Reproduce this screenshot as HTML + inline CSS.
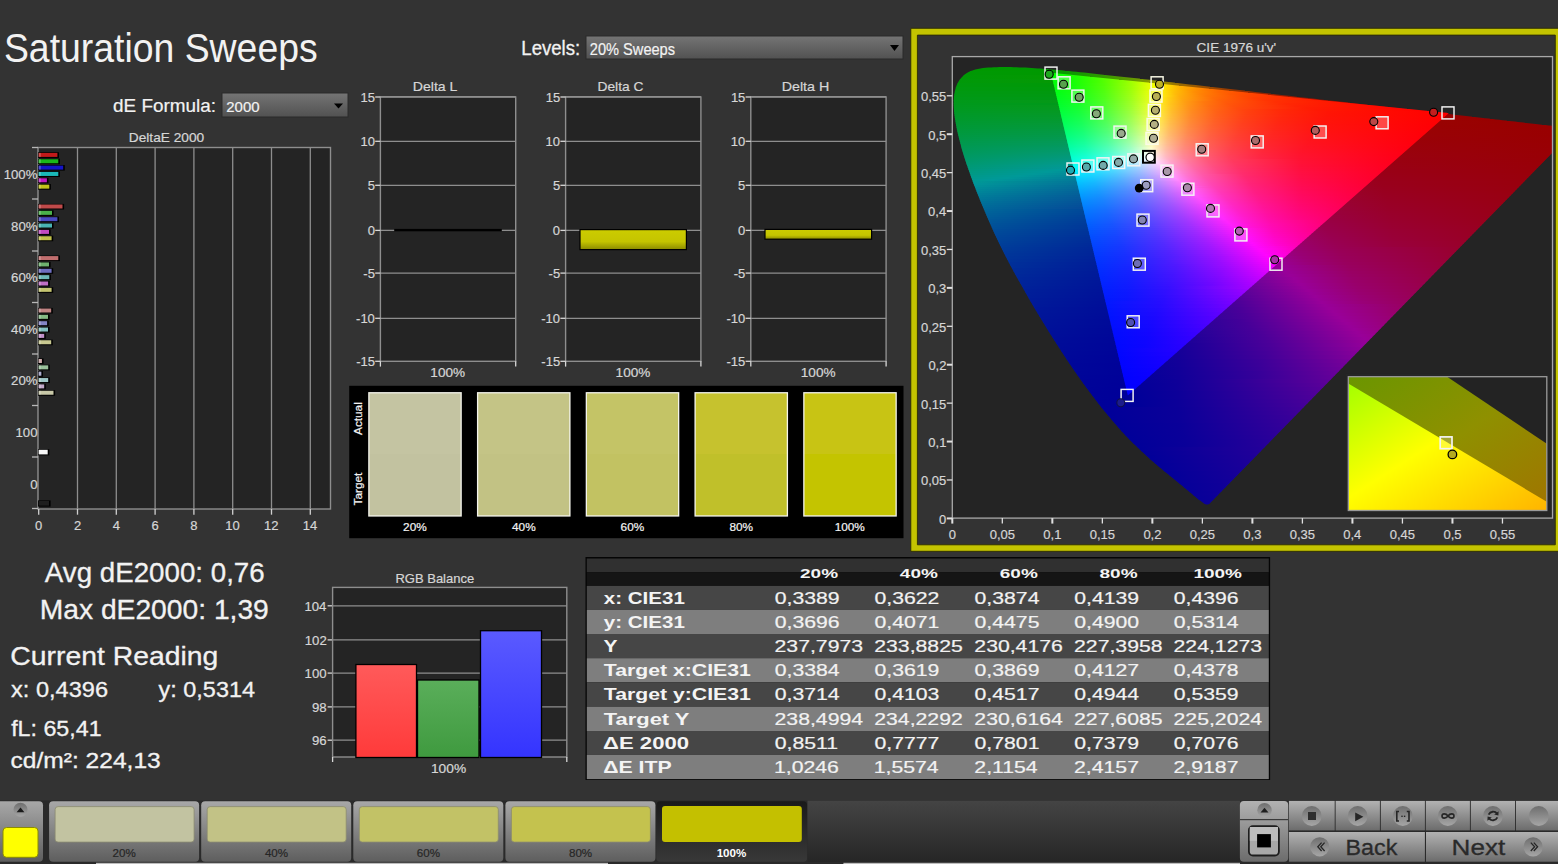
<!DOCTYPE html><html><head><meta charset="utf-8"><style>html,body{margin:0;padding:0;background:#333;overflow:hidden}svg{display:block;font-family:"Liberation Sans",sans-serif}</style></head><body>
<svg width="1558" height="864" viewBox="0 0 1558 864">
<defs>
<linearGradient id="dd" x1="0" y1="0" x2="0" y2="1"><stop offset="0" stop-color="#747474"/><stop offset="1" stop-color="#525252"/></linearGradient>
<linearGradient id="ybar" x1="0" y1="0" x2="0" y2="1"><stop offset="0" stop-color="#cccc00"/><stop offset=".6" stop-color="#c4c400"/><stop offset="1" stop-color="#8a8a00"/></linearGradient>
<linearGradient id="btn" x1="0" y1="0" x2="0" y2="1"><stop offset="0" stop-color="#a8a8a8"/><stop offset="1" stop-color="#5e5e5e"/></linearGradient>
<linearGradient id="btnsel" x1="0" y1="0" x2="0" y2="1"><stop offset="0" stop-color="#1a1a1a"/><stop offset="1" stop-color="#383838"/></linearGradient>
<linearGradient id="barbg" x1="0" y1="0" x2="0" y2="1"><stop offset="0" stop-color="#1e1e1e"/><stop offset="1" stop-color="#3c3c3c"/></linearGradient>
<linearGradient id="hdr" x1="0" y1="0" x2="0" y2="1"><stop offset="0" stop-color="#333"/><stop offset=".5" stop-color="#2a2a2a"/><stop offset=".5" stop-color="#161616"/><stop offset="1" stop-color="#141414"/></linearGradient>
<linearGradient id="rb" x1="0" y1="0" x2="0" y2="1"><stop offset="0" stop-color="#ff5a5a"/><stop offset="1" stop-color="#ff3a3a"/></linearGradient>
<linearGradient id="gb" x1="0" y1="0" x2="0" y2="1"><stop offset="0" stop-color="#5aae5a"/><stop offset="1" stop-color="#3f9a3f"/></linearGradient>
<linearGradient id="bb" x1="0" y1="0" x2="0" y2="1"><stop offset="0" stop-color="#5a5aff"/><stop offset="1" stop-color="#3434ff"/></linearGradient>
<radialGradient id="circ" cx=".5" cy=".3" r=".7"><stop offset="0" stop-color="#9a9a9a"/><stop offset="1" stop-color="#5a5a5a"/></radialGradient>
</defs>
<rect x="0" y="0" width="1558" height="864" fill="#333333"/>
<text x="3.92" y="61.7" font-size="40.5" textLength="313.76" lengthAdjust="spacingAndGlyphs" fill="#f2f2f2">Saturation Sweeps</text>
<text x="521.31" y="55.2" font-size="19.5" textLength="58.93" lengthAdjust="spacingAndGlyphs" fill="#f2f2f2" stroke="#f2f2f2" stroke-width="0.3">Levels:</text>
<rect x="585.5" y="35.5" width="318" height="24" fill="#2a2a2a"/>
<rect x="586.5" y="36.5" width="316" height="22" fill="url(#dd)"/>
<text x="589.87" y="54.8" font-size="16.2" textLength="85.17" lengthAdjust="spacingAndGlyphs" fill="#f2f2f2" stroke="#f2f2f2" stroke-width="0.2">20% Sweeps</text>
<path d="M890 45 L899 45 L894.5 51 Z" fill="#000"/>
<text x="113.04" y="111.5" font-size="17.6" textLength="102.99" lengthAdjust="spacingAndGlyphs" fill="#f2f2f2" stroke="#f2f2f2" stroke-width="0.2">dE Formula:</text>
<rect x="221.5" y="92.5" width="127" height="25" fill="#2a2a2a"/>
<rect x="222.5" y="93.5" width="125" height="23" fill="url(#dd)"/>
<text x="226.25" y="111.5" font-size="15.2" textLength="33.27" lengthAdjust="spacingAndGlyphs" fill="#f2f2f2" stroke="#f2f2f2" stroke-width="0.2">2000</text>
<path d="M334 103.5 L343 103.5 L338.5 108.5 Z" fill="#000"/>
<text x="128.8" y="142" font-size="12.9" textLength="75.36" lengthAdjust="spacingAndGlyphs" fill="#d6d6d6" stroke="#d6d6d6" stroke-width="0.2">DeltaE 2000</text>
<rect x="38" y="147.5" width="292.5" height="361.5" fill="#242424"/>
<line x1="77.5" y1="147.5" x2="77.5" y2="509" stroke="#8e8e8e" stroke-width="1.3"/>
<line x1="116.3" y1="147.5" x2="116.3" y2="509" stroke="#8e8e8e" stroke-width="1.3"/>
<line x1="155.1" y1="147.5" x2="155.1" y2="509" stroke="#8e8e8e" stroke-width="1.3"/>
<line x1="193.9" y1="147.5" x2="193.9" y2="509" stroke="#8e8e8e" stroke-width="1.3"/>
<line x1="232.7" y1="147.5" x2="232.7" y2="509" stroke="#8e8e8e" stroke-width="1.3"/>
<line x1="271.5" y1="147.5" x2="271.5" y2="509" stroke="#8e8e8e" stroke-width="1.3"/>
<line x1="310.3" y1="147.5" x2="310.3" y2="509" stroke="#8e8e8e" stroke-width="1.3"/>
<rect x="38" y="147.5" width="292.5" height="361.5" fill="none" stroke="#8e8e8e" stroke-width="1.4"/>
<line x1="32" y1="147.5" x2="38" y2="147.5" stroke="#b8b8b8" stroke-width="1.3"/>
<line x1="32" y1="199" x2="38" y2="199" stroke="#b8b8b8" stroke-width="1.3"/>
<line x1="32" y1="251" x2="38" y2="251" stroke="#b8b8b8" stroke-width="1.3"/>
<line x1="32" y1="302.5" x2="38" y2="302.5" stroke="#b8b8b8" stroke-width="1.3"/>
<line x1="32" y1="354" x2="38" y2="354" stroke="#b8b8b8" stroke-width="1.3"/>
<line x1="32" y1="405.5" x2="38" y2="405.5" stroke="#b8b8b8" stroke-width="1.3"/>
<line x1="32" y1="457" x2="38" y2="457" stroke="#b8b8b8" stroke-width="1.3"/>
<line x1="32" y1="508.5" x2="38" y2="508.5" stroke="#b8b8b8" stroke-width="1.3"/>
<line x1="38.7" y1="509" x2="38.7" y2="514.7" stroke="#d0d0d0" stroke-width="1.3"/>
<text x="35.06" y="530.2" font-size="13" textLength="7.23" lengthAdjust="spacingAndGlyphs" fill="#d6d6d6" stroke="#d6d6d6" stroke-width="0.2">0</text>
<line x1="77.5" y1="509" x2="77.5" y2="514.7" stroke="#d0d0d0" stroke-width="1.3"/>
<text x="73.89" y="530.2" font-size="13" textLength="7.23" lengthAdjust="spacingAndGlyphs" fill="#d6d6d6" stroke="#d6d6d6" stroke-width="0.2">2</text>
<line x1="116.3" y1="509" x2="116.3" y2="514.7" stroke="#d0d0d0" stroke-width="1.3"/>
<text x="112.72" y="530.2" font-size="13" textLength="7.23" lengthAdjust="spacingAndGlyphs" fill="#d6d6d6" stroke="#d6d6d6" stroke-width="0.2">4</text>
<line x1="155.1" y1="509" x2="155.1" y2="514.7" stroke="#d0d0d0" stroke-width="1.3"/>
<text x="151.43" y="530.2" font-size="13" textLength="7.23" lengthAdjust="spacingAndGlyphs" fill="#d6d6d6" stroke="#d6d6d6" stroke-width="0.2">6</text>
<line x1="193.9" y1="509" x2="193.9" y2="514.7" stroke="#d0d0d0" stroke-width="1.3"/>
<text x="190.26" y="530.2" font-size="13" textLength="7.23" lengthAdjust="spacingAndGlyphs" fill="#d6d6d6" stroke="#d6d6d6" stroke-width="0.2">8</text>
<line x1="232.7" y1="509" x2="232.7" y2="514.7" stroke="#d0d0d0" stroke-width="1.3"/>
<text x="225.22" y="530.2" font-size="13" textLength="14.46" lengthAdjust="spacingAndGlyphs" fill="#d6d6d6" stroke="#d6d6d6" stroke-width="0.2">10</text>
<line x1="271.5" y1="509" x2="271.5" y2="514.7" stroke="#d0d0d0" stroke-width="1.3"/>
<text x="264.12" y="530.2" font-size="13" textLength="14.46" lengthAdjust="spacingAndGlyphs" fill="#d6d6d6" stroke="#d6d6d6" stroke-width="0.2">12</text>
<line x1="310.3" y1="509" x2="310.3" y2="514.7" stroke="#d0d0d0" stroke-width="1.3"/>
<text x="302.76" y="530.2" font-size="13" textLength="14.46" lengthAdjust="spacingAndGlyphs" fill="#d6d6d6" stroke="#d6d6d6" stroke-width="0.2">14</text>
<text x="3.67" y="179" font-size="13.2" textLength="33.76" lengthAdjust="spacingAndGlyphs" fill="#d6d6d6" stroke="#d6d6d6" stroke-width="0.2">100%</text>
<text x="11.06" y="230.5" font-size="13.2" textLength="26.42" lengthAdjust="spacingAndGlyphs" fill="#d6d6d6" stroke="#d6d6d6" stroke-width="0.2">80%</text>
<text x="11.06" y="282" font-size="13.2" textLength="26.42" lengthAdjust="spacingAndGlyphs" fill="#d6d6d6" stroke="#d6d6d6" stroke-width="0.2">60%</text>
<text x="11.06" y="333.5" font-size="13.2" textLength="26.42" lengthAdjust="spacingAndGlyphs" fill="#d6d6d6" stroke="#d6d6d6" stroke-width="0.2">40%</text>
<text x="11.06" y="385" font-size="13.2" textLength="26.42" lengthAdjust="spacingAndGlyphs" fill="#d6d6d6" stroke="#d6d6d6" stroke-width="0.2">20%</text>
<text x="15.48" y="437" font-size="13.2" textLength="22.02" lengthAdjust="spacingAndGlyphs" fill="#d6d6d6" stroke="#d6d6d6" stroke-width="0.2">100</text>
<text x="30.14" y="488.5" font-size="13.2" textLength="7.34" lengthAdjust="spacingAndGlyphs" fill="#d6d6d6" stroke="#d6d6d6" stroke-width="0.2">0</text>
<rect x="38" y="152.3" width="21" height="5.6" fill="#000"/>
<rect x="38.6" y="152.9" width="18.8" height="4" fill="#c21a1a"/>
<rect x="38.6" y="152.9" width="2.2" height="4" fill="#fff" fill-opacity=".25"/>
<rect x="38" y="158.65" width="21.9" height="5.6" fill="#000"/>
<rect x="38.6" y="159.25" width="19.7" height="4" fill="#1ab81a"/>
<rect x="38.6" y="159.25" width="2.2" height="4" fill="#fff" fill-opacity=".25"/>
<rect x="38" y="165" width="26.8" height="5.6" fill="#000"/>
<rect x="38.6" y="165.6" width="24.6" height="4" fill="#1414c8"/>
<rect x="38.6" y="165.6" width="2.2" height="4" fill="#fff" fill-opacity=".25"/>
<rect x="38" y="171.35" width="21.9" height="5.6" fill="#000"/>
<rect x="38.6" y="171.95" width="19.7" height="4" fill="#1ab8b8"/>
<rect x="38.6" y="171.95" width="2.2" height="4" fill="#fff" fill-opacity=".25"/>
<rect x="38" y="177.7" width="10.5" height="5.6" fill="#000"/>
<rect x="38.6" y="178.3" width="8.3" height="4" fill="#c01ac0"/>
<rect x="38.6" y="178.3" width="2.2" height="4" fill="#fff" fill-opacity=".25"/>
<rect x="38" y="184.05" width="12.9" height="5.6" fill="#000"/>
<rect x="38.6" y="184.65" width="10.7" height="4" fill="#c2c21a"/>
<rect x="38.6" y="184.65" width="2.2" height="4" fill="#fff" fill-opacity=".25"/>
<rect x="38" y="203.9" width="26.1" height="5.6" fill="#000"/>
<rect x="38.6" y="204.5" width="23.9" height="4" fill="#c04a4a"/>
<rect x="38.6" y="204.5" width="2.2" height="4" fill="#fff" fill-opacity=".25"/>
<rect x="38" y="210.25" width="15.6" height="5.6" fill="#000"/>
<rect x="38.6" y="210.85" width="13.4" height="4" fill="#4ab04a"/>
<rect x="38.6" y="210.85" width="2.2" height="4" fill="#fff" fill-opacity=".25"/>
<rect x="38" y="216.6" width="21" height="5.6" fill="#000"/>
<rect x="38.6" y="217.2" width="18.8" height="4" fill="#4a4ac0"/>
<rect x="38.6" y="217.2" width="2.2" height="4" fill="#fff" fill-opacity=".25"/>
<rect x="38" y="222.95" width="15.6" height="5.6" fill="#000"/>
<rect x="38.6" y="223.55" width="13.4" height="4" fill="#4ab4b4"/>
<rect x="38.6" y="223.55" width="2.2" height="4" fill="#fff" fill-opacity=".25"/>
<rect x="38" y="229.3" width="12.6" height="5.6" fill="#000"/>
<rect x="38.6" y="229.9" width="10.4" height="4" fill="#c04ac0"/>
<rect x="38.6" y="229.9" width="2.2" height="4" fill="#fff" fill-opacity=".25"/>
<rect x="38" y="235.65" width="15.2" height="5.6" fill="#000"/>
<rect x="38.6" y="236.25" width="13" height="4" fill="#c0c04a"/>
<rect x="38.6" y="236.25" width="2.2" height="4" fill="#fff" fill-opacity=".25"/>
<rect x="38" y="255.5" width="21.9" height="5.6" fill="#000"/>
<rect x="38.6" y="256.1" width="19.7" height="4" fill="#c06e6e"/>
<rect x="38.6" y="256.1" width="2.2" height="4" fill="#fff" fill-opacity=".25"/>
<rect x="38" y="261.85" width="12.6" height="5.6" fill="#000"/>
<rect x="38.6" y="262.45" width="10.4" height="4" fill="#6eb06e"/>
<rect x="38.6" y="262.45" width="2.2" height="4" fill="#fff" fill-opacity=".25"/>
<rect x="38" y="268.2" width="15.2" height="5.6" fill="#000"/>
<rect x="38.6" y="268.8" width="13" height="4" fill="#6e6ec0"/>
<rect x="38.6" y="268.8" width="2.2" height="4" fill="#fff" fill-opacity=".25"/>
<rect x="38" y="274.55" width="12.9" height="5.6" fill="#000"/>
<rect x="38.6" y="275.15" width="10.7" height="4" fill="#6eb8b8"/>
<rect x="38.6" y="275.15" width="2.2" height="4" fill="#fff" fill-opacity=".25"/>
<rect x="38" y="280.9" width="11.7" height="5.6" fill="#000"/>
<rect x="38.6" y="281.5" width="9.5" height="4" fill="#c070c4"/>
<rect x="38.6" y="281.5" width="2.2" height="4" fill="#fff" fill-opacity=".25"/>
<rect x="38" y="287.25" width="15.2" height="5.6" fill="#000"/>
<rect x="38.6" y="287.85" width="13" height="4" fill="#c4c470"/>
<rect x="38.6" y="287.85" width="2.2" height="4" fill="#fff" fill-opacity=".25"/>
<rect x="38" y="307.9" width="14.8" height="5.6" fill="#000"/>
<rect x="38.6" y="308.5" width="12.6" height="4" fill="#c08484"/>
<rect x="38.6" y="308.5" width="2.2" height="4" fill="#fff" fill-opacity=".25"/>
<rect x="38" y="314.25" width="11.6" height="5.6" fill="#000"/>
<rect x="38.6" y="314.85" width="9.4" height="4" fill="#84b884"/>
<rect x="38.6" y="314.85" width="2.2" height="4" fill="#fff" fill-opacity=".25"/>
<rect x="38" y="320.6" width="10.7" height="5.6" fill="#000"/>
<rect x="38.6" y="321.2" width="8.5" height="4" fill="#8484c4"/>
<rect x="38.6" y="321.2" width="2.2" height="4" fill="#fff" fill-opacity=".25"/>
<rect x="38" y="326.95" width="11.6" height="5.6" fill="#000"/>
<rect x="38.6" y="327.55" width="9.4" height="4" fill="#84c0c0"/>
<rect x="38.6" y="327.55" width="2.2" height="4" fill="#fff" fill-opacity=".25"/>
<rect x="38" y="333.3" width="7.8" height="5.6" fill="#000"/>
<rect x="38.6" y="333.9" width="5.6" height="4" fill="#c090c8"/>
<rect x="38.6" y="333.9" width="2.2" height="4" fill="#fff" fill-opacity=".25"/>
<rect x="38" y="339.65" width="14.8" height="5.6" fill="#000"/>
<rect x="38.6" y="340.25" width="12.6" height="4" fill="#c8c890"/>
<rect x="38.6" y="340.25" width="2.2" height="4" fill="#fff" fill-opacity=".25"/>
<rect x="38" y="358.4" width="5.6" height="5.6" fill="#000"/>
<rect x="38.6" y="359" width="3.4" height="4" fill="#c09a9a"/>
<rect x="38.6" y="359" width="2.2" height="4" fill="#fff" fill-opacity=".25"/>
<rect x="38" y="364.75" width="11.8" height="5.6" fill="#000"/>
<rect x="38.6" y="365.35" width="9.6" height="4" fill="#9ac09a"/>
<rect x="38.6" y="365.35" width="2.2" height="4" fill="#fff" fill-opacity=".25"/>
<rect x="38" y="371.1" width="5" height="5.6" fill="#000"/>
<rect x="38.6" y="371.7" width="2.8" height="4" fill="#9a9ac0"/>
<rect x="38.6" y="371.7" width="2.2" height="4" fill="#fff" fill-opacity=".25"/>
<rect x="38" y="377.45" width="11.8" height="5.6" fill="#000"/>
<rect x="38.6" y="378.05" width="9.6" height="4" fill="#a0c8c8"/>
<rect x="38.6" y="378.05" width="2.2" height="4" fill="#fff" fill-opacity=".25"/>
<rect x="38" y="383.8" width="7.8" height="5.6" fill="#000"/>
<rect x="38.6" y="384.4" width="5.6" height="4" fill="#c0a8c8"/>
<rect x="38.6" y="384.4" width="2.2" height="4" fill="#fff" fill-opacity=".25"/>
<rect x="38" y="390.15" width="17.1" height="5.6" fill="#000"/>
<rect x="38.6" y="390.75" width="14.9" height="4" fill="#c8c8a8"/>
<rect x="38.6" y="390.75" width="2.2" height="4" fill="#fff" fill-opacity=".25"/>
<rect x="38" y="449.2" width="11.3" height="6.2" fill="#000"/>
<rect x="38.6" y="449.8" width="9.1" height="4.6" fill="#f6f6f6"/>
<rect x="38" y="500.4" width="12.6" height="6.2" fill="#000"/>
<rect x="38.6" y="501" width="10.4" height="4.6" fill="#1e1e1e"/>
<text x="412.77" y="91.3" font-size="12.9" textLength="44.7" lengthAdjust="spacingAndGlyphs" fill="#d6d6d6" stroke="#d6d6d6" stroke-width="0.2">Delta L</text>
<rect x="380.4" y="97" width="135.3" height="264.3" fill="#242424"/>
<line x1="380.4" y1="141.3" x2="515.7" y2="141.3" stroke="#8e8e8e" stroke-width="1.3"/>
<line x1="380.4" y1="185.3" x2="515.7" y2="185.3" stroke="#8e8e8e" stroke-width="1.3"/>
<line x1="380.4" y1="230.4" x2="515.7" y2="230.4" stroke="#8e8e8e" stroke-width="1.3"/>
<line x1="380.4" y1="273.1" x2="515.7" y2="273.1" stroke="#8e8e8e" stroke-width="1.3"/>
<line x1="380.4" y1="318.3" x2="515.7" y2="318.3" stroke="#8e8e8e" stroke-width="1.3"/>
<rect x="380.4" y="97" width="135.3" height="264.3" fill="none" stroke="#8e8e8e" stroke-width="1.4"/>
<line x1="380.4" y1="96.7" x2="515.7" y2="96.7" stroke="#8e8e8e" stroke-width="1.4"/>
<line x1="375.2" y1="97" x2="380.4" y2="97" stroke="#d8d8d8" stroke-width="1.3"/>
<text x="360.49" y="101.6" font-size="13" textLength="14.46" lengthAdjust="spacingAndGlyphs" fill="#d6d6d6" stroke="#d6d6d6" stroke-width="0.2">15</text>
<line x1="375.2" y1="141.3" x2="380.4" y2="141.3" stroke="#d8d8d8" stroke-width="1.3"/>
<text x="360.42" y="145.9" font-size="13" textLength="14.46" lengthAdjust="spacingAndGlyphs" fill="#d6d6d6" stroke="#d6d6d6" stroke-width="0.2">10</text>
<line x1="375.2" y1="185.3" x2="380.4" y2="185.3" stroke="#d8d8d8" stroke-width="1.3"/>
<text x="367.7" y="189.9" font-size="13" textLength="7.23" lengthAdjust="spacingAndGlyphs" fill="#d6d6d6" stroke="#d6d6d6" stroke-width="0.2">5</text>
<line x1="375.2" y1="230.4" x2="380.4" y2="230.4" stroke="#d8d8d8" stroke-width="1.3"/>
<text x="367.64" y="235" font-size="13" textLength="7.23" lengthAdjust="spacingAndGlyphs" fill="#d6d6d6" stroke="#d6d6d6" stroke-width="0.2">0</text>
<line x1="375.2" y1="273.1" x2="380.4" y2="273.1" stroke="#d8d8d8" stroke-width="1.3"/>
<text x="363.35" y="277.7" font-size="13" textLength="11.56" lengthAdjust="spacingAndGlyphs" fill="#d6d6d6" stroke="#d6d6d6" stroke-width="0.2">-5</text>
<line x1="375.2" y1="318.3" x2="380.4" y2="318.3" stroke="#d8d8d8" stroke-width="1.3"/>
<text x="356.07" y="322.9" font-size="13" textLength="18.79" lengthAdjust="spacingAndGlyphs" fill="#d6d6d6" stroke="#d6d6d6" stroke-width="0.2">-10</text>
<line x1="375.2" y1="361.3" x2="380.4" y2="361.3" stroke="#d8d8d8" stroke-width="1.3"/>
<text x="356.13" y="365.9" font-size="13" textLength="18.79" lengthAdjust="spacingAndGlyphs" fill="#d6d6d6" stroke="#d6d6d6" stroke-width="0.2">-15</text>
<line x1="380.4" y1="361.3" x2="380.4" y2="366.6" stroke="#d8d8d8" stroke-width="1.3"/>
<line x1="515.7" y1="361.3" x2="515.7" y2="366.6" stroke="#d8d8d8" stroke-width="1.3"/>
<text x="430.38" y="377.4" font-size="12.9" textLength="34.76" lengthAdjust="spacingAndGlyphs" fill="#d6d6d6" stroke="#d6d6d6" stroke-width="0.2">100%</text>
<text x="597.5" y="91.3" font-size="12.9" textLength="45.95" lengthAdjust="spacingAndGlyphs" fill="#d6d6d6" stroke="#d6d6d6" stroke-width="0.2">Delta C</text>
<rect x="565.6" y="97" width="135.3" height="264.3" fill="#242424"/>
<line x1="565.6" y1="141.3" x2="700.9" y2="141.3" stroke="#8e8e8e" stroke-width="1.3"/>
<line x1="565.6" y1="185.3" x2="700.9" y2="185.3" stroke="#8e8e8e" stroke-width="1.3"/>
<line x1="565.6" y1="230.4" x2="700.9" y2="230.4" stroke="#8e8e8e" stroke-width="1.3"/>
<line x1="565.6" y1="273.1" x2="700.9" y2="273.1" stroke="#8e8e8e" stroke-width="1.3"/>
<line x1="565.6" y1="318.3" x2="700.9" y2="318.3" stroke="#8e8e8e" stroke-width="1.3"/>
<rect x="565.6" y="97" width="135.3" height="264.3" fill="none" stroke="#8e8e8e" stroke-width="1.4"/>
<line x1="565.6" y1="96.7" x2="700.9" y2="96.7" stroke="#8e8e8e" stroke-width="1.4"/>
<line x1="560.4" y1="97" x2="565.6" y2="97" stroke="#d8d8d8" stroke-width="1.3"/>
<text x="545.69" y="101.6" font-size="13" textLength="14.46" lengthAdjust="spacingAndGlyphs" fill="#d6d6d6" stroke="#d6d6d6" stroke-width="0.2">15</text>
<line x1="560.4" y1="141.3" x2="565.6" y2="141.3" stroke="#d8d8d8" stroke-width="1.3"/>
<text x="545.62" y="145.9" font-size="13" textLength="14.46" lengthAdjust="spacingAndGlyphs" fill="#d6d6d6" stroke="#d6d6d6" stroke-width="0.2">10</text>
<line x1="560.4" y1="185.3" x2="565.6" y2="185.3" stroke="#d8d8d8" stroke-width="1.3"/>
<text x="552.9" y="189.9" font-size="13" textLength="7.23" lengthAdjust="spacingAndGlyphs" fill="#d6d6d6" stroke="#d6d6d6" stroke-width="0.2">5</text>
<line x1="560.4" y1="230.4" x2="565.6" y2="230.4" stroke="#d8d8d8" stroke-width="1.3"/>
<text x="552.84" y="235" font-size="13" textLength="7.23" lengthAdjust="spacingAndGlyphs" fill="#d6d6d6" stroke="#d6d6d6" stroke-width="0.2">0</text>
<line x1="560.4" y1="273.1" x2="565.6" y2="273.1" stroke="#d8d8d8" stroke-width="1.3"/>
<text x="548.55" y="277.7" font-size="13" textLength="11.56" lengthAdjust="spacingAndGlyphs" fill="#d6d6d6" stroke="#d6d6d6" stroke-width="0.2">-5</text>
<line x1="560.4" y1="318.3" x2="565.6" y2="318.3" stroke="#d8d8d8" stroke-width="1.3"/>
<text x="541.27" y="322.9" font-size="13" textLength="18.79" lengthAdjust="spacingAndGlyphs" fill="#d6d6d6" stroke="#d6d6d6" stroke-width="0.2">-10</text>
<line x1="560.4" y1="361.3" x2="565.6" y2="361.3" stroke="#d8d8d8" stroke-width="1.3"/>
<text x="541.33" y="365.9" font-size="13" textLength="18.79" lengthAdjust="spacingAndGlyphs" fill="#d6d6d6" stroke="#d6d6d6" stroke-width="0.2">-15</text>
<line x1="565.6" y1="361.3" x2="565.6" y2="366.6" stroke="#d8d8d8" stroke-width="1.3"/>
<line x1="700.9" y1="361.3" x2="700.9" y2="366.6" stroke="#d8d8d8" stroke-width="1.3"/>
<text x="615.58" y="377.4" font-size="12.9" textLength="34.76" lengthAdjust="spacingAndGlyphs" fill="#d6d6d6" stroke="#d6d6d6" stroke-width="0.2">100%</text>
<text x="781.66" y="91.3" font-size="12.9" textLength="47.55" lengthAdjust="spacingAndGlyphs" fill="#d6d6d6" stroke="#d6d6d6" stroke-width="0.2">Delta H</text>
<rect x="750.8" y="97" width="135.3" height="264.3" fill="#242424"/>
<line x1="750.8" y1="141.3" x2="886.1" y2="141.3" stroke="#8e8e8e" stroke-width="1.3"/>
<line x1="750.8" y1="185.3" x2="886.1" y2="185.3" stroke="#8e8e8e" stroke-width="1.3"/>
<line x1="750.8" y1="230.4" x2="886.1" y2="230.4" stroke="#8e8e8e" stroke-width="1.3"/>
<line x1="750.8" y1="273.1" x2="886.1" y2="273.1" stroke="#8e8e8e" stroke-width="1.3"/>
<line x1="750.8" y1="318.3" x2="886.1" y2="318.3" stroke="#8e8e8e" stroke-width="1.3"/>
<rect x="750.8" y="97" width="135.3" height="264.3" fill="none" stroke="#8e8e8e" stroke-width="1.4"/>
<line x1="750.8" y1="96.7" x2="886.1" y2="96.7" stroke="#8e8e8e" stroke-width="1.4"/>
<line x1="745.6" y1="97" x2="750.8" y2="97" stroke="#d8d8d8" stroke-width="1.3"/>
<text x="730.89" y="101.6" font-size="13" textLength="14.46" lengthAdjust="spacingAndGlyphs" fill="#d6d6d6" stroke="#d6d6d6" stroke-width="0.2">15</text>
<line x1="745.6" y1="141.3" x2="750.8" y2="141.3" stroke="#d8d8d8" stroke-width="1.3"/>
<text x="730.82" y="145.9" font-size="13" textLength="14.46" lengthAdjust="spacingAndGlyphs" fill="#d6d6d6" stroke="#d6d6d6" stroke-width="0.2">10</text>
<line x1="745.6" y1="185.3" x2="750.8" y2="185.3" stroke="#d8d8d8" stroke-width="1.3"/>
<text x="738.11" y="189.9" font-size="13" textLength="7.23" lengthAdjust="spacingAndGlyphs" fill="#d6d6d6" stroke="#d6d6d6" stroke-width="0.2">5</text>
<line x1="745.6" y1="230.4" x2="750.8" y2="230.4" stroke="#d8d8d8" stroke-width="1.3"/>
<text x="738.04" y="235" font-size="13" textLength="7.23" lengthAdjust="spacingAndGlyphs" fill="#d6d6d6" stroke="#d6d6d6" stroke-width="0.2">0</text>
<line x1="745.6" y1="273.1" x2="750.8" y2="273.1" stroke="#d8d8d8" stroke-width="1.3"/>
<text x="733.75" y="277.7" font-size="13" textLength="11.56" lengthAdjust="spacingAndGlyphs" fill="#d6d6d6" stroke="#d6d6d6" stroke-width="0.2">-5</text>
<line x1="745.6" y1="318.3" x2="750.8" y2="318.3" stroke="#d8d8d8" stroke-width="1.3"/>
<text x="726.47" y="322.9" font-size="13" textLength="18.79" lengthAdjust="spacingAndGlyphs" fill="#d6d6d6" stroke="#d6d6d6" stroke-width="0.2">-10</text>
<line x1="745.6" y1="361.3" x2="750.8" y2="361.3" stroke="#d8d8d8" stroke-width="1.3"/>
<text x="726.53" y="365.9" font-size="13" textLength="18.79" lengthAdjust="spacingAndGlyphs" fill="#d6d6d6" stroke="#d6d6d6" stroke-width="0.2">-15</text>
<line x1="750.8" y1="361.3" x2="750.8" y2="366.6" stroke="#d8d8d8" stroke-width="1.3"/>
<line x1="886.1" y1="361.3" x2="886.1" y2="366.6" stroke="#d8d8d8" stroke-width="1.3"/>
<text x="800.78" y="377.4" font-size="12.9" textLength="34.76" lengthAdjust="spacingAndGlyphs" fill="#d6d6d6" stroke="#d6d6d6" stroke-width="0.2">100%</text>
<rect x="394.2" y="228.9" width="107.6" height="2.4" fill="#000"/>
<rect x="580" y="229.6" width="106.4" height="20" fill="url(#ybar)" stroke="#000" stroke-width="1.2"/>
<rect x="765" y="229.4" width="106.6" height="9.8" fill="url(#ybar)" stroke="#000" stroke-width="1.2"/>
<rect x="349.2" y="385.8" width="554.3" height="152.4" fill="#000"/>
<rect x="368.2" y="392.1" width="93.6" height="124.5" fill="#f4f4ec"/>
<rect x="369.5" y="393.4" width="91" height="60.6" fill="#c4c4a2"/>
<rect x="369.5" y="454" width="91" height="61.3" fill="#c2c2a0"/>
<text x="403.11" y="531.3" font-size="11.8" textLength="23.62" lengthAdjust="spacingAndGlyphs" fill="#f4f4f4" stroke="#f4f4f4" stroke-width="0.2">20%</text>
<rect x="476.95" y="392.1" width="93.6" height="124.5" fill="#f4f4ec"/>
<rect x="478.25" y="393.4" width="91" height="60.6" fill="#c4c486"/>
<rect x="478.25" y="454" width="91" height="61.3" fill="#c2c284"/>
<text x="512.04" y="531.3" font-size="11.8" textLength="23.62" lengthAdjust="spacingAndGlyphs" fill="#f4f4f4" stroke="#f4f4f4" stroke-width="0.2">40%</text>
<rect x="585.7" y="392.1" width="93.6" height="124.5" fill="#f4f4ec"/>
<rect x="587" y="393.4" width="91" height="60.6" fill="#c4c466"/>
<rect x="587" y="454" width="91" height="61.3" fill="#c2c262"/>
<text x="620.61" y="531.3" font-size="11.8" textLength="23.62" lengthAdjust="spacingAndGlyphs" fill="#f4f4f4" stroke="#f4f4f4" stroke-width="0.2">60%</text>
<rect x="694.45" y="392.1" width="93.6" height="124.5" fill="#f4f4ec"/>
<rect x="695.75" y="393.4" width="91" height="60.6" fill="#c6c22e"/>
<rect x="695.75" y="454" width="91" height="61.3" fill="#c0c02a"/>
<text x="729.39" y="531.3" font-size="11.8" textLength="23.62" lengthAdjust="spacingAndGlyphs" fill="#f4f4f4" stroke="#f4f4f4" stroke-width="0.2">80%</text>
<rect x="803.2" y="392.1" width="93.6" height="124.5" fill="#f4f4ec"/>
<rect x="804.5" y="393.4" width="91" height="60.6" fill="#c8c414"/>
<rect x="804.5" y="454" width="91" height="61.3" fill="#c4c400"/>
<text x="834.66" y="531.3" font-size="11.8" textLength="30.18" lengthAdjust="spacingAndGlyphs" fill="#f4f4f4" stroke="#f4f4f4" stroke-width="0.2">100%</text>
<g transform="translate(361.5,419) rotate(-90)">
<text x="-15.99" y="0" font-size="11.8" textLength="32.8" lengthAdjust="spacingAndGlyphs" fill="#f4f4f4" stroke="#f4f4f4" stroke-width="0.2">Actual</text>
</g>
<g transform="translate(361.5,489) rotate(-90)">
<text x="-16.46" y="0" font-size="11.8" textLength="32.8" lengthAdjust="spacingAndGlyphs" fill="#f4f4f4" stroke="#f4f4f4" stroke-width="0.2">Target</text>
</g>
<text x="44.8" y="581.5" font-size="27.8" textLength="219.89" lengthAdjust="spacingAndGlyphs" fill="#f2f2f2" stroke="#f2f2f2" stroke-width="0.3">Avg dE2000: 0,76</text>
<text x="39.74" y="619.2" font-size="27.8" textLength="229.08" lengthAdjust="spacingAndGlyphs" fill="#f2f2f2" stroke="#f2f2f2" stroke-width="0.3">Max dE2000: 1,39</text>
<text x="10.38" y="664.8" font-size="26.6" textLength="207.83" lengthAdjust="spacingAndGlyphs" fill="#f2f2f2" stroke="#f2f2f2" stroke-width="0.3">Current Reading</text>
<text x="11.06" y="697.4" font-size="21.2" textLength="96.96" lengthAdjust="spacingAndGlyphs" fill="#f2f2f2" stroke="#f2f2f2" stroke-width="0.3">x: 0,4396</text>
<text x="158.6" y="697.4" font-size="21.2" textLength="96.37" lengthAdjust="spacingAndGlyphs" fill="#f2f2f2" stroke="#f2f2f2" stroke-width="0.3">y: 0,5314</text>
<text x="11.15" y="735.5" font-size="21.2" textLength="90.44" lengthAdjust="spacingAndGlyphs" fill="#f2f2f2" stroke="#f2f2f2" stroke-width="0.3">fL: 65,41</text>
<text x="10.52" y="767.6" font-size="21.2" textLength="150.25" lengthAdjust="spacingAndGlyphs" fill="#f2f2f2" stroke="#f2f2f2" stroke-width="0.3">cd/m²: 224,13</text>
<text x="395.46" y="582.6" font-size="13" textLength="78.74" lengthAdjust="spacingAndGlyphs" fill="#d6d6d6" stroke="#d6d6d6" stroke-width="0.2">RGB Balance</text>
<rect x="332.6" y="587.4" width="234.2" height="169.6" fill="#242424"/>
<line x1="332.6" y1="605.8" x2="566.8" y2="605.8" stroke="#8e8e8e" stroke-width="1.3"/>
<line x1="327.6" y1="605.8" x2="332.6" y2="605.8" stroke="#d8d8d8" stroke-width="1.3"/>
<text x="304.45" y="610.6" font-size="13.2" textLength="22.02" lengthAdjust="spacingAndGlyphs" fill="#d6d6d6" stroke="#d6d6d6" stroke-width="0.2">104</text>
<line x1="332.6" y1="639.9" x2="566.8" y2="639.9" stroke="#8e8e8e" stroke-width="1.3"/>
<line x1="327.6" y1="639.9" x2="332.6" y2="639.9" stroke="#d8d8d8" stroke-width="1.3"/>
<text x="304.78" y="644.7" font-size="13.2" textLength="22.02" lengthAdjust="spacingAndGlyphs" fill="#d6d6d6" stroke="#d6d6d6" stroke-width="0.2">102</text>
<line x1="332.6" y1="673.1" x2="566.8" y2="673.1" stroke="#8e8e8e" stroke-width="1.3"/>
<line x1="327.6" y1="673.1" x2="332.6" y2="673.1" stroke="#d8d8d8" stroke-width="1.3"/>
<text x="304.58" y="677.9" font-size="13.2" textLength="22.02" lengthAdjust="spacingAndGlyphs" fill="#d6d6d6" stroke="#d6d6d6" stroke-width="0.2">100</text>
<line x1="332.6" y1="706.9" x2="566.8" y2="706.9" stroke="#8e8e8e" stroke-width="1.3"/>
<line x1="327.6" y1="706.9" x2="332.6" y2="706.9" stroke="#d8d8d8" stroke-width="1.3"/>
<text x="311.98" y="711.7" font-size="13.2" textLength="14.68" lengthAdjust="spacingAndGlyphs" fill="#d6d6d6" stroke="#d6d6d6" stroke-width="0.2">98</text>
<line x1="332.6" y1="740.2" x2="566.8" y2="740.2" stroke="#8e8e8e" stroke-width="1.3"/>
<line x1="327.6" y1="740.2" x2="332.6" y2="740.2" stroke="#d8d8d8" stroke-width="1.3"/>
<text x="311.98" y="745" font-size="13.2" textLength="14.68" lengthAdjust="spacingAndGlyphs" fill="#d6d6d6" stroke="#d6d6d6" stroke-width="0.2">96</text>
<rect x="332.6" y="587.4" width="234.2" height="169.6" fill="none" stroke="#8e8e8e" stroke-width="1.4"/>
<line x1="332.6" y1="757" x2="332.6" y2="762" stroke="#d8d8d8" stroke-width="1.3"/>
<line x1="566.8" y1="757" x2="566.8" y2="762" stroke="#d8d8d8" stroke-width="1.3"/>
<text x="430.97" y="772.6" font-size="13" textLength="35.18" lengthAdjust="spacingAndGlyphs" fill="#d6d6d6" stroke="#d6d6d6" stroke-width="0.2">100%</text>
<rect x="355.9" y="664.5" width="60.6" height="93" fill="url(#rb)" stroke="#000" stroke-width="1.3"/>
<rect x="417.5" y="680" width="61.5" height="77.5" fill="url(#gb)" stroke="#000" stroke-width="1.3"/>
<rect x="480.5" y="630.7" width="61" height="126.8" fill="url(#bb)" stroke="#000" stroke-width="1.3"/>
<rect x="585.5" y="557" width="684.6" height="223" fill="#050505"/>
<rect x="586.8" y="558.5" width="682" height="13.8" fill="#303030"/>
<rect x="586.8" y="572.3" width="682" height="13.6" fill="#151515"/>
<rect x="586.8" y="585.9" width="682" height="24" fill="#464646"/>
<rect x="586.8" y="609.9" width="682" height="24.1" fill="#7e7e7e"/>
<rect x="586.8" y="634" width="682" height="24.2" fill="#464646"/>
<rect x="586.8" y="658.2" width="682" height="24.2" fill="#7e7e7e"/>
<rect x="586.8" y="682.4" width="682" height="24.3" fill="#464646"/>
<rect x="586.8" y="706.7" width="682" height="24.3" fill="#7e7e7e"/>
<rect x="586.8" y="731" width="682" height="23.9" fill="#464646"/>
<rect x="586.8" y="754.9" width="682" height="24.2" fill="#7e7e7e"/>
<text x="603.79" y="603.7" font-size="16.2" textLength="81.05" lengthAdjust="spacingAndGlyphs" fill="#f4f4f4" font-weight="bold">x: CIE31</text>
<text x="774.75" y="603.7" font-size="16.2" textLength="64.91" lengthAdjust="spacingAndGlyphs" fill="#f2f2f2" stroke="#f2f2f2" stroke-width="0.2">0,3389</text>
<text x="874.45" y="603.7" font-size="16.2" textLength="64.91" lengthAdjust="spacingAndGlyphs" fill="#f2f2f2" stroke="#f2f2f2" stroke-width="0.2">0,3622</text>
<text x="974.55" y="603.7" font-size="16.2" textLength="64.91" lengthAdjust="spacingAndGlyphs" fill="#f2f2f2" stroke="#f2f2f2" stroke-width="0.2">0,3874</text>
<text x="1074.25" y="603.7" font-size="16.2" textLength="64.91" lengthAdjust="spacingAndGlyphs" fill="#f2f2f2" stroke="#f2f2f2" stroke-width="0.2">0,4139</text>
<text x="1173.75" y="603.7" font-size="16.2" textLength="64.91" lengthAdjust="spacingAndGlyphs" fill="#f2f2f2" stroke="#f2f2f2" stroke-width="0.2">0,4396</text>
<text x="603.79" y="627.7" font-size="16.2" textLength="81.05" lengthAdjust="spacingAndGlyphs" fill="#f4f4f4" font-weight="bold">y: CIE31</text>
<text x="774.75" y="627.7" font-size="16.2" textLength="64.91" lengthAdjust="spacingAndGlyphs" fill="#f2f2f2" stroke="#f2f2f2" stroke-width="0.2">0,3696</text>
<text x="874.45" y="627.7" font-size="16.2" textLength="64.91" lengthAdjust="spacingAndGlyphs" fill="#f2f2f2" stroke="#f2f2f2" stroke-width="0.2">0,4071</text>
<text x="974.55" y="627.7" font-size="16.2" textLength="64.91" lengthAdjust="spacingAndGlyphs" fill="#f2f2f2" stroke="#f2f2f2" stroke-width="0.2">0,4475</text>
<text x="1074.25" y="627.7" font-size="16.2" textLength="64.91" lengthAdjust="spacingAndGlyphs" fill="#f2f2f2" stroke="#f2f2f2" stroke-width="0.2">0,4900</text>
<text x="1173.75" y="627.7" font-size="16.2" textLength="64.91" lengthAdjust="spacingAndGlyphs" fill="#f2f2f2" stroke="#f2f2f2" stroke-width="0.2">0,5314</text>
<text x="603.58" y="651.8" font-size="16.2" textLength="14.05" lengthAdjust="spacingAndGlyphs" fill="#f4f4f4" font-weight="bold">Y</text>
<text x="774.54" y="651.8" font-size="16.2" textLength="88.52" lengthAdjust="spacingAndGlyphs" fill="#f2f2f2" stroke="#f2f2f2" stroke-width="0.2">237,7973</text>
<text x="874.24" y="651.8" font-size="16.2" textLength="88.52" lengthAdjust="spacingAndGlyphs" fill="#f2f2f2" stroke="#f2f2f2" stroke-width="0.2">233,8825</text>
<text x="974.34" y="651.8" font-size="16.2" textLength="88.52" lengthAdjust="spacingAndGlyphs" fill="#f2f2f2" stroke="#f2f2f2" stroke-width="0.2">230,4176</text>
<text x="1074.04" y="651.8" font-size="16.2" textLength="88.52" lengthAdjust="spacingAndGlyphs" fill="#f2f2f2" stroke="#f2f2f2" stroke-width="0.2">227,3958</text>
<text x="1173.54" y="651.8" font-size="16.2" textLength="88.52" lengthAdjust="spacingAndGlyphs" fill="#f2f2f2" stroke="#f2f2f2" stroke-width="0.2">224,1273</text>
<text x="603.79" y="676" font-size="16.2" textLength="147.12" lengthAdjust="spacingAndGlyphs" fill="#f4f4f4" font-weight="bold">Target x:CIE31</text>
<text x="774.75" y="676" font-size="16.2" textLength="64.91" lengthAdjust="spacingAndGlyphs" fill="#f2f2f2" stroke="#f2f2f2" stroke-width="0.2">0,3384</text>
<text x="874.45" y="676" font-size="16.2" textLength="64.91" lengthAdjust="spacingAndGlyphs" fill="#f2f2f2" stroke="#f2f2f2" stroke-width="0.2">0,3619</text>
<text x="974.55" y="676" font-size="16.2" textLength="64.91" lengthAdjust="spacingAndGlyphs" fill="#f2f2f2" stroke="#f2f2f2" stroke-width="0.2">0,3869</text>
<text x="1074.25" y="676" font-size="16.2" textLength="64.91" lengthAdjust="spacingAndGlyphs" fill="#f2f2f2" stroke="#f2f2f2" stroke-width="0.2">0,4127</text>
<text x="1173.75" y="676" font-size="16.2" textLength="64.91" lengthAdjust="spacingAndGlyphs" fill="#f2f2f2" stroke="#f2f2f2" stroke-width="0.2">0,4378</text>
<text x="603.79" y="700.2" font-size="16.2" textLength="147.12" lengthAdjust="spacingAndGlyphs" fill="#f4f4f4" font-weight="bold">Target y:CIE31</text>
<text x="774.75" y="700.2" font-size="16.2" textLength="64.91" lengthAdjust="spacingAndGlyphs" fill="#f2f2f2" stroke="#f2f2f2" stroke-width="0.2">0,3714</text>
<text x="874.45" y="700.2" font-size="16.2" textLength="64.91" lengthAdjust="spacingAndGlyphs" fill="#f2f2f2" stroke="#f2f2f2" stroke-width="0.2">0,4103</text>
<text x="974.55" y="700.2" font-size="16.2" textLength="64.91" lengthAdjust="spacingAndGlyphs" fill="#f2f2f2" stroke="#f2f2f2" stroke-width="0.2">0,4517</text>
<text x="1074.25" y="700.2" font-size="16.2" textLength="64.91" lengthAdjust="spacingAndGlyphs" fill="#f2f2f2" stroke="#f2f2f2" stroke-width="0.2">0,4944</text>
<text x="1173.75" y="700.2" font-size="16.2" textLength="64.91" lengthAdjust="spacingAndGlyphs" fill="#f2f2f2" stroke="#f2f2f2" stroke-width="0.2">0,5359</text>
<text x="603.78" y="724.5" font-size="16.2" textLength="85.73" lengthAdjust="spacingAndGlyphs" fill="#f4f4f4" font-weight="bold">Target Y</text>
<text x="774.54" y="724.5" font-size="16.2" textLength="88.52" lengthAdjust="spacingAndGlyphs" fill="#f2f2f2" stroke="#f2f2f2" stroke-width="0.2">238,4994</text>
<text x="874.24" y="724.5" font-size="16.2" textLength="88.52" lengthAdjust="spacingAndGlyphs" fill="#f2f2f2" stroke="#f2f2f2" stroke-width="0.2">234,2292</text>
<text x="974.34" y="724.5" font-size="16.2" textLength="88.52" lengthAdjust="spacingAndGlyphs" fill="#f2f2f2" stroke="#f2f2f2" stroke-width="0.2">230,6164</text>
<text x="1074.04" y="724.5" font-size="16.2" textLength="88.52" lengthAdjust="spacingAndGlyphs" fill="#f2f2f2" stroke="#f2f2f2" stroke-width="0.2">227,6085</text>
<text x="1173.54" y="724.5" font-size="16.2" textLength="88.52" lengthAdjust="spacingAndGlyphs" fill="#f2f2f2" stroke="#f2f2f2" stroke-width="0.2">225,2024</text>
<text x="603.12" y="748.8" font-size="16.2" textLength="85.94" lengthAdjust="spacingAndGlyphs" fill="#f4f4f4" font-weight="bold">ΔE 2000</text>
<text x="774.75" y="748.8" font-size="16.2" textLength="63.34" lengthAdjust="spacingAndGlyphs" fill="#f2f2f2" stroke="#f2f2f2" stroke-width="0.2">0,8511</text>
<text x="874.45" y="748.8" font-size="16.2" textLength="64.91" lengthAdjust="spacingAndGlyphs" fill="#f2f2f2" stroke="#f2f2f2" stroke-width="0.2">0,7777</text>
<text x="974.55" y="748.8" font-size="16.2" textLength="64.91" lengthAdjust="spacingAndGlyphs" fill="#f2f2f2" stroke="#f2f2f2" stroke-width="0.2">0,7801</text>
<text x="1074.25" y="748.8" font-size="16.2" textLength="64.91" lengthAdjust="spacingAndGlyphs" fill="#f2f2f2" stroke="#f2f2f2" stroke-width="0.2">0,7379</text>
<text x="1173.75" y="748.8" font-size="16.2" textLength="64.91" lengthAdjust="spacingAndGlyphs" fill="#f2f2f2" stroke="#f2f2f2" stroke-width="0.2">0,7076</text>
<text x="603.15" y="772.7" font-size="16.2" textLength="68.58" lengthAdjust="spacingAndGlyphs" fill="#f4f4f4" font-weight="bold">ΔE ITP</text>
<text x="774.01" y="772.7" font-size="16.2" textLength="64.91" lengthAdjust="spacingAndGlyphs" fill="#f2f2f2" stroke="#f2f2f2" stroke-width="0.2">1,0246</text>
<text x="873.71" y="772.7" font-size="16.2" textLength="64.91" lengthAdjust="spacingAndGlyphs" fill="#f2f2f2" stroke="#f2f2f2" stroke-width="0.2">1,5574</text>
<text x="974.34" y="772.7" font-size="16.2" textLength="63.34" lengthAdjust="spacingAndGlyphs" fill="#f2f2f2" stroke="#f2f2f2" stroke-width="0.2">2,1154</text>
<text x="1074.04" y="772.7" font-size="16.2" textLength="64.91" lengthAdjust="spacingAndGlyphs" fill="#f2f2f2" stroke="#f2f2f2" stroke-width="0.2">2,4157</text>
<text x="1173.54" y="772.7" font-size="16.2" textLength="64.91" lengthAdjust="spacingAndGlyphs" fill="#f2f2f2" stroke="#f2f2f2" stroke-width="0.2">2,9187</text>
<text x="799.99" y="578.1" font-size="13.3" textLength="38.07" lengthAdjust="spacingAndGlyphs" fill="#f4f4f4" font-weight="bold">20%</text>
<text x="899.88" y="578.1" font-size="13.3" textLength="38.07" lengthAdjust="spacingAndGlyphs" fill="#f4f4f4" font-weight="bold">40%</text>
<text x="999.79" y="578.1" font-size="13.3" textLength="38.07" lengthAdjust="spacingAndGlyphs" fill="#f4f4f4" font-weight="bold">60%</text>
<text x="1099.53" y="578.1" font-size="13.3" textLength="38.07" lengthAdjust="spacingAndGlyphs" fill="#f4f4f4" font-weight="bold">80%</text>
<text x="1193.42" y="578.1" font-size="13.3" textLength="48.64" lengthAdjust="spacingAndGlyphs" fill="#f4f4f4" font-weight="bold">100%</text>
<linearGradient id="btn2" x1="0" y1="0" x2="0" y2="1"><stop offset="0" stop-color="#b2b2b2"/><stop offset="1" stop-color="#6c6c6c"/></linearGradient>
<linearGradient id="barbg2" x1="0" y1="0" x2="0" y2="1"><stop offset="0" stop-color="#444"/><stop offset="1" stop-color="#262626"/></linearGradient>
<linearGradient id="ic" x1="0" y1="0" x2="0" y2="1"><stop offset="0" stop-color="#6e6e6e"/><stop offset="1" stop-color="#a6a6a6"/></linearGradient>
<rect x="0" y="800.5" width="1558" height="63.5" fill="#2a2a2a"/>
<rect x="-4" y="801.2" width="47" height="60.6" rx="4" fill="url(#btn)"/>
<circle cx="20.5" cy="809.8" r="7" fill="url(#ic)"/>
<path d="M16.6 812.3 L24.4 812.3 L20.5 807.6 Z" fill="#1a1a1a"/>
<rect x="3" y="827.5" width="35" height="29.8" rx="3.5" fill="#ffff00" stroke="#8c8c00" stroke-width="1"/>
<rect x="49.1" y="801.2" width="150" height="60.6" rx="4" fill="url(#btn)"/>
<rect x="55.1" y="806.6" width="139" height="35.5" rx="3" fill="#c2c3a1" stroke="#8a8a70" stroke-width=".8"/>
<text x="112.61" y="857" font-size="11.6" textLength="23.22" lengthAdjust="spacingAndGlyphs" fill="#262626" stroke="#262626" stroke-width="0.2">20%</text>
<rect x="201.2" y="801.2" width="150" height="60.6" rx="4" fill="url(#btn)"/>
<rect x="207.2" y="806.6" width="139" height="35.5" rx="3" fill="#c2c286" stroke="#8a8a70" stroke-width=".8"/>
<text x="264.89" y="857" font-size="11.6" textLength="23.22" lengthAdjust="spacingAndGlyphs" fill="#262626" stroke="#262626" stroke-width="0.2">40%</text>
<rect x="353.3" y="801.2" width="150" height="60.6" rx="4" fill="url(#btn)"/>
<rect x="359.3" y="806.6" width="139" height="35.5" rx="3" fill="#c2c266" stroke="#8a8a70" stroke-width=".8"/>
<text x="416.81" y="857" font-size="11.6" textLength="23.22" lengthAdjust="spacingAndGlyphs" fill="#262626" stroke="#262626" stroke-width="0.2">60%</text>
<rect x="505.4" y="801.2" width="150" height="60.6" rx="4" fill="url(#btn)"/>
<rect x="511.4" y="806.6" width="139" height="35.5" rx="3" fill="#c4c24e" stroke="#8a8a70" stroke-width=".8"/>
<text x="568.94" y="857" font-size="11.6" textLength="23.22" lengthAdjust="spacingAndGlyphs" fill="#262626" stroke="#262626" stroke-width="0.2">80%</text>
<rect x="656.3" y="801.2" width="150.8" height="60.6" rx="4" fill="url(#btnsel)"/>
<rect x="662" y="806" width="139.8" height="36" rx="3" fill="#c4c000"/>
<text x="716.65" y="857" font-size="11.6" textLength="29.67" lengthAdjust="spacingAndGlyphs" fill="#ffffff" font-weight="bold">100%</text>
<rect x="807.5" y="800.7" width="432.5" height="61.3" fill="url(#barbg2)"/>
<rect x="96" y="862.8" width="512" height="1.2" fill="#bdbdbd"/>
<rect x="843.4" y="862.8" width="396.6" height="1.2" fill="#bdbdbd"/>
<rect x="1239.9" y="800.9" width="48.3" height="60.8" rx="4" fill="url(#btn2)"/>
<rect x="1239.9" y="819" width="48.3" height="1.2" fill="#3a3a3a"/>
<circle cx="1264.5" cy="810.2" r="7.2" fill="url(#ic)"/>
<path d="M1260.5 812.6 L1268.5 812.6 L1264.5 807.8 Z" fill="#1e1e1e"/>
<rect x="1248.9" y="826.1" width="30" height="29.4" rx="4" fill="#a8a8a8" stroke="#1e1e1e" stroke-width="1.8"/>
<rect x="1249.8" y="827" width="28.2" height="13.8" fill="#bdbdbd"/>
<rect x="1257.1" y="834.1" width="13.8" height="13.3" fill="#000"/>
<rect x="1288.9" y="800.9" width="45.8" height="29.5" fill="url(#btn2)"/>
<circle cx="1311.75" cy="816" r="9.9" fill="url(#ic)"/>
<rect x="1335.6" y="800.9" width="44.3" height="29.5" fill="url(#btn2)"/>
<circle cx="1357.7" cy="816" r="9.9" fill="url(#ic)"/>
<rect x="1380.8" y="800.9" width="44.1" height="29.5" fill="url(#btn2)"/>
<circle cx="1402.8" cy="816" r="9.9" fill="url(#ic)"/>
<rect x="1425.8" y="800.9" width="44.1" height="29.5" fill="url(#btn2)"/>
<circle cx="1447.8" cy="816" r="9.9" fill="url(#ic)"/>
<rect x="1470.8" y="800.9" width="44.3" height="29.5" fill="url(#btn2)"/>
<circle cx="1492.9" cy="816" r="9.9" fill="url(#ic)"/>
<rect x="1516" y="800.9" width="45.1" height="29.5" fill="url(#btn2)"/>
<circle cx="1538.8" cy="816" r="9.9" fill="url(#ic)"/>
<rect x="1288.9" y="832" width="136" height="29.7" fill="url(#btn2)"/>
<rect x="1426" y="832" width="140" height="29.7" fill="url(#btn2)"/>
<circle cx="1319.7" cy="846.8" r="9.6" fill="url(#ic)"/>
<circle cx="1533.1" cy="846.9" r="9.6" fill="url(#ic)"/>
<rect x="1308" y="812" width="8" height="8" fill="#2e2e2e"/>
<path d="M1355.2 812.4 L1363.4 816.8 L1355.2 821.2 Z" fill="#262626"/>
<path d="M1399 811.5 h-2.2 v9.5 h2.2 M1406.8 811.5 h2.2 v9.5 h-2.2" fill="none" stroke="#262626" stroke-width="1.6"/>
<rect x="1401.3" y="815.6" width="1.4" height="1.4" fill="#262626"/><rect x="1403.9" y="815.6" width="1.4" height="1.4" fill="#262626"/>
<path d="M1448 816 C1446 813.2 1442 813.2 1442 816 C1442 818.8 1446 818.8 1448 816 C1450 813.2 1454 813.2 1454 816 C1454 818.8 1450 818.8 1448 816 Z" fill="none" stroke="#262626" stroke-width="1.6"/>
<path d="M1497.2 813.8 A5 5 0 0 0 1488.6 814.6 M1488.8 818.2 A5 5 0 0 0 1497.4 817.4" fill="none" stroke="#262626" stroke-width="1.8"/>
<path d="M1498.6 811.2 L1498.4 815.6 L1494.2 814.6 Z M1487.4 820.8 L1487.6 816.4 L1491.8 817.4 Z" fill="#262626"/>
<path d="M1321.6 842.6 L1317.8 846.8 L1321.6 851 M1324.6 842.6 L1320.8 846.8 L1324.6 851" fill="none" stroke="#262626" stroke-width="1.3"/>
<path d="M1530.8 842.6 L1534.6 846.8 L1530.8 851 M1533.8 842.6 L1537.6 846.8 L1533.8 851" fill="none" stroke="#262626" stroke-width="1.3"/>
<text x="1345.54" y="855" font-size="22.4" textLength="51.82" lengthAdjust="spacingAndGlyphs" fill="#2a2a2a" stroke="#2a2a2a" stroke-width="0.3">Back</text>
<text x="1451.61" y="854.9" font-size="22.4" textLength="53.65" lengthAdjust="spacingAndGlyphs" fill="#2a2a2a" stroke="#2a2a2a" stroke-width="0.3">Next</text>
<defs><linearGradient id="o0"><stop offset="0" stop-color="#009901"/><stop offset="0.842" stop-color="#009900"/><stop offset="1" stop-color="#099900"/></linearGradient><linearGradient id="o1"><stop offset="0" stop-color="#009904"/><stop offset="0.631" stop-color="#009900"/><stop offset="0.809" stop-color="#129900"/><stop offset="1" stop-color="#339900"/></linearGradient><linearGradient id="o2"><stop offset="0" stop-color="#009906"/><stop offset="0.558" stop-color="#049901"/><stop offset="0.779" stop-color="#2d9900"/><stop offset="1" stop-color="#719900"/></linearGradient><linearGradient id="o3"><stop offset="0" stop-color="#009909"/><stop offset="0.489" stop-color="#059904"/><stop offset="0.708" stop-color="#3c9901"/><stop offset="0.817" stop-color="#679900"/><stop offset="0.918" stop-color="#989900"/><stop offset="1" stop-color="#997400"/></linearGradient><linearGradient id="o4"><stop offset="0" stop-color="#00990c"/><stop offset="0.391" stop-color="#009907"/><stop offset="0.438" stop-color="#079906"/><stop offset="0.621" stop-color="#3f9903"/><stop offset="0.707" stop-color="#679902"/><stop offset="0.793" stop-color="#999901"/><stop offset="0.883" stop-color="#996b00"/><stop offset="1" stop-color="#994700"/></linearGradient><linearGradient id="o5"><stop offset="0" stop-color="#00990f"/><stop offset="0.349" stop-color="#00990a"/><stop offset="0.387" stop-color="#06990a"/><stop offset="0.545" stop-color="#3d9907"/><stop offset="0.623" stop-color="#679905"/><stop offset="0.695" stop-color="#989904"/><stop offset="0.757" stop-color="#997402"/><stop offset="0.822" stop-color="#995801"/><stop offset="1" stop-color="#992d00"/></linearGradient><linearGradient id="o6"><stop offset="0" stop-color="#009912"/><stop offset="0.323" stop-color="#00990e"/><stop offset="0.357" stop-color="#06990d"/><stop offset="0.502" stop-color="#3d990a"/><stop offset="0.574" stop-color="#679909"/><stop offset="0.639" stop-color="#989907"/><stop offset="0.705" stop-color="#996e04"/><stop offset="0.784" stop-color="#994d02"/><stop offset="0.881" stop-color="#993300"/><stop offset="1" stop-color="#992000"/></linearGradient><linearGradient id="o7"><stop offset="0" stop-color="#009914"/><stop offset="0.301" stop-color="#009911"/><stop offset="0.333" stop-color="#069910"/><stop offset="0.467" stop-color="#3e990e"/><stop offset="0.53" stop-color="#67990c"/><stop offset="0.591" stop-color="#99990b"/><stop offset="0.658" stop-color="#996a06"/><stop offset="0.745" stop-color="#994503"/><stop offset="0.855" stop-color="#992a01"/><stop offset="1" stop-color="#991600"/></linearGradient><linearGradient id="o8"><stop offset="0" stop-color="#009917"/><stop offset="0.282" stop-color="#009914"/><stop offset="0.309" stop-color="#069913"/><stop offset="0.43" stop-color="#3c9911"/><stop offset="0.489" stop-color="#659910"/><stop offset="0.546" stop-color="#97990f"/><stop offset="0.621" stop-color="#996308"/><stop offset="0.712" stop-color="#993d04"/><stop offset="0.836" stop-color="#992201"/><stop offset="1" stop-color="#990f00"/></linearGradient><linearGradient id="o9"><stop offset="0" stop-color="#00991a"/><stop offset="0.289" stop-color="#059917"/><stop offset="0.402" stop-color="#3c9915"/><stop offset="0.513" stop-color="#999713"/><stop offset="0.585" stop-color="#995f0b"/><stop offset="0.683" stop-color="#993705"/><stop offset="0.817" stop-color="#991c02"/><stop offset="1" stop-color="#990a00"/></linearGradient><linearGradient id="o10"><stop offset="0" stop-color="#00991c"/><stop offset="0.255" stop-color="#00991a"/><stop offset="0.28" stop-color="#05991a"/><stop offset="0.386" stop-color="#3c9918"/><stop offset="0.492" stop-color="#999716"/><stop offset="0.566" stop-color="#995c0c"/><stop offset="0.667" stop-color="#993306"/><stop offset="0.807" stop-color="#991802"/><stop offset="1" stop-color="#990700"/></linearGradient><linearGradient id="o11"><stop offset="0" stop-color="#00991e"/><stop offset="0.268" stop-color="#05991c"/><stop offset="0.319" stop-color="#1b991c"/><stop offset="0.372" stop-color="#3d991b"/><stop offset="0.423" stop-color="#68991a"/><stop offset="0.469" stop-color="#99991a"/><stop offset="0.503" stop-color="#997713"/><stop offset="0.543" stop-color="#995b0e"/><stop offset="0.647" stop-color="#993107"/><stop offset="0.792" stop-color="#991502"/><stop offset="1" stop-color="#990500"/></linearGradient><linearGradient id="o12"><stop offset="0" stop-color="#009920"/><stop offset="0.258" stop-color="#05991f"/><stop offset="0.307" stop-color="#1b991e"/><stop offset="0.358" stop-color="#3d991e"/><stop offset="0.404" stop-color="#66991d"/><stop offset="0.451" stop-color="#99981d"/><stop offset="0.487" stop-color="#997416"/><stop offset="0.527" stop-color="#995810"/><stop offset="0.631" stop-color="#992e08"/><stop offset="0.782" stop-color="#991203"/><stop offset="1" stop-color="#990300"/></linearGradient><linearGradient id="o13"><stop offset="0" stop-color="#009922"/><stop offset="0.25" stop-color="#059921"/><stop offset="0.297" stop-color="#1c9921"/><stop offset="0.344" stop-color="#3d9921"/><stop offset="0.434" stop-color="#999820"/><stop offset="0.468" stop-color="#997318"/><stop offset="0.509" stop-color="#995612"/><stop offset="0.615" stop-color="#992b08"/><stop offset="0.771" stop-color="#991003"/><stop offset="1" stop-color="#990100"/></linearGradient><linearGradient id="o14"><stop offset="0" stop-color="#009924"/><stop offset="0.241" stop-color="#059924"/><stop offset="0.33" stop-color="#3b9924"/><stop offset="0.373" stop-color="#649924"/><stop offset="0.419" stop-color="#999723"/><stop offset="0.452" stop-color="#99731b"/><stop offset="0.493" stop-color="#995414"/><stop offset="0.602" stop-color="#992809"/><stop offset="0.763" stop-color="#990e03"/><stop offset="1" stop-color="#990000"/></linearGradient><linearGradient id="o15"><stop offset="0" stop-color="#009927"/><stop offset="0.233" stop-color="#059927"/><stop offset="0.318" stop-color="#3b9927"/><stop offset="0.404" stop-color="#999727"/><stop offset="0.437" stop-color="#99701d"/><stop offset="0.479" stop-color="#995115"/><stop offset="0.588" stop-color="#99260a"/><stop offset="0.757" stop-color="#990b03"/><stop offset="1" stop-color="#990000"/></linearGradient><linearGradient id="o16"><stop offset="0" stop-color="#009929"/><stop offset="0.224" stop-color="#04992a"/><stop offset="0.266" stop-color="#1b992a"/><stop offset="0.308" stop-color="#3c992b"/><stop offset="0.349" stop-color="#66992b"/><stop offset="0.387" stop-color="#99992b"/><stop offset="0.422" stop-color="#997020"/><stop offset="0.462" stop-color="#995017"/><stop offset="0.513" stop-color="#993710"/><stop offset="0.574" stop-color="#99240b"/><stop offset="0.751" stop-color="#990903"/><stop offset="1" stop-color="#990000"/></linearGradient><linearGradient id="o17"><stop offset="0" stop-color="#00992b"/><stop offset="0.218" stop-color="#05992d"/><stop offset="0.257" stop-color="#1b992d"/><stop offset="0.298" stop-color="#3c992e"/><stop offset="0.337" stop-color="#66992f"/><stop offset="0.374" stop-color="#99992f"/><stop offset="0.408" stop-color="#996f23"/><stop offset="0.449" stop-color="#994f19"/><stop offset="0.499" stop-color="#993511"/><stop offset="0.562" stop-color="#99210b"/><stop offset="0.745" stop-color="#990803"/><stop offset="1" stop-color="#990000"/></linearGradient><linearGradient id="o18"><stop offset="0" stop-color="#00992d"/><stop offset="0.211" stop-color="#049930"/><stop offset="0.249" stop-color="#1a9931"/><stop offset="0.289" stop-color="#3c9931"/><stop offset="0.325" stop-color="#649932"/><stop offset="0.363" stop-color="#999833"/><stop offset="0.395" stop-color="#996f26"/><stop offset="0.437" stop-color="#994d1b"/><stop offset="0.487" stop-color="#993313"/><stop offset="0.552" stop-color="#991f0c"/><stop offset="0.74" stop-color="#990604"/><stop offset="1" stop-color="#990000"/></linearGradient><linearGradient id="o19"><stop offset="0" stop-color="#009930"/><stop offset="0.205" stop-color="#049933"/><stop offset="0.241" stop-color="#1a9934"/><stop offset="0.28" stop-color="#3c9935"/><stop offset="0.351" stop-color="#999737"/><stop offset="0.385" stop-color="#996c28"/><stop offset="0.425" stop-color="#994b1d"/><stop offset="0.476" stop-color="#993114"/><stop offset="0.54" stop-color="#991e0d"/><stop offset="0.731" stop-color="#990504"/><stop offset="1" stop-color="#990000"/></linearGradient><linearGradient id="o20"><stop offset="0" stop-color="#009932"/><stop offset="0.199" stop-color="#059937"/><stop offset="0.235" stop-color="#1b9938"/><stop offset="0.27" stop-color="#3c9939"/><stop offset="0.34" stop-color="#99973b"/><stop offset="0.374" stop-color="#996a2b"/><stop offset="0.415" stop-color="#99481e"/><stop offset="0.466" stop-color="#992f15"/><stop offset="0.531" stop-color="#991c0e"/><stop offset="0.724" stop-color="#990404"/><stop offset="1" stop-color="#990000"/></linearGradient><linearGradient id="o21"><stop offset="0" stop-color="#009935"/><stop offset="0.195" stop-color="#04993a"/><stop offset="0.23" stop-color="#1b993b"/><stop offset="0.265" stop-color="#3b993d"/><stop offset="0.301" stop-color="#67993e"/><stop offset="0.332" stop-color="#999940"/><stop offset="0.366" stop-color="#996b2f"/><stop offset="0.406" stop-color="#994921"/><stop offset="0.456" stop-color="#992f17"/><stop offset="0.521" stop-color="#991b0f"/><stop offset="0.716" stop-color="#990304"/><stop offset="1" stop-color="#990000"/></linearGradient><linearGradient id="o22"><stop offset="0" stop-color="#009937"/><stop offset="0.194" stop-color="#04993d"/><stop offset="0.229" stop-color="#1a993f"/><stop offset="0.264" stop-color="#3b9941"/><stop offset="0.298" stop-color="#659943"/><stop offset="0.331" stop-color="#999945"/><stop offset="0.365" stop-color="#996a32"/><stop offset="0.405" stop-color="#994824"/><stop offset="0.455" stop-color="#992f19"/><stop offset="0.52" stop-color="#991b10"/><stop offset="0.714" stop-color="#990305"/><stop offset="1" stop-color="#990000"/></linearGradient><linearGradient id="o23"><stop offset="0" stop-color="#00993a"/><stop offset="0.196" stop-color="#049941"/><stop offset="0.229" stop-color="#1a9943"/><stop offset="0.264" stop-color="#3b9945"/><stop offset="0.298" stop-color="#659947"/><stop offset="0.331" stop-color="#999849"/><stop offset="0.365" stop-color="#996a35"/><stop offset="0.405" stop-color="#994826"/><stop offset="0.455" stop-color="#992e1b"/><stop offset="0.52" stop-color="#991a12"/><stop offset="0.714" stop-color="#990306"/><stop offset="1" stop-color="#990001"/></linearGradient><linearGradient id="o24"><stop offset="0" stop-color="#00993c"/><stop offset="0.196" stop-color="#049945"/><stop offset="0.229" stop-color="#1a9947"/><stop offset="0.264" stop-color="#3b9949"/><stop offset="0.296" stop-color="#62994b"/><stop offset="0.331" stop-color="#99984e"/><stop offset="0.365" stop-color="#996939"/><stop offset="0.405" stop-color="#994729"/><stop offset="0.455" stop-color="#992e1c"/><stop offset="0.52" stop-color="#991a13"/><stop offset="0.714" stop-color="#990306"/><stop offset="1" stop-color="#990001"/></linearGradient><linearGradient id="o25"><stop offset="0" stop-color="#00993f"/><stop offset="0.194" stop-color="#049948"/><stop offset="0.228" stop-color="#19994b"/><stop offset="0.263" stop-color="#3b994d"/><stop offset="0.33" stop-color="#999753"/><stop offset="0.362" stop-color="#996a3d"/><stop offset="0.402" stop-color="#99482c"/><stop offset="0.452" stop-color="#992e1f"/><stop offset="0.518" stop-color="#991a14"/><stop offset="0.712" stop-color="#990307"/><stop offset="1" stop-color="#990001"/></linearGradient><linearGradient id="o26"><stop offset="0" stop-color="#009942"/><stop offset="0.196" stop-color="#04994c"/><stop offset="0.229" stop-color="#1a994f"/><stop offset="0.263" stop-color="#3a9952"/><stop offset="0.33" stop-color="#999658"/><stop offset="0.362" stop-color="#996a41"/><stop offset="0.402" stop-color="#99472e"/><stop offset="0.452" stop-color="#992d21"/><stop offset="0.518" stop-color="#991a16"/><stop offset="0.71" stop-color="#990308"/><stop offset="1" stop-color="#990001"/></linearGradient><linearGradient id="o27"><stop offset="0" stop-color="#009945"/><stop offset="0.195" stop-color="#049950"/><stop offset="0.228" stop-color="#1a9953"/><stop offset="0.263" stop-color="#3c9957"/><stop offset="0.295" stop-color="#65995a"/><stop offset="0.327" stop-color="#99995e"/><stop offset="0.359" stop-color="#996b45"/><stop offset="0.399" stop-color="#994832"/><stop offset="0.45" stop-color="#992d23"/><stop offset="0.515" stop-color="#991a18"/><stop offset="0.708" stop-color="#990209"/><stop offset="1" stop-color="#990002"/></linearGradient><linearGradient id="o28"><stop offset="0" stop-color="#009948"/><stop offset="0.195" stop-color="#049954"/><stop offset="0.228" stop-color="#199957"/><stop offset="0.262" stop-color="#3a995b"/><stop offset="0.295" stop-color="#65995f"/><stop offset="0.327" stop-color="#999863"/><stop offset="0.359" stop-color="#996a49"/><stop offset="0.399" stop-color="#994735"/><stop offset="0.45" stop-color="#992d25"/><stop offset="0.515" stop-color="#991919"/><stop offset="0.708" stop-color="#990209"/><stop offset="1" stop-color="#990002"/></linearGradient><linearGradient id="o29"><stop offset="0" stop-color="#00994b"/><stop offset="0.195" stop-color="#049959"/><stop offset="0.229" stop-color="#1a995c"/><stop offset="0.262" stop-color="#3c9960"/><stop offset="0.292" stop-color="#639964"/><stop offset="0.326" stop-color="#999869"/><stop offset="0.358" stop-color="#996a4d"/><stop offset="0.398" stop-color="#994738"/><stop offset="0.449" stop-color="#992c27"/><stop offset="0.513" stop-color="#99191b"/><stop offset="0.706" stop-color="#99020a"/><stop offset="1" stop-color="#990002"/></linearGradient><linearGradient id="o30"><stop offset="0" stop-color="#00994e"/><stop offset="0.195" stop-color="#04995d"/><stop offset="0.227" stop-color="#199961"/><stop offset="0.261" stop-color="#3a9965"/><stop offset="0.292" stop-color="#63996a"/><stop offset="0.326" stop-color="#99976e"/><stop offset="0.358" stop-color="#996951"/><stop offset="0.398" stop-color="#99463a"/><stop offset="0.449" stop-color="#992c29"/><stop offset="0.513" stop-color="#99191c"/><stop offset="0.704" stop-color="#99020b"/><stop offset="1" stop-color="#990003"/></linearGradient><linearGradient id="o31"><stop offset="0" stop-color="#009950"/><stop offset="0.194" stop-color="#039960"/><stop offset="0.226" stop-color="#189964"/><stop offset="0.259" stop-color="#399969"/><stop offset="0.29" stop-color="#60996e"/><stop offset="0.325" stop-color="#999772"/><stop offset="0.357" stop-color="#996954"/><stop offset="0.397" stop-color="#99453d"/><stop offset="0.448" stop-color="#992b2b"/><stop offset="0.512" stop-color="#99181e"/><stop offset="0.704" stop-color="#99020c"/><stop offset="1" stop-color="#990003"/></linearGradient><linearGradient id="o32"><stop offset="0" stop-color="#009952"/><stop offset="0.194" stop-color="#039962"/><stop offset="0.226" stop-color="#189966"/><stop offset="0.259" stop-color="#39996b"/><stop offset="0.325" stop-color="#999675"/><stop offset="0.357" stop-color="#996856"/><stop offset="0.397" stop-color="#99453e"/><stop offset="0.448" stop-color="#992b2c"/><stop offset="0.512" stop-color="#99181e"/><stop offset="0.704" stop-color="#99020c"/><stop offset="1" stop-color="#990003"/></linearGradient><linearGradient id="o33"><stop offset="0" stop-color="#009953"/><stop offset="0.195" stop-color="#049965"/><stop offset="0.227" stop-color="#199969"/><stop offset="0.261" stop-color="#3b996e"/><stop offset="0.293" stop-color="#669974"/><stop offset="0.323" stop-color="#99997a"/><stop offset="0.355" stop-color="#996a5a"/><stop offset="0.396" stop-color="#994641"/><stop offset="0.446" stop-color="#992c2e"/><stop offset="0.51" stop-color="#99181f"/><stop offset="0.702" stop-color="#99020d"/><stop offset="1" stop-color="#990003"/></linearGradient><linearGradient id="o34"><stop offset="0" stop-color="#009955"/><stop offset="0.194" stop-color="#049967"/><stop offset="0.226" stop-color="#19996c"/><stop offset="0.26" stop-color="#3b9971"/><stop offset="0.292" stop-color="#669977"/><stop offset="0.322" stop-color="#99997d"/><stop offset="0.354" stop-color="#996a5c"/><stop offset="0.393" stop-color="#994743"/><stop offset="0.444" stop-color="#992c2f"/><stop offset="0.508" stop-color="#991921"/><stop offset="0.7" stop-color="#99020d"/><stop offset="1" stop-color="#990004"/></linearGradient><linearGradient id="o35"><stop offset="0" stop-color="#009956"/><stop offset="0.194" stop-color="#049969"/><stop offset="0.226" stop-color="#19996e"/><stop offset="0.26" stop-color="#3b9974"/><stop offset="0.292" stop-color="#66997a"/><stop offset="0.322" stop-color="#999980"/><stop offset="0.354" stop-color="#99695e"/><stop offset="0.393" stop-color="#994745"/><stop offset="0.444" stop-color="#992c30"/><stop offset="0.508" stop-color="#991821"/><stop offset="0.7" stop-color="#99020d"/><stop offset="1" stop-color="#990004"/></linearGradient><linearGradient id="o36"><stop offset="0" stop-color="#009958"/><stop offset="0.194" stop-color="#03996c"/><stop offset="0.226" stop-color="#199971"/><stop offset="0.26" stop-color="#3b9976"/><stop offset="0.29" stop-color="#63997c"/><stop offset="0.322" stop-color="#999883"/><stop offset="0.354" stop-color="#996960"/><stop offset="0.393" stop-color="#994646"/><stop offset="0.444" stop-color="#992b32"/><stop offset="0.508" stop-color="#991822"/><stop offset="0.698" stop-color="#99020e"/><stop offset="1" stop-color="#990004"/></linearGradient><linearGradient id="o37"><stop offset="0" stop-color="#00995a"/><stop offset="0.193" stop-color="#03996e"/><stop offset="0.225" stop-color="#199973"/><stop offset="0.258" stop-color="#3b9979"/><stop offset="0.289" stop-color="#63997f"/><stop offset="0.321" stop-color="#999886"/><stop offset="0.353" stop-color="#996962"/><stop offset="0.392" stop-color="#994648"/><stop offset="0.443" stop-color="#992b33"/><stop offset="0.507" stop-color="#991823"/><stop offset="0.698" stop-color="#99020e"/><stop offset="1" stop-color="#990004"/></linearGradient><linearGradient id="o38"><stop offset="0" stop-color="#00995b"/><stop offset="0.194" stop-color="#049971"/><stop offset="0.226" stop-color="#1a9976"/><stop offset="0.258" stop-color="#3b997c"/><stop offset="0.289" stop-color="#639982"/><stop offset="0.321" stop-color="#999889"/><stop offset="0.353" stop-color="#996865"/><stop offset="0.392" stop-color="#994649"/><stop offset="0.443" stop-color="#992b34"/><stop offset="0.507" stop-color="#991824"/><stop offset="0.698" stop-color="#99020f"/><stop offset="1" stop-color="#990004"/></linearGradient><linearGradient id="o39"><stop offset="0" stop-color="#00995d"/><stop offset="0.194" stop-color="#049973"/><stop offset="0.226" stop-color="#1a9979"/><stop offset="0.258" stop-color="#3a997f"/><stop offset="0.289" stop-color="#639985"/><stop offset="0.321" stop-color="#99978c"/><stop offset="0.353" stop-color="#996867"/><stop offset="0.392" stop-color="#99454b"/><stop offset="0.443" stop-color="#992b35"/><stop offset="0.507" stop-color="#991725"/><stop offset="0.698" stop-color="#99020f"/><stop offset="1" stop-color="#990005"/></linearGradient><linearGradient id="o40"><stop offset="0" stop-color="#00995f"/><stop offset="0.193" stop-color="#039976"/><stop offset="0.225" stop-color="#19997b"/><stop offset="0.257" stop-color="#3a9982"/><stop offset="0.288" stop-color="#639989"/><stop offset="0.32" stop-color="#99978f"/><stop offset="0.352" stop-color="#996869"/><stop offset="0.391" stop-color="#99454d"/><stop offset="0.442" stop-color="#992a36"/><stop offset="0.506" stop-color="#991726"/><stop offset="0.695" stop-color="#990210"/><stop offset="1" stop-color="#990005"/></linearGradient><linearGradient id="o41"><stop offset="0" stop-color="#009961"/><stop offset="0.193" stop-color="#039978"/><stop offset="0.225" stop-color="#19997e"/><stop offset="0.258" stop-color="#3a9985"/><stop offset="0.32" stop-color="#999792"/><stop offset="0.353" stop-color="#99676b"/><stop offset="0.392" stop-color="#99454e"/><stop offset="0.441" stop-color="#992b38"/><stop offset="0.505" stop-color="#991727"/><stop offset="0.695" stop-color="#990210"/><stop offset="1" stop-color="#990005"/></linearGradient><linearGradient id="o42"><stop offset="0" stop-color="#009962"/><stop offset="0.194" stop-color="#03997b"/><stop offset="0.224" stop-color="#189980"/><stop offset="0.256" stop-color="#389987"/><stop offset="0.287" stop-color="#61998f"/><stop offset="0.321" stop-color="#999696"/><stop offset="0.353" stop-color="#99676e"/><stop offset="0.392" stop-color="#994450"/><stop offset="0.441" stop-color="#992b39"/><stop offset="0.506" stop-color="#991728"/><stop offset="0.696" stop-color="#990211"/><stop offset="1" stop-color="#990005"/></linearGradient><linearGradient id="o43"><stop offset="0" stop-color="#009964"/><stop offset="0.194" stop-color="#03997d"/><stop offset="0.224" stop-color="#179983"/><stop offset="0.257" stop-color="#38998a"/><stop offset="0.286" stop-color="#5e9991"/><stop offset="0.321" stop-color="#999699"/><stop offset="0.354" stop-color="#996770"/><stop offset="0.393" stop-color="#994452"/><stop offset="0.442" stop-color="#992a3b"/><stop offset="0.507" stop-color="#991729"/><stop offset="0.696" stop-color="#990211"/><stop offset="1" stop-color="#990005"/></linearGradient><linearGradient id="o44"><stop offset="0" stop-color="#009966"/><stop offset="0.193" stop-color="#039980"/><stop offset="0.253" stop-color="#34998c"/><stop offset="0.3" stop-color="#779999"/><stop offset="0.324" stop-color="#999097"/><stop offset="0.357" stop-color="#99626f"/><stop offset="0.396" stop-color="#994152"/><stop offset="0.445" stop-color="#99293b"/><stop offset="0.51" stop-color="#991629"/><stop offset="0.698" stop-color="#990112"/><stop offset="1" stop-color="#990006"/></linearGradient><linearGradient id="o45"><stop offset="0" stop-color="#009968"/><stop offset="0.195" stop-color="#039983"/><stop offset="0.253" stop-color="#34998f"/><stop offset="0.289" stop-color="#649999"/><stop offset="0.326" stop-color="#998c97"/><stop offset="0.359" stop-color="#996070"/><stop offset="0.398" stop-color="#994052"/><stop offset="0.448" stop-color="#99283b"/><stop offset="0.513" stop-color="#991629"/><stop offset="0.699" stop-color="#990112"/><stop offset="1" stop-color="#990006"/></linearGradient><linearGradient id="o46"><stop offset="0" stop-color="#009969"/><stop offset="0.195" stop-color="#039985"/><stop offset="0.252" stop-color="#329992"/><stop offset="0.279" stop-color="#549999"/><stop offset="0.329" stop-color="#998998"/><stop offset="0.361" stop-color="#995e70"/><stop offset="0.401" stop-color="#993f53"/><stop offset="0.45" stop-color="#99273c"/><stop offset="0.515" stop-color="#99152a"/><stop offset="0.7" stop-color="#990113"/><stop offset="1" stop-color="#990006"/></linearGradient><linearGradient id="o47"><stop offset="0" stop-color="#00996b"/><stop offset="0.194" stop-color="#039988"/><stop offset="0.249" stop-color="#309995"/><stop offset="0.33" stop-color="#998698"/><stop offset="0.363" stop-color="#995c71"/><stop offset="0.402" stop-color="#993d54"/><stop offset="0.454" stop-color="#99253c"/><stop offset="0.517" stop-color="#99142a"/><stop offset="0.701" stop-color="#990113"/><stop offset="1" stop-color="#990006"/></linearGradient><linearGradient id="o48"><stop offset="0" stop-color="#00996d"/><stop offset="0.194" stop-color="#03998b"/><stop offset="0.248" stop-color="#2e9997"/><stop offset="0.332" stop-color="#998399"/><stop offset="0.365" stop-color="#995a72"/><stop offset="0.404" stop-color="#993c54"/><stop offset="0.456" stop-color="#99253d"/><stop offset="0.52" stop-color="#99142b"/><stop offset="0.702" stop-color="#990113"/><stop offset="1" stop-color="#990007"/></linearGradient><linearGradient id="o49"><stop offset="0" stop-color="#00996f"/><stop offset="0.195" stop-color="#03998d"/><stop offset="0.26" stop-color="#399499"/><stop offset="0.334" stop-color="#998099"/><stop offset="0.367" stop-color="#995872"/><stop offset="0.407" stop-color="#993b55"/><stop offset="0.459" stop-color="#99243d"/><stop offset="0.522" stop-color="#99132b"/><stop offset="0.703" stop-color="#990114"/><stop offset="1" stop-color="#990007"/></linearGradient><linearGradient id="o50"><stop offset="0" stop-color="#009971"/><stop offset="0.194" stop-color="#039990"/><stop offset="0.26" stop-color="#389199"/><stop offset="0.337" stop-color="#997a97"/><stop offset="0.37" stop-color="#995571"/><stop offset="0.41" stop-color="#993855"/><stop offset="0.462" stop-color="#99223d"/><stop offset="0.526" stop-color="#99122c"/><stop offset="0.706" stop-color="#990114"/><stop offset="1" stop-color="#990007"/></linearGradient><linearGradient id="o51"><stop offset="0" stop-color="#009974"/><stop offset="0.194" stop-color="#029994"/><stop offset="0.262" stop-color="#388c99"/><stop offset="0.34" stop-color="#997799"/><stop offset="0.373" stop-color="#995273"/><stop offset="0.414" stop-color="#993655"/><stop offset="0.529" stop-color="#99122c"/><stop offset="0.705" stop-color="#990115"/><stop offset="1" stop-color="#990008"/></linearGradient><linearGradient id="o52"><stop offset="0" stop-color="#009978"/><stop offset="0.195" stop-color="#039799"/><stop offset="0.263" stop-color="#378699"/><stop offset="0.345" stop-color="#996f97"/><stop offset="0.378" stop-color="#994d73"/><stop offset="0.418" stop-color="#993456"/><stop offset="0.533" stop-color="#99112e"/><stop offset="0.707" stop-color="#990116"/><stop offset="1" stop-color="#990008"/></linearGradient><linearGradient id="o53"><stop offset="0" stop-color="#00997c"/><stop offset="0.164" stop-color="#009999"/><stop offset="0.196" stop-color="#029299"/><stop offset="0.267" stop-color="#388099"/><stop offset="0.35" stop-color="#996a98"/><stop offset="0.383" stop-color="#994a74"/><stop offset="0.425" stop-color="#993056"/><stop offset="0.538" stop-color="#99102e"/><stop offset="0.715" stop-color="#990017"/><stop offset="1" stop-color="#990009"/></linearGradient><linearGradient id="o54"><stop offset="0" stop-color="#009980"/><stop offset="0.141" stop-color="#009999"/><stop offset="0.197" stop-color="#038c99"/><stop offset="0.271" stop-color="#397a99"/><stop offset="0.353" stop-color="#996599"/><stop offset="0.387" stop-color="#994775"/><stop offset="0.427" stop-color="#992f59"/><stop offset="0.541" stop-color="#990f30"/><stop offset="0.719" stop-color="#990017"/><stop offset="1" stop-color="#990009"/></linearGradient><linearGradient id="o55"><stop offset="0" stop-color="#009984"/><stop offset="0.117" stop-color="#009999"/><stop offset="0.198" stop-color="#038799"/><stop offset="0.272" stop-color="#397599"/><stop offset="0.359" stop-color="#995f98"/><stop offset="0.392" stop-color="#994275"/><stop offset="0.435" stop-color="#992b58"/><stop offset="0.548" stop-color="#990e30"/><stop offset="0.723" stop-color="#990018"/><stop offset="1" stop-color="#99000a"/></linearGradient><linearGradient id="o56"><stop offset="0" stop-color="#009989"/><stop offset="0.091" stop-color="#009999"/><stop offset="0.199" stop-color="#038299"/><stop offset="0.275" stop-color="#3a7099"/><stop offset="0.362" stop-color="#995a99"/><stop offset="0.396" stop-color="#993f76"/><stop offset="0.439" stop-color="#992959"/><stop offset="0.552" stop-color="#990d31"/><stop offset="0.726" stop-color="#990019"/><stop offset="1" stop-color="#99000b"/></linearGradient><linearGradient id="o57"><stop offset="0" stop-color="#00998d"/><stop offset="0.068" stop-color="#009999"/><stop offset="0.2" stop-color="#037d99"/><stop offset="0.276" stop-color="#386c99"/><stop offset="0.369" stop-color="#995597"/><stop offset="0.403" stop-color="#993b75"/><stop offset="0.446" stop-color="#992759"/><stop offset="0.56" stop-color="#990c32"/><stop offset="0.733" stop-color="#99001a"/><stop offset="1" stop-color="#99000b"/></linearGradient><linearGradient id="o58"><stop offset="0" stop-color="#009992"/><stop offset="0.041" stop-color="#009999"/><stop offset="0.201" stop-color="#037899"/><stop offset="0.28" stop-color="#386799"/><stop offset="0.373" stop-color="#995198"/><stop offset="0.407" stop-color="#993876"/><stop offset="0.45" stop-color="#99255a"/><stop offset="0.563" stop-color="#990b33"/><stop offset="0.735" stop-color="#99001b"/><stop offset="1" stop-color="#99000c"/></linearGradient><linearGradient id="o59"><stop offset="0" stop-color="#009996"/><stop offset="0.202" stop-color="#037499"/><stop offset="0.285" stop-color="#3b6299"/><stop offset="0.377" stop-color="#994d99"/><stop offset="0.411" stop-color="#993677"/><stop offset="0.454" stop-color="#99235b"/><stop offset="0.568" stop-color="#990b34"/><stop offset="0.739" stop-color="#99001c"/><stop offset="1" stop-color="#99000d"/></linearGradient><linearGradient id="o60"><stop offset="0" stop-color="#009799"/><stop offset="0.204" stop-color="#047099"/><stop offset="0.286" stop-color="#395e99"/><stop offset="0.383" stop-color="#994897"/><stop offset="0.418" stop-color="#993277"/><stop offset="0.461" stop-color="#99215c"/><stop offset="0.575" stop-color="#990a35"/><stop offset="0.743" stop-color="#99001c"/><stop offset="1" stop-color="#99000d"/></linearGradient><linearGradient id="o61"><stop offset="0" stop-color="#009399"/><stop offset="0.205" stop-color="#046b99"/><stop offset="0.291" stop-color="#3b5a99"/><stop offset="0.387" stop-color="#994498"/><stop offset="0.422" stop-color="#993078"/><stop offset="0.465" stop-color="#991f5d"/><stop offset="0.578" stop-color="#990936"/><stop offset="0.745" stop-color="#99001d"/><stop offset="1" stop-color="#99000e"/></linearGradient><linearGradient id="o62"><stop offset="0" stop-color="#008e99"/><stop offset="0.205" stop-color="#046899"/><stop offset="0.293" stop-color="#3a5699"/><stop offset="0.391" stop-color="#994199"/><stop offset="0.428" stop-color="#992d78"/><stop offset="0.47" stop-color="#991d5e"/><stop offset="0.583" stop-color="#990837"/><stop offset="0.75" stop-color="#99001e"/><stop offset="1" stop-color="#99000f"/></linearGradient><linearGradient id="o63"><stop offset="0" stop-color="#008a99"/><stop offset="0.206" stop-color="#046499"/><stop offset="0.294" stop-color="#3a5299"/><stop offset="0.397" stop-color="#993d98"/><stop offset="0.434" stop-color="#992a77"/><stop offset="0.476" stop-color="#991b5e"/><stop offset="0.588" stop-color="#990838"/><stop offset="0.754" stop-color="#99001f"/><stop offset="1" stop-color="#99000f"/></linearGradient><linearGradient id="o64"><stop offset="0" stop-color="#008699"/><stop offset="0.207" stop-color="#046099"/><stop offset="0.298" stop-color="#3b4f99"/><stop offset="0.401" stop-color="#993a98"/><stop offset="0.438" stop-color="#992778"/><stop offset="0.481" stop-color="#991a5f"/><stop offset="0.593" stop-color="#990739"/><stop offset="0.758" stop-color="#990020"/><stop offset="1" stop-color="#990010"/></linearGradient><linearGradient id="o65"><stop offset="0" stop-color="#008299"/><stop offset="0.21" stop-color="#045d99"/><stop offset="0.302" stop-color="#3c4b99"/><stop offset="0.406" stop-color="#993799"/><stop offset="0.443" stop-color="#992579"/><stop offset="0.486" stop-color="#991860"/><stop offset="0.597" stop-color="#99063a"/><stop offset="0.761" stop-color="#990021"/><stop offset="1" stop-color="#990011"/></linearGradient><linearGradient id="o66"><stop offset="0" stop-color="#007e99"/><stop offset="0.21" stop-color="#055999"/><stop offset="0.304" stop-color="#3b4899"/><stop offset="0.412" stop-color="#993398"/><stop offset="0.449" stop-color="#992379"/><stop offset="0.492" stop-color="#991660"/><stop offset="0.603" stop-color="#99063b"/><stop offset="0.765" stop-color="#990022"/><stop offset="1" stop-color="#990012"/></linearGradient><linearGradient id="o67"><stop offset="0" stop-color="#007a99"/><stop offset="0.212" stop-color="#055699"/><stop offset="0.307" stop-color="#3c4599"/><stop offset="0.416" stop-color="#993099"/><stop offset="0.494" stop-color="#991562"/><stop offset="0.607" stop-color="#99053c"/><stop offset="0.768" stop-color="#990023"/><stop offset="1" stop-color="#990012"/></linearGradient><linearGradient id="o68"><stop offset="0" stop-color="#007799"/><stop offset="0.211" stop-color="#055499"/><stop offset="0.309" stop-color="#3b4299"/><stop offset="0.422" stop-color="#992d97"/><stop offset="0.501" stop-color="#991462"/><stop offset="0.614" stop-color="#99043c"/><stop offset="0.772" stop-color="#990024"/><stop offset="1" stop-color="#990013"/></linearGradient><linearGradient id="o69"><stop offset="0" stop-color="#007399"/><stop offset="0.212" stop-color="#055199"/><stop offset="0.312" stop-color="#3c3f99"/><stop offset="0.426" stop-color="#992b98"/><stop offset="0.506" stop-color="#991363"/><stop offset="0.617" stop-color="#99043e"/><stop offset="0.775" stop-color="#990025"/><stop offset="1" stop-color="#990014"/></linearGradient><linearGradient id="o70"><stop offset="0" stop-color="#007099"/><stop offset="0.215" stop-color="#054e99"/><stop offset="0.317" stop-color="#3d3c99"/><stop offset="0.432" stop-color="#992899"/><stop offset="0.511" stop-color="#991164"/><stop offset="0.622" stop-color="#99043f"/><stop offset="0.778" stop-color="#990026"/><stop offset="1" stop-color="#990015"/></linearGradient><linearGradient id="o71"><stop offset="0" stop-color="#006d99"/><stop offset="0.216" stop-color="#054b99"/><stop offset="0.319" stop-color="#3c3a99"/><stop offset="0.438" stop-color="#992598"/><stop offset="0.518" stop-color="#991064"/><stop offset="0.629" stop-color="#99033f"/><stop offset="0.782" stop-color="#990027"/><stop offset="1" stop-color="#990016"/></linearGradient><linearGradient id="o72"><stop offset="0" stop-color="#006a99"/><stop offset="0.217" stop-color="#064899"/><stop offset="0.323" stop-color="#3d3799"/><stop offset="0.442" stop-color="#992398"/><stop offset="0.523" stop-color="#990f64"/><stop offset="0.633" stop-color="#990341"/><stop offset="0.785" stop-color="#990028"/><stop offset="1" stop-color="#990017"/></linearGradient><linearGradient id="o73"><stop offset="0" stop-color="#006799"/><stop offset="0.195" stop-color="#004999"/><stop offset="0.219" stop-color="#064699"/><stop offset="0.327" stop-color="#3d3499"/><stop offset="0.447" stop-color="#992199"/><stop offset="0.526" stop-color="#990e66"/><stop offset="0.636" stop-color="#990242"/><stop offset="0.787" stop-color="#990029"/><stop offset="1" stop-color="#990018"/></linearGradient><linearGradient id="o74"><stop offset="0" stop-color="#006499"/><stop offset="0.196" stop-color="#004799"/><stop offset="0.22" stop-color="#064399"/><stop offset="0.329" stop-color="#3d3299"/><stop offset="0.453" stop-color="#991f98"/><stop offset="0.533" stop-color="#990d66"/><stop offset="0.642" stop-color="#990243"/><stop offset="0.792" stop-color="#99002a"/><stop offset="1" stop-color="#990018"/></linearGradient><linearGradient id="o75"><stop offset="0" stop-color="#006199"/><stop offset="0.196" stop-color="#004599"/><stop offset="0.221" stop-color="#064199"/><stop offset="0.333" stop-color="#3d3099"/><stop offset="0.458" stop-color="#991d99"/><stop offset="0.538" stop-color="#990c67"/><stop offset="0.648" stop-color="#990143"/><stop offset="0.796" stop-color="#99002b"/><stop offset="1" stop-color="#990019"/></linearGradient><linearGradient id="o76"><stop offset="0" stop-color="#005f99"/><stop offset="0.198" stop-color="#004299"/><stop offset="0.224" stop-color="#063f99"/><stop offset="0.338" stop-color="#3e2e99"/><stop offset="0.464" stop-color="#991b99"/><stop offset="0.544" stop-color="#990b68"/><stop offset="0.652" stop-color="#990145"/><stop offset="0.8" stop-color="#99002c"/><stop offset="1" stop-color="#99001a"/></linearGradient><linearGradient id="o77"><stop offset="0" stop-color="#005c99"/><stop offset="0.198" stop-color="#004099"/><stop offset="0.225" stop-color="#073c99"/><stop offset="0.34" stop-color="#3e2c99"/><stop offset="0.47" stop-color="#991998"/><stop offset="0.551" stop-color="#990968"/><stop offset="0.658" stop-color="#990145"/><stop offset="0.802" stop-color="#99002d"/><stop offset="1" stop-color="#99001b"/></linearGradient><linearGradient id="o78"><stop offset="0" stop-color="#005999"/><stop offset="0.199" stop-color="#003e99"/><stop offset="0.227" stop-color="#073a99"/><stop offset="0.344" stop-color="#3e2a99"/><stop offset="0.475" stop-color="#991799"/><stop offset="0.555" stop-color="#990969"/><stop offset="0.662" stop-color="#990047"/><stop offset="0.805" stop-color="#99002e"/><stop offset="1" stop-color="#99001c"/></linearGradient><linearGradient id="o79"><stop offset="0" stop-color="#005799"/><stop offset="0.198" stop-color="#003c99"/><stop offset="0.228" stop-color="#073899"/><stop offset="0.348" stop-color="#3f2899"/><stop offset="0.48" stop-color="#991699"/><stop offset="0.56" stop-color="#99086a"/><stop offset="0.666" stop-color="#990048"/><stop offset="0.808" stop-color="#99002f"/><stop offset="1" stop-color="#99001d"/></linearGradient><linearGradient id="o80"><stop offset="0" stop-color="#005499"/><stop offset="0.199" stop-color="#003a99"/><stop offset="0.229" stop-color="#073699"/><stop offset="0.35" stop-color="#3e2699"/><stop offset="0.487" stop-color="#991498"/><stop offset="0.567" stop-color="#99076a"/><stop offset="0.672" stop-color="#990049"/><stop offset="0.813" stop-color="#990030"/><stop offset="1" stop-color="#99001e"/></linearGradient><linearGradient id="o81"><stop offset="0" stop-color="#005299"/><stop offset="0.198" stop-color="#003899"/><stop offset="0.231" stop-color="#083499"/><stop offset="0.354" stop-color="#3f2499"/><stop offset="0.492" stop-color="#991299"/><stop offset="0.571" stop-color="#99066c"/><stop offset="0.676" stop-color="#99004a"/><stop offset="0.816" stop-color="#990031"/><stop offset="1" stop-color="#990020"/></linearGradient><linearGradient id="o82"><stop offset="0" stop-color="#005099"/><stop offset="0.2" stop-color="#003799"/><stop offset="0.232" stop-color="#083299"/><stop offset="0.356" stop-color="#3e2299"/><stop offset="0.499" stop-color="#991098"/><stop offset="0.578" stop-color="#99056c"/><stop offset="0.682" stop-color="#99004b"/><stop offset="0.819" stop-color="#990032"/><stop offset="1" stop-color="#990021"/></linearGradient><linearGradient id="o83"><stop offset="0" stop-color="#004d99"/><stop offset="0.199" stop-color="#003599"/><stop offset="0.234" stop-color="#083199"/><stop offset="0.361" stop-color="#3f2199"/><stop offset="0.504" stop-color="#990f98"/><stop offset="0.584" stop-color="#99056c"/><stop offset="0.686" stop-color="#99004c"/><stop offset="0.822" stop-color="#990034"/><stop offset="1" stop-color="#990022"/></linearGradient><linearGradient id="o84"><stop offset="0" stop-color="#004b99"/><stop offset="0.2" stop-color="#003399"/><stop offset="0.235" stop-color="#082f99"/><stop offset="0.367" stop-color="#411f99"/><stop offset="0.509" stop-color="#990e99"/><stop offset="0.588" stop-color="#99046e"/><stop offset="0.691" stop-color="#99004d"/><stop offset="0.825" stop-color="#990035"/><stop offset="1" stop-color="#990023"/></linearGradient><linearGradient id="o85"><stop offset="0" stop-color="#004999"/><stop offset="0.199" stop-color="#003299"/><stop offset="0.237" stop-color="#082d99"/><stop offset="0.367" stop-color="#3f1d99"/><stop offset="0.517" stop-color="#990c98"/><stop offset="0.595" stop-color="#99036e"/><stop offset="0.697" stop-color="#99004e"/><stop offset="0.828" stop-color="#990036"/><stop offset="1" stop-color="#990024"/></linearGradient><linearGradient id="o86"><stop offset="0" stop-color="#004799"/><stop offset="0.202" stop-color="#003099"/><stop offset="0.24" stop-color="#082b99"/><stop offset="0.375" stop-color="#411c99"/><stop offset="0.523" stop-color="#990b99"/><stop offset="0.602" stop-color="#99036f"/><stop offset="0.702" stop-color="#99004f"/><stop offset="0.831" stop-color="#990037"/><stop offset="1" stop-color="#990025"/></linearGradient><linearGradient id="o87"><stop offset="0" stop-color="#004599"/><stop offset="0.201" stop-color="#002e99"/><stop offset="0.241" stop-color="#092a99"/><stop offset="0.379" stop-color="#411a99"/><stop offset="0.527" stop-color="#990a99"/><stop offset="0.607" stop-color="#99026f"/><stop offset="0.707" stop-color="#990050"/><stop offset="0.835" stop-color="#990038"/><stop offset="1" stop-color="#990026"/></linearGradient><linearGradient id="o88"><stop offset="0" stop-color="#004499"/><stop offset="0.202" stop-color="#002d99"/><stop offset="0.242" stop-color="#092899"/><stop offset="0.379" stop-color="#401999"/><stop offset="0.535" stop-color="#990998"/><stop offset="0.613" stop-color="#990270"/><stop offset="0.712" stop-color="#990051"/><stop offset="0.838" stop-color="#990039"/><stop offset="1" stop-color="#990027"/></linearGradient><linearGradient id="o89"><stop offset="0" stop-color="#004299"/><stop offset="0.201" stop-color="#002c99"/><stop offset="0.244" stop-color="#092799"/><stop offset="0.386" stop-color="#411799"/><stop offset="0.54" stop-color="#990899"/><stop offset="0.619" stop-color="#990171"/><stop offset="0.716" stop-color="#990052"/><stop offset="0.841" stop-color="#99003b"/><stop offset="1" stop-color="#990029"/></linearGradient><linearGradient id="o90"><stop offset="0" stop-color="#004099"/><stop offset="0.203" stop-color="#002a99"/><stop offset="0.245" stop-color="#092599"/><stop offset="0.39" stop-color="#421699"/><stop offset="0.546" stop-color="#990799"/><stop offset="0.625" stop-color="#990171"/><stop offset="0.721" stop-color="#990053"/><stop offset="0.844" stop-color="#99003c"/><stop offset="1" stop-color="#99002a"/></linearGradient><linearGradient id="o91"><stop offset="0" stop-color="#003e99"/><stop offset="0.202" stop-color="#002999"/><stop offset="0.247" stop-color="#092499"/><stop offset="0.393" stop-color="#411599"/><stop offset="0.554" stop-color="#990698"/><stop offset="0.631" stop-color="#990072"/><stop offset="0.727" stop-color="#990054"/><stop offset="0.848" stop-color="#99003d"/><stop offset="1" stop-color="#99002b"/></linearGradient><linearGradient id="o92"><stop offset="0" stop-color="#003c99"/><stop offset="0.203" stop-color="#002799"/><stop offset="0.248" stop-color="#0a2399"/><stop offset="0.397" stop-color="#421499"/><stop offset="0.559" stop-color="#990599"/><stop offset="0.637" stop-color="#990073"/><stop offset="0.732" stop-color="#990055"/><stop offset="1" stop-color="#99002d"/></linearGradient><linearGradient id="o93"><stop offset="0" stop-color="#003b99"/><stop offset="0.202" stop-color="#002699"/><stop offset="0.25" stop-color="#0a2199"/><stop offset="0.402" stop-color="#421299"/><stop offset="0.565" stop-color="#990499"/><stop offset="0.643" stop-color="#990073"/><stop offset="0.737" stop-color="#990057"/><stop offset="1" stop-color="#99002e"/></linearGradient><linearGradient id="o94"><stop offset="0" stop-color="#003999"/><stop offset="0.204" stop-color="#002599"/><stop offset="0.254" stop-color="#0a2099"/><stop offset="0.405" stop-color="#421199"/><stop offset="0.573" stop-color="#990398"/><stop offset="0.65" stop-color="#990074"/><stop offset="0.742" stop-color="#990058"/><stop offset="1" stop-color="#99002f"/></linearGradient><linearGradient id="o95"><stop offset="0" stop-color="#003799"/><stop offset="0.203" stop-color="#002499"/><stop offset="0.256" stop-color="#0a1e99"/><stop offset="0.41" stop-color="#421099"/><stop offset="0.581" stop-color="#990298"/><stop offset="0.656" stop-color="#990075"/><stop offset="0.749" stop-color="#990059"/><stop offset="1" stop-color="#990031"/></linearGradient><linearGradient id="o96"><stop offset="0" stop-color="#003599"/><stop offset="0.203" stop-color="#002299"/><stop offset="0.258" stop-color="#0b1d99"/><stop offset="0.419" stop-color="#430e99"/><stop offset="0.59" stop-color="#990199"/><stop offset="0.666" stop-color="#990076"/><stop offset="0.755" stop-color="#99005b"/><stop offset="1" stop-color="#990033"/></linearGradient><linearGradient id="o97"><stop offset="0" stop-color="#003399"/><stop offset="0.204" stop-color="#002099"/><stop offset="0.261" stop-color="#0b1b99"/><stop offset="0.422" stop-color="#420d99"/><stop offset="0.602" stop-color="#990199"/><stop offset="0.676" stop-color="#990077"/><stop offset="0.764" stop-color="#99005c"/><stop offset="1" stop-color="#990035"/></linearGradient><linearGradient id="o98"><stop offset="0" stop-color="#003099"/><stop offset="0.205" stop-color="#001e99"/><stop offset="0.264" stop-color="#0b1999"/><stop offset="0.432" stop-color="#440b99"/><stop offset="0.611" stop-color="#990099"/><stop offset="0.684" stop-color="#990079"/><stop offset="0.77" stop-color="#99005e"/><stop offset="1" stop-color="#990038"/></linearGradient><linearGradient id="o99"><stop offset="0" stop-color="#002f99"/><stop offset="0.204" stop-color="#001d99"/><stop offset="0.268" stop-color="#0c1899"/><stop offset="0.438" stop-color="#430a99"/><stop offset="0.622" stop-color="#980099"/><stop offset="0.78" stop-color="#990060"/><stop offset="1" stop-color="#99003a"/></linearGradient><linearGradient id="o100"><stop offset="0" stop-color="#002c99"/><stop offset="0.204" stop-color="#001c99"/><stop offset="0.271" stop-color="#0c1699"/><stop offset="0.445" stop-color="#440999"/><stop offset="0.633" stop-color="#990099"/><stop offset="0.787" stop-color="#990062"/><stop offset="1" stop-color="#99003d"/></linearGradient><linearGradient id="o101"><stop offset="0" stop-color="#002b99"/><stop offset="0.204" stop-color="#001a99"/><stop offset="0.275" stop-color="#0d1599"/><stop offset="0.453" stop-color="#450899"/><stop offset="0.643" stop-color="#980099"/><stop offset="0.796" stop-color="#990064"/><stop offset="1" stop-color="#99003f"/></linearGradient><linearGradient id="o102"><stop offset="0" stop-color="#002999"/><stop offset="0.206" stop-color="#001999"/><stop offset="0.28" stop-color="#0d1399"/><stop offset="0.462" stop-color="#450799"/><stop offset="0.656" stop-color="#990099"/><stop offset="0.803" stop-color="#990066"/><stop offset="1" stop-color="#990042"/></linearGradient><linearGradient id="o103"><stop offset="0" stop-color="#002799"/><stop offset="0.204" stop-color="#001899"/><stop offset="0.283" stop-color="#0e1299"/><stop offset="0.47" stop-color="#460699"/><stop offset="0.669" stop-color="#990099"/><stop offset="0.811" stop-color="#990068"/><stop offset="1" stop-color="#990045"/></linearGradient><linearGradient id="o104"><stop offset="0" stop-color="#002599"/><stop offset="0.204" stop-color="#001699"/><stop offset="0.286" stop-color="#0e1199"/><stop offset="0.476" stop-color="#460599"/><stop offset="0.68" stop-color="#990099"/><stop offset="0.818" stop-color="#99006a"/><stop offset="1" stop-color="#990047"/></linearGradient><linearGradient id="o105"><stop offset="0" stop-color="#002499"/><stop offset="0.205" stop-color="#001599"/><stop offset="0.291" stop-color="#0f0f99"/><stop offset="0.484" stop-color="#460499"/><stop offset="0.692" stop-color="#990099"/><stop offset="0.826" stop-color="#99006b"/><stop offset="1" stop-color="#99004a"/></linearGradient><linearGradient id="o106"><stop offset="0" stop-color="#002299"/><stop offset="0.205" stop-color="#001499"/><stop offset="0.295" stop-color="#0f0e99"/><stop offset="0.493" stop-color="#470399"/><stop offset="0.703" stop-color="#980099"/><stop offset="0.834" stop-color="#99006d"/><stop offset="1" stop-color="#99004d"/></linearGradient><linearGradient id="o107"><stop offset="0" stop-color="#002099"/><stop offset="0.203" stop-color="#001399"/><stop offset="0.298" stop-color="#0f0d99"/><stop offset="0.501" stop-color="#470299"/><stop offset="0.717" stop-color="#990099"/><stop offset="0.842" stop-color="#99006f"/><stop offset="1" stop-color="#990050"/></linearGradient><linearGradient id="o108"><stop offset="0" stop-color="#001f99"/><stop offset="0.205" stop-color="#001299"/><stop offset="0.304" stop-color="#100c99"/><stop offset="0.509" stop-color="#470299"/><stop offset="0.729" stop-color="#980099"/><stop offset="0.851" stop-color="#990071"/><stop offset="1" stop-color="#990053"/></linearGradient><linearGradient id="o109"><stop offset="0" stop-color="#001e99"/><stop offset="0.205" stop-color="#001199"/><stop offset="0.308" stop-color="#100b99"/><stop offset="0.518" stop-color="#470199"/><stop offset="0.744" stop-color="#990099"/><stop offset="0.859" stop-color="#990074"/><stop offset="1" stop-color="#990056"/></linearGradient><linearGradient id="o110"><stop offset="0" stop-color="#001c99"/><stop offset="0.205" stop-color="#001099"/><stop offset="0.312" stop-color="#110a99"/><stop offset="0.527" stop-color="#480099"/><stop offset="0.756" stop-color="#980099"/><stop offset="0.87" stop-color="#990075"/><stop offset="1" stop-color="#99005a"/></linearGradient><linearGradient id="o111"><stop offset="0" stop-color="#001b99"/><stop offset="0.203" stop-color="#000f99"/><stop offset="0.318" stop-color="#110999"/><stop offset="0.539" stop-color="#490099"/><stop offset="0.771" stop-color="#990099"/><stop offset="0.876" stop-color="#990078"/><stop offset="1" stop-color="#99005d"/></linearGradient><linearGradient id="o112"><stop offset="0" stop-color="#001a99"/><stop offset="0.205" stop-color="#000e99"/><stop offset="0.322" stop-color="#110899"/><stop offset="0.545" stop-color="#480099"/><stop offset="0.785" stop-color="#980099"/><stop offset="1" stop-color="#990061"/></linearGradient><linearGradient id="o113"><stop offset="0" stop-color="#001899"/><stop offset="0.205" stop-color="#000d99"/><stop offset="0.329" stop-color="#120799"/><stop offset="0.558" stop-color="#490099"/><stop offset="0.801" stop-color="#990099"/><stop offset="1" stop-color="#990065"/></linearGradient><linearGradient id="o114"><stop offset="0" stop-color="#001799"/><stop offset="0.205" stop-color="#000d99"/><stop offset="0.333" stop-color="#130699"/><stop offset="0.568" stop-color="#4a0099"/><stop offset="0.817" stop-color="#990099"/><stop offset="1" stop-color="#990068"/></linearGradient><linearGradient id="o115"><stop offset="0" stop-color="#001699"/><stop offset="0.205" stop-color="#000c99"/><stop offset="0.338" stop-color="#130699"/><stop offset="0.579" stop-color="#4a0099"/><stop offset="0.831" stop-color="#990099"/><stop offset="1" stop-color="#99006c"/></linearGradient><linearGradient id="o116"><stop offset="0" stop-color="#001599"/><stop offset="0.205" stop-color="#000b99"/><stop offset="0.346" stop-color="#140599"/><stop offset="0.59" stop-color="#4b0099"/><stop offset="0.848" stop-color="#990099"/><stop offset="1" stop-color="#990071"/></linearGradient><linearGradient id="o117"><stop offset="0" stop-color="#001499"/><stop offset="0.202" stop-color="#000a99"/><stop offset="0.301" stop-color="#0c0699"/><stop offset="0.571" stop-color="#430099"/><stop offset="0.864" stop-color="#990099"/><stop offset="1" stop-color="#990075"/></linearGradient><linearGradient id="o118"><stop offset="0" stop-color="#001399"/><stop offset="0.202" stop-color="#000a99"/><stop offset="0.311" stop-color="#0d0599"/><stop offset="0.588" stop-color="#450099"/><stop offset="0.882" stop-color="#990099"/><stop offset="1" stop-color="#990079"/></linearGradient><linearGradient id="o119"><stop offset="0" stop-color="#001299"/><stop offset="0.201" stop-color="#000999"/><stop offset="0.318" stop-color="#0e0499"/><stop offset="0.598" stop-color="#460099"/><stop offset="0.895" stop-color="#980099"/><stop offset="1" stop-color="#99007d"/></linearGradient><linearGradient id="o120"><stop offset="0" stop-color="#001199"/><stop offset="0.201" stop-color="#000899"/><stop offset="0.331" stop-color="#0f0499"/><stop offset="0.612" stop-color="#470099"/><stop offset="0.914" stop-color="#990099"/><stop offset="1" stop-color="#990082"/></linearGradient><linearGradient id="o121"><stop offset="0" stop-color="#001099"/><stop offset="0.201" stop-color="#000899"/><stop offset="0.345" stop-color="#110399"/><stop offset="0.631" stop-color="#490099"/><stop offset="0.931" stop-color="#980099"/><stop offset="1" stop-color="#990087"/></linearGradient><linearGradient id="o122"><stop offset="0" stop-color="#000f99"/><stop offset="0.201" stop-color="#000799"/><stop offset="0.36" stop-color="#130299"/><stop offset="0.646" stop-color="#4a0099"/><stop offset="0.951" stop-color="#990099"/><stop offset="1" stop-color="#99008c"/></linearGradient><linearGradient id="o123"><stop offset="0" stop-color="#000e99"/><stop offset="0.204" stop-color="#000699"/><stop offset="0.377" stop-color="#140199"/><stop offset="0.667" stop-color="#4c0099"/><stop offset="0.969" stop-color="#980099"/><stop offset="1" stop-color="#990091"/></linearGradient><linearGradient id="o124"><stop offset="0" stop-color="#000d99"/><stop offset="0.207" stop-color="#000699"/><stop offset="0.395" stop-color="#170199"/><stop offset="0.671" stop-color="#4a0099"/><stop offset="1" stop-color="#990097"/></linearGradient><linearGradient id="o125"><stop offset="0" stop-color="#000c99"/><stop offset="0.207" stop-color="#000599"/><stop offset="0.404" stop-color="#170099"/><stop offset="0.694" stop-color="#4c0099"/><stop offset="1" stop-color="#950099"/></linearGradient><linearGradient id="o126"><stop offset="0" stop-color="#000b99"/><stop offset="0.205" stop-color="#000599"/><stop offset="0.401" stop-color="#160099"/><stop offset="0.694" stop-color="#490099"/><stop offset="1" stop-color="#8e0099"/></linearGradient><linearGradient id="o127"><stop offset="0" stop-color="#000a99"/><stop offset="0.206" stop-color="#000499"/><stop offset="0.399" stop-color="#150099"/><stop offset="0.691" stop-color="#450099"/><stop offset="1" stop-color="#870099"/></linearGradient><linearGradient id="o128"><stop offset="0" stop-color="#000999"/><stop offset="0.204" stop-color="#000399"/><stop offset="0.398" stop-color="#140099"/><stop offset="0.69" stop-color="#420099"/><stop offset="1" stop-color="#810099"/></linearGradient><linearGradient id="o129"><stop offset="0" stop-color="#000899"/><stop offset="0.202" stop-color="#000399"/><stop offset="0.397" stop-color="#130099"/><stop offset="0.69" stop-color="#3e0099"/><stop offset="1" stop-color="#7a0099"/></linearGradient><linearGradient id="o130"><stop offset="0" stop-color="#000799"/><stop offset="0.199" stop-color="#000299"/><stop offset="0.395" stop-color="#120099"/><stop offset="0.687" stop-color="#3b0099"/><stop offset="1" stop-color="#740099"/></linearGradient><linearGradient id="o131"><stop offset="0" stop-color="#000799"/><stop offset="0.196" stop-color="#000299"/><stop offset="0.393" stop-color="#110099"/><stop offset="0.687" stop-color="#390099"/><stop offset="1" stop-color="#6f0099"/></linearGradient><linearGradient id="o132"><stop offset="0" stop-color="#000699"/><stop offset="0.194" stop-color="#000299"/><stop offset="0.392" stop-color="#110099"/><stop offset="0.687" stop-color="#360099"/><stop offset="1" stop-color="#6a0099"/></linearGradient><linearGradient id="o133"><stop offset="0" stop-color="#000599"/><stop offset="0.192" stop-color="#000199"/><stop offset="0.391" stop-color="#100099"/><stop offset="0.686" stop-color="#340099"/><stop offset="1" stop-color="#650099"/></linearGradient><linearGradient id="o134"><stop offset="0" stop-color="#000499"/><stop offset="0.192" stop-color="#000199"/><stop offset="0.392" stop-color="#0f0099"/><stop offset="1" stop-color="#600099"/></linearGradient><linearGradient id="o135"><stop offset="0" stop-color="#000499"/><stop offset="0.19" stop-color="#000099"/><stop offset="0.387" stop-color="#0e0099"/><stop offset="1" stop-color="#5b0099"/></linearGradient><linearGradient id="o136"><stop offset="0" stop-color="#000399"/><stop offset="0.187" stop-color="#000099"/><stop offset="0.386" stop-color="#0e0099"/><stop offset="1" stop-color="#560099"/></linearGradient><linearGradient id="o137"><stop offset="0" stop-color="#000299"/><stop offset="0.184" stop-color="#000099"/><stop offset="0.389" stop-color="#0d0099"/><stop offset="1" stop-color="#520099"/></linearGradient><linearGradient id="o138"><stop offset="0" stop-color="#000299"/><stop offset="0.185" stop-color="#000099"/><stop offset="0.388" stop-color="#0d0099"/><stop offset="1" stop-color="#4e0099"/></linearGradient><linearGradient id="o139"><stop offset="0" stop-color="#000199"/><stop offset="0.182" stop-color="#000099"/><stop offset="0.386" stop-color="#0c0099"/><stop offset="1" stop-color="#4a0099"/></linearGradient><linearGradient id="o140"><stop offset="0" stop-color="#000199"/><stop offset="0.178" stop-color="#000099"/><stop offset="0.385" stop-color="#0c0099"/><stop offset="1" stop-color="#460099"/></linearGradient><linearGradient id="o141"><stop offset="0" stop-color="#000099"/><stop offset="0.383" stop-color="#0b0099"/><stop offset="1" stop-color="#420099"/></linearGradient><linearGradient id="o142"><stop offset="0" stop-color="#000099"/><stop offset="0.382" stop-color="#0b0099"/><stop offset="1" stop-color="#3f0099"/></linearGradient><linearGradient id="o143"><stop offset="0" stop-color="#000099"/><stop offset="0.38" stop-color="#0b0099"/><stop offset="1" stop-color="#3b0099"/></linearGradient><linearGradient id="o144"><stop offset="0" stop-color="#000099"/><stop offset="0.384" stop-color="#0b0099"/><stop offset="1" stop-color="#380099"/></linearGradient><linearGradient id="o145"><stop offset="0" stop-color="#000099"/><stop offset="0.384" stop-color="#0a0099"/><stop offset="1" stop-color="#350099"/></linearGradient><linearGradient id="o146"><stop offset="0" stop-color="#000099"/><stop offset="0.382" stop-color="#0a0099"/><stop offset="1" stop-color="#320099"/></linearGradient><linearGradient id="o147"><stop offset="0" stop-color="#000099"/><stop offset="0.383" stop-color="#0a0099"/><stop offset="1" stop-color="#2f0099"/></linearGradient><linearGradient id="o148"><stop offset="0" stop-color="#000099"/><stop offset="0.39" stop-color="#0a0099"/><stop offset="1" stop-color="#2c0099"/></linearGradient><linearGradient id="o149"><stop offset="0" stop-color="#000099"/><stop offset="0.395" stop-color="#0a0099"/><stop offset="1" stop-color="#290099"/></linearGradient><linearGradient id="o150"><stop offset="0" stop-color="#000099"/><stop offset="0.396" stop-color="#0a0099"/><stop offset="1" stop-color="#270099"/></linearGradient><linearGradient id="o151"><stop offset="0" stop-color="#000099"/><stop offset="1" stop-color="#240099"/></linearGradient><linearGradient id="o152"><stop offset="0" stop-color="#000099"/><stop offset="1" stop-color="#220099"/></linearGradient><linearGradient id="o153"><stop offset="0" stop-color="#000099"/><stop offset="1" stop-color="#200099"/></linearGradient><linearGradient id="o154"><stop offset="0" stop-color="#010099"/><stop offset="1" stop-color="#1e0099"/></linearGradient><linearGradient id="o155"><stop offset="0" stop-color="#010099"/><stop offset="1" stop-color="#1c0099"/></linearGradient><linearGradient id="o156"><stop offset="0" stop-color="#020099"/><stop offset="1" stop-color="#1a0099"/></linearGradient><linearGradient id="o157"><stop offset="0" stop-color="#020099"/><stop offset="1" stop-color="#180099"/></linearGradient><linearGradient id="o158"><stop offset="0" stop-color="#030099"/><stop offset="1" stop-color="#160099"/></linearGradient><linearGradient id="o159"><stop offset="0" stop-color="#040099"/><stop offset="1" stop-color="#140099"/></linearGradient><linearGradient id="o160"><stop offset="0" stop-color="#040099"/><stop offset="1" stop-color="#120099"/></linearGradient><linearGradient id="o161"><stop offset="0" stop-color="#050099"/><stop offset="1" stop-color="#110099"/></linearGradient><linearGradient id="o162"><stop offset="0" stop-color="#060099"/><stop offset="1" stop-color="#0f0099"/></linearGradient><linearGradient id="o163"><stop offset="0" stop-color="#070099"/><stop offset="1" stop-color="#0d0099"/></linearGradient><linearGradient id="o164"><stop offset="0" stop-color="#080099"/><stop offset="1" stop-color="#0c0099"/></linearGradient><linearGradient id="o165"><stop offset="0" stop-color="#090099"/><stop offset="1" stop-color="#0b0099"/></linearGradient><linearGradient id="i0"><stop offset="0" stop-color="#00ff01"/><stop offset="0.415" stop-color="#0eff00"/><stop offset="1" stop-color="#36ff00"/></linearGradient><linearGradient id="i1"><stop offset="0" stop-color="#00ff04"/><stop offset="0.188" stop-color="#09ff03"/><stop offset="0.464" stop-color="#26ff02"/><stop offset="1" stop-color="#7aff00"/></linearGradient><linearGradient id="i2"><stop offset="0" stop-color="#00ff08"/><stop offset="0.214" stop-color="#15ff06"/><stop offset="0.49" stop-color="#47ff03"/><stop offset="0.755" stop-color="#8bff01"/><stop offset="1" stop-color="#deff00"/></linearGradient><linearGradient id="i3"><stop offset="0" stop-color="#00ff0b"/><stop offset="0.18" stop-color="#17ff09"/><stop offset="0.414" stop-color="#52ff06"/><stop offset="0.625" stop-color="#9eff03"/><stop offset="0.828" stop-color="#ffff01"/><stop offset="1" stop-color="#ffb500"/></linearGradient><linearGradient id="i4"><stop offset="0" stop-color="#00ff0f"/><stop offset="0.146" stop-color="#18ff0d"/><stop offset="0.331" stop-color="#52ff0a"/><stop offset="0.503" stop-color="#9eff07"/><stop offset="0.662" stop-color="#fcff04"/><stop offset="0.822" stop-color="#ffae01"/><stop offset="1" stop-color="#ff7600"/></linearGradient><linearGradient id="i5"><stop offset="0" stop-color="#00ff13"/><stop offset="0.131" stop-color="#19ff11"/><stop offset="0.29" stop-color="#51ff0e"/><stop offset="0.438" stop-color="#9bff0b"/><stop offset="0.591" stop-color="#fffd08"/><stop offset="0.67" stop-color="#ffca05"/><stop offset="0.767" stop-color="#ff9d02"/><stop offset="0.875" stop-color="#ff7801"/><stop offset="1" stop-color="#ff5a00"/></linearGradient><linearGradient id="i6"><stop offset="0" stop-color="#00ff16"/><stop offset="0.118" stop-color="#18ff14"/><stop offset="0.262" stop-color="#51ff11"/><stop offset="0.4" stop-color="#9fff0e"/><stop offset="0.528" stop-color="#feff0b"/><stop offset="0.621" stop-color="#ffc007"/><stop offset="0.723" stop-color="#ff8f04"/><stop offset="0.851" stop-color="#ff6601"/><stop offset="1" stop-color="#ff4600"/></linearGradient><linearGradient id="i7"><stop offset="0" stop-color="#00ff19"/><stop offset="0.107" stop-color="#19ff17"/><stop offset="0.238" stop-color="#53ff15"/><stop offset="0.36" stop-color="#9fff12"/><stop offset="0.477" stop-color="#ffff0f"/><stop offset="0.57" stop-color="#ffb909"/><stop offset="0.687" stop-color="#ff8105"/><stop offset="0.827" stop-color="#ff5701"/><stop offset="1" stop-color="#ff3600"/></linearGradient><linearGradient id="i8"><stop offset="0" stop-color="#00ff1d"/><stop offset="0.098" stop-color="#18ff1b"/><stop offset="0.218" stop-color="#52ff18"/><stop offset="0.329" stop-color="#9fff16"/><stop offset="0.436" stop-color="#ffff13"/><stop offset="0.534" stop-color="#ffb00b"/><stop offset="0.654" stop-color="#ff7606"/><stop offset="0.808" stop-color="#ff4a02"/><stop offset="1" stop-color="#ff2a00"/></linearGradient><linearGradient id="i9"><stop offset="0" stop-color="#00ff20"/><stop offset="0.087" stop-color="#18ff1e"/><stop offset="0.198" stop-color="#52ff1c"/><stop offset="0.3" stop-color="#9fff1a"/><stop offset="0.399" stop-color="#fffe17"/><stop offset="0.447" stop-color="#ffd012"/><stop offset="0.498" stop-color="#ffaa0d"/><stop offset="0.625" stop-color="#ff6c07"/><stop offset="0.787" stop-color="#ff3f02"/><stop offset="1" stop-color="#ff2000"/></linearGradient><linearGradient id="i10"><stop offset="0" stop-color="#00ff24"/><stop offset="0.081" stop-color="#17ff22"/><stop offset="0.183" stop-color="#52ff20"/><stop offset="0.275" stop-color="#9bff1e"/><stop offset="0.37" stop-color="#fffd1b"/><stop offset="0.418" stop-color="#ffcc15"/><stop offset="0.469" stop-color="#ffa410"/><stop offset="0.597" stop-color="#ff6408"/><stop offset="0.769" stop-color="#ff3603"/><stop offset="1" stop-color="#ff1700"/></linearGradient><linearGradient id="i11"><stop offset="0" stop-color="#00ff27"/><stop offset="0.075" stop-color="#18ff26"/><stop offset="0.168" stop-color="#51ff24"/><stop offset="0.253" stop-color="#9bff23"/><stop offset="0.342" stop-color="#fffc20"/><stop offset="0.387" stop-color="#ffcb19"/><stop offset="0.442" stop-color="#ff9e12"/><stop offset="0.503" stop-color="#ff7a0d"/><stop offset="0.575" stop-color="#ff5c09"/><stop offset="0.753" stop-color="#ff2f03"/><stop offset="1" stop-color="#ff1100"/></linearGradient><linearGradient id="i12"><stop offset="0" stop-color="#00ff2b"/><stop offset="0.071" stop-color="#18ff2a"/><stop offset="0.157" stop-color="#51ff29"/><stop offset="0.24" stop-color="#9fff27"/><stop offset="0.317" stop-color="#feff25"/><stop offset="0.365" stop-color="#ffc61c"/><stop offset="0.417" stop-color="#ff9b15"/><stop offset="0.478" stop-color="#ff760f"/><stop offset="0.551" stop-color="#ff560a"/><stop offset="0.737" stop-color="#ff2803"/><stop offset="1" stop-color="#ff0c00"/></linearGradient><linearGradient id="i13"><stop offset="0" stop-color="#00ff2f"/><stop offset="0.066" stop-color="#19ff2e"/><stop offset="0.148" stop-color="#53ff2d"/><stop offset="0.224" stop-color="#9fff2c"/><stop offset="0.296" stop-color="#ffff2b"/><stop offset="0.341" stop-color="#ffc620"/><stop offset="0.396" stop-color="#ff9518"/><stop offset="0.459" stop-color="#ff6e11"/><stop offset="0.532" stop-color="#ff500b"/><stop offset="0.725" stop-color="#ff2204"/><stop offset="1" stop-color="#ff0800"/></linearGradient><linearGradient id="i14"><stop offset="0" stop-color="#00ff34"/><stop offset="0.063" stop-color="#18ff33"/><stop offset="0.14" stop-color="#53ff32"/><stop offset="0.211" stop-color="#9fff31"/><stop offset="0.28" stop-color="#fffe30"/><stop offset="0.326" stop-color="#ffc124"/><stop offset="0.377" stop-color="#ff921b"/><stop offset="0.44" stop-color="#ff6b13"/><stop offset="0.514" stop-color="#ff4b0d"/><stop offset="0.714" stop-color="#ff1d04"/><stop offset="1" stop-color="#ff0400"/></linearGradient><linearGradient id="i15"><stop offset="0" stop-color="#00ff38"/><stop offset="0.057" stop-color="#18ff37"/><stop offset="0.13" stop-color="#52ff37"/><stop offset="0.195" stop-color="#9cff36"/><stop offset="0.263" stop-color="#fffd35"/><stop offset="0.306" stop-color="#ffc028"/><stop offset="0.36" stop-color="#ff8d1d"/><stop offset="0.423" stop-color="#ff6515"/><stop offset="0.499" stop-color="#ff450e"/><stop offset="0.591" stop-color="#ff2c08"/><stop offset="0.702" stop-color="#ff1904"/><stop offset="1" stop-color="#ff0200"/></linearGradient><linearGradient id="i16"><stop offset="0" stop-color="#00ff3c"/><stop offset="0.054" stop-color="#17ff3c"/><stop offset="0.123" stop-color="#52ff3c"/><stop offset="0.185" stop-color="#9cff3c"/><stop offset="0.249" stop-color="#fffc3b"/><stop offset="0.293" stop-color="#ffbc2c"/><stop offset="0.344" stop-color="#ff8a20"/><stop offset="0.409" stop-color="#ff6016"/><stop offset="0.486" stop-color="#ff400f"/><stop offset="0.578" stop-color="#ff2809"/><stop offset="0.694" stop-color="#ff1505"/><stop offset="1" stop-color="#ff0000"/></linearGradient><linearGradient id="i17"><stop offset="0" stop-color="#00ff40"/><stop offset="0.054" stop-color="#19ff40"/><stop offset="0.12" stop-color="#52ff40"/><stop offset="0.182" stop-color="#9cff40"/><stop offset="0.246" stop-color="#fffc3f"/><stop offset="0.289" stop-color="#ffbc2f"/><stop offset="0.34" stop-color="#ff8923"/><stop offset="0.404" stop-color="#ff6018"/><stop offset="0.481" stop-color="#ff4010"/><stop offset="0.575" stop-color="#ff270a"/><stop offset="0.693" stop-color="#ff1405"/><stop offset="1" stop-color="#ff0000"/></linearGradient><linearGradient id="i18"><stop offset="0" stop-color="#00ff42"/><stop offset="0.054" stop-color="#18ff42"/><stop offset="0.121" stop-color="#51ff43"/><stop offset="0.179" stop-color="#98ff43"/><stop offset="0.246" stop-color="#fffb42"/><stop offset="0.29" stop-color="#ffbb32"/><stop offset="0.341" stop-color="#ff8925"/><stop offset="0.405" stop-color="#ff5f1a"/><stop offset="0.482" stop-color="#ff3f11"/><stop offset="0.577" stop-color="#ff260b"/><stop offset="0.692" stop-color="#ff1406"/><stop offset="1" stop-color="#ff0000"/></linearGradient><linearGradient id="i19"><stop offset="0" stop-color="#00ff44"/><stop offset="0.054" stop-color="#18ff45"/><stop offset="0.123" stop-color="#54ff45"/><stop offset="0.185" stop-color="#9fff46"/><stop offset="0.244" stop-color="#ffff46"/><stop offset="0.288" stop-color="#ffbe35"/><stop offset="0.339" stop-color="#ff8a27"/><stop offset="0.404" stop-color="#ff601b"/><stop offset="0.481" stop-color="#ff4013"/><stop offset="0.576" stop-color="#ff270c"/><stop offset="0.692" stop-color="#ff1406"/><stop offset="1" stop-color="#ff0000"/></linearGradient><linearGradient id="i20"><stop offset="0" stop-color="#00ff47"/><stop offset="0.054" stop-color="#18ff47"/><stop offset="0.121" stop-color="#51ff48"/><stop offset="0.186" stop-color="#9fff49"/><stop offset="0.245" stop-color="#ffff4a"/><stop offset="0.289" stop-color="#ffbd37"/><stop offset="0.34" stop-color="#ff8a29"/><stop offset="0.402" stop-color="#ff611d"/><stop offset="0.479" stop-color="#ff4014"/><stop offset="0.575" stop-color="#ff270d"/><stop offset="0.691" stop-color="#ff1407"/><stop offset="1" stop-color="#ff0001"/></linearGradient><linearGradient id="i21"><stop offset="0" stop-color="#00ff49"/><stop offset="0.054" stop-color="#19ff4a"/><stop offset="0.122" stop-color="#53ff4b"/><stop offset="0.184" stop-color="#9fff4c"/><stop offset="0.244" stop-color="#fffe4d"/><stop offset="0.288" stop-color="#ffbd3a"/><stop offset="0.339" stop-color="#ff892b"/><stop offset="0.402" stop-color="#ff611f"/><stop offset="0.479" stop-color="#ff4015"/><stop offset="0.575" stop-color="#ff260d"/><stop offset="0.692" stop-color="#ff1408"/><stop offset="1" stop-color="#ff0001"/></linearGradient><linearGradient id="i22"><stop offset="0" stop-color="#00ff4c"/><stop offset="0.055" stop-color="#19ff4d"/><stop offset="0.122" stop-color="#53ff4e"/><stop offset="0.185" stop-color="#a0ff4f"/><stop offset="0.245" stop-color="#fffe50"/><stop offset="0.289" stop-color="#ffbc3c"/><stop offset="0.341" stop-color="#ff892d"/><stop offset="0.404" stop-color="#ff6020"/><stop offset="0.479" stop-color="#ff4016"/><stop offset="0.573" stop-color="#ff270f"/><stop offset="0.69" stop-color="#ff1409"/><stop offset="1" stop-color="#ff0001"/></linearGradient><linearGradient id="i23"><stop offset="0" stop-color="#00ff4e"/><stop offset="0.055" stop-color="#19ff4f"/><stop offset="0.123" stop-color="#53ff51"/><stop offset="0.185" stop-color="#a0ff52"/><stop offset="0.245" stop-color="#fffe53"/><stop offset="0.29" stop-color="#ffbc3f"/><stop offset="0.342" stop-color="#ff892f"/><stop offset="0.405" stop-color="#ff6022"/><stop offset="0.48" stop-color="#ff4018"/><stop offset="0.574" stop-color="#ff2710"/><stop offset="0.692" stop-color="#ff1409"/><stop offset="1" stop-color="#ff0002"/></linearGradient><linearGradient id="i24"><stop offset="0" stop-color="#00ff51"/><stop offset="0.052" stop-color="#16ff52"/><stop offset="0.12" stop-color="#50ff53"/><stop offset="0.183" stop-color="#9cff55"/><stop offset="0.246" stop-color="#fffd57"/><stop offset="0.288" stop-color="#ffbf42"/><stop offset="0.34" stop-color="#ff8a31"/><stop offset="0.403" stop-color="#ff6124"/><stop offset="0.482" stop-color="#ff4019"/><stop offset="0.576" stop-color="#ff2710"/><stop offset="0.694" stop-color="#ff140a"/><stop offset="1" stop-color="#ff0002"/></linearGradient><linearGradient id="i25"><stop offset="0" stop-color="#00ff53"/><stop offset="0.055" stop-color="#1aff55"/><stop offset="0.121" stop-color="#53ff57"/><stop offset="0.182" stop-color="#9cff58"/><stop offset="0.245" stop-color="#fffd5a"/><stop offset="0.287" stop-color="#ffbe45"/><stop offset="0.339" stop-color="#ff8a33"/><stop offset="0.403" stop-color="#ff6025"/><stop offset="0.482" stop-color="#ff3f1a"/><stop offset="0.576" stop-color="#ff2611"/><stop offset="0.692" stop-color="#ff140b"/><stop offset="1" stop-color="#ff0002"/></linearGradient><linearGradient id="i26"><stop offset="0" stop-color="#00ff56"/><stop offset="0.055" stop-color="#19ff58"/><stop offset="0.121" stop-color="#52ff5a"/><stop offset="0.182" stop-color="#9cff5c"/><stop offset="0.245" stop-color="#fffc5d"/><stop offset="0.288" stop-color="#ffbe48"/><stop offset="0.34" stop-color="#ff8935"/><stop offset="0.404" stop-color="#ff6027"/><stop offset="0.48" stop-color="#ff401b"/><stop offset="0.575" stop-color="#ff2712"/><stop offset="0.691" stop-color="#ff140b"/><stop offset="1" stop-color="#ff0003"/></linearGradient><linearGradient id="i27"><stop offset="0" stop-color="#00ff59"/><stop offset="0.053" stop-color="#17ff5a"/><stop offset="0.122" stop-color="#52ff5d"/><stop offset="0.183" stop-color="#9cff5f"/><stop offset="0.246" stop-color="#fffc61"/><stop offset="0.288" stop-color="#ffbd4a"/><stop offset="0.341" stop-color="#ff8937"/><stop offset="0.405" stop-color="#ff6029"/><stop offset="0.481" stop-color="#ff3f1d"/><stop offset="0.577" stop-color="#ff2613"/><stop offset="0.693" stop-color="#ff140c"/><stop offset="1" stop-color="#ff0003"/></linearGradient><linearGradient id="i28"><stop offset="0" stop-color="#00ff5b"/><stop offset="0.053" stop-color="#17ff5d"/><stop offset="0.119" stop-color="#4fff60"/><stop offset="0.18" stop-color="#98ff62"/><stop offset="0.247" stop-color="#fffb64"/><stop offset="0.289" stop-color="#ffbd4d"/><stop offset="0.342" stop-color="#ff883a"/><stop offset="0.406" stop-color="#ff5f2a"/><stop offset="0.483" stop-color="#ff3f1e"/><stop offset="0.578" stop-color="#ff2614"/><stop offset="0.695" stop-color="#ff130d"/><stop offset="1" stop-color="#ff0003"/></linearGradient><linearGradient id="i29"><stop offset="0" stop-color="#00ff5e"/><stop offset="0.053" stop-color="#17ff60"/><stop offset="0.123" stop-color="#52ff63"/><stop offset="0.187" stop-color="#a0ff66"/><stop offset="0.245" stop-color="#feff69"/><stop offset="0.291" stop-color="#ffbc50"/><stop offset="0.341" stop-color="#ff8a3d"/><stop offset="0.403" stop-color="#ff612d"/><stop offset="0.48" stop-color="#ff4020"/><stop offset="0.573" stop-color="#ff2716"/><stop offset="0.691" stop-color="#ff140e"/><stop offset="1" stop-color="#ff0004"/></linearGradient><linearGradient id="i30"><stop offset="0" stop-color="#00ff61"/><stop offset="0.056" stop-color="#1aff63"/><stop offset="0.123" stop-color="#54ff66"/><stop offset="0.185" stop-color="#a0ff69"/><stop offset="0.244" stop-color="#ffff6d"/><stop offset="0.287" stop-color="#ffbf54"/><stop offset="0.34" stop-color="#ff893f"/><stop offset="0.402" stop-color="#ff612f"/><stop offset="0.48" stop-color="#ff4021"/><stop offset="0.574" stop-color="#ff2717"/><stop offset="0.692" stop-color="#ff140f"/><stop offset="1" stop-color="#ff0004"/></linearGradient><linearGradient id="i31"><stop offset="0" stop-color="#00ff64"/><stop offset="0.054" stop-color="#18ff66"/><stop offset="0.121" stop-color="#51ff69"/><stop offset="0.185" stop-color="#a0ff6d"/><stop offset="0.245" stop-color="#ffff71"/><stop offset="0.288" stop-color="#ffbe57"/><stop offset="0.341" stop-color="#ff8941"/><stop offset="0.403" stop-color="#ff6130"/><stop offset="0.481" stop-color="#ff4023"/><stop offset="0.575" stop-color="#ff2718"/><stop offset="0.694" stop-color="#ff140f"/><stop offset="1" stop-color="#ff0005"/></linearGradient><linearGradient id="i32"><stop offset="0" stop-color="#00ff67"/><stop offset="0.054" stop-color="#18ff69"/><stop offset="0.121" stop-color="#51ff6d"/><stop offset="0.183" stop-color="#9cff70"/><stop offset="0.245" stop-color="#fffe74"/><stop offset="0.288" stop-color="#ffbe5a"/><stop offset="0.34" stop-color="#ff8b44"/><stop offset="0.402" stop-color="#ff6233"/><stop offset="0.48" stop-color="#ff4024"/><stop offset="0.574" stop-color="#ff2719"/><stop offset="0.693" stop-color="#ff1410"/><stop offset="1" stop-color="#ff0005"/></linearGradient><linearGradient id="i33"><stop offset="0" stop-color="#00ff6a"/><stop offset="0.054" stop-color="#17ff6c"/><stop offset="0.122" stop-color="#51ff70"/><stop offset="0.184" stop-color="#9cff74"/><stop offset="0.246" stop-color="#fffe78"/><stop offset="0.289" stop-color="#ffbd5d"/><stop offset="0.341" stop-color="#ff8a46"/><stop offset="0.403" stop-color="#ff6134"/><stop offset="0.481" stop-color="#ff4026"/><stop offset="0.576" stop-color="#ff271a"/><stop offset="0.692" stop-color="#ff1411"/><stop offset="1" stop-color="#ff0006"/></linearGradient><linearGradient id="i34"><stop offset="0" stop-color="#00ff6d"/><stop offset="0.054" stop-color="#19ff6f"/><stop offset="0.122" stop-color="#54ff74"/><stop offset="0.182" stop-color="#9cff78"/><stop offset="0.245" stop-color="#fffd7c"/><stop offset="0.288" stop-color="#ffbd60"/><stop offset="0.34" stop-color="#ff8a49"/><stop offset="0.402" stop-color="#ff6136"/><stop offset="0.481" stop-color="#ff3f27"/><stop offset="0.576" stop-color="#ff261b"/><stop offset="0.693" stop-color="#ff1412"/><stop offset="1" stop-color="#ff0006"/></linearGradient><linearGradient id="i35"><stop offset="0" stop-color="#00ff70"/><stop offset="0.054" stop-color="#18ff73"/><stop offset="0.123" stop-color="#53ff77"/><stop offset="0.183" stop-color="#9cff7b"/><stop offset="0.245" stop-color="#fffd80"/><stop offset="0.289" stop-color="#ffbc63"/><stop offset="0.341" stop-color="#ff894b"/><stop offset="0.403" stop-color="#ff6038"/><stop offset="0.48" stop-color="#ff4029"/><stop offset="0.575" stop-color="#ff271d"/><stop offset="0.692" stop-color="#ff1413"/><stop offset="1" stop-color="#ff0007"/></linearGradient><linearGradient id="i36"><stop offset="0" stop-color="#00ff73"/><stop offset="0.052" stop-color="#16ff76"/><stop offset="0.121" stop-color="#50ff7a"/><stop offset="0.184" stop-color="#9cff7f"/><stop offset="0.247" stop-color="#fffc84"/><stop offset="0.29" stop-color="#ffbc66"/><stop offset="0.342" stop-color="#ff894d"/><stop offset="0.405" stop-color="#ff603a"/><stop offset="0.482" stop-color="#ff402a"/><stop offset="0.578" stop-color="#ff261e"/><stop offset="0.693" stop-color="#ff1414"/><stop offset="1" stop-color="#ff0007"/></linearGradient><linearGradient id="i37"><stop offset="0" stop-color="#00ff76"/><stop offset="0.052" stop-color="#16ff79"/><stop offset="0.121" stop-color="#50ff7e"/><stop offset="0.181" stop-color="#99ff83"/><stop offset="0.247" stop-color="#fffc88"/><stop offset="0.291" stop-color="#ffbb69"/><stop offset="0.343" stop-color="#ff8850"/><stop offset="0.407" stop-color="#ff5f3c"/><stop offset="0.484" stop-color="#ff3f2c"/><stop offset="0.58" stop-color="#ff261f"/><stop offset="0.695" stop-color="#ff1415"/><stop offset="1" stop-color="#ff0008"/></linearGradient><linearGradient id="i38"><stop offset="0" stop-color="#00ff79"/><stop offset="0.055" stop-color="#19ff7c"/><stop offset="0.122" stop-color="#53ff82"/><stop offset="0.182" stop-color="#9cff87"/><stop offset="0.246" stop-color="#fffb8c"/><stop offset="0.29" stop-color="#ffbb6c"/><stop offset="0.343" stop-color="#ff8852"/><stop offset="0.406" stop-color="#ff5f3e"/><stop offset="0.481" stop-color="#ff402e"/><stop offset="0.577" stop-color="#ff2620"/><stop offset="0.693" stop-color="#ff1416"/><stop offset="1" stop-color="#ff0008"/></linearGradient><linearGradient id="i39"><stop offset="0" stop-color="#00ff7c"/><stop offset="0.055" stop-color="#19ff80"/><stop offset="0.122" stop-color="#52ff85"/><stop offset="0.18" stop-color="#99ff8b"/><stop offset="0.247" stop-color="#fffb90"/><stop offset="0.291" stop-color="#ffba6f"/><stop offset="0.343" stop-color="#ff8755"/><stop offset="0.407" stop-color="#ff5e40"/><stop offset="0.482" stop-color="#ff3f2f"/><stop offset="0.576" stop-color="#ff2722"/><stop offset="0.693" stop-color="#ff1417"/><stop offset="1" stop-color="#ff0009"/></linearGradient><linearGradient id="i40"><stop offset="0" stop-color="#00ff7f"/><stop offset="0.053" stop-color="#17ff83"/><stop offset="0.122" stop-color="#52ff89"/><stop offset="0.186" stop-color="#a0ff8f"/><stop offset="0.244" stop-color="#feff96"/><stop offset="0.289" stop-color="#ffbd74"/><stop offset="0.342" stop-color="#ff8958"/><stop offset="0.406" stop-color="#ff5f42"/><stop offset="0.481" stop-color="#ff4031"/><stop offset="0.575" stop-color="#ff2723"/><stop offset="0.692" stop-color="#ff1418"/><stop offset="1" stop-color="#ff0009"/></linearGradient><linearGradient id="i41"><stop offset="0" stop-color="#00ff82"/><stop offset="0.053" stop-color="#17ff86"/><stop offset="0.123" stop-color="#52ff8d"/><stop offset="0.187" stop-color="#a0ff93"/><stop offset="0.245" stop-color="#ffff9b"/><stop offset="0.287" stop-color="#ffc079"/><stop offset="0.34" stop-color="#ff8b5c"/><stop offset="0.404" stop-color="#ff6045"/><stop offset="0.479" stop-color="#ff4033"/><stop offset="0.574" stop-color="#ff2724"/><stop offset="0.691" stop-color="#ff1419"/><stop offset="1" stop-color="#ff000a"/></linearGradient><linearGradient id="i42"><stop offset="0" stop-color="#00ff86"/><stop offset="0.056" stop-color="#1aff8a"/><stop offset="0.123" stop-color="#55ff91"/><stop offset="0.185" stop-color="#a0ff98"/><stop offset="0.244" stop-color="#ffff9f"/><stop offset="0.286" stop-color="#ffbf7c"/><stop offset="0.339" stop-color="#ff8a5f"/><stop offset="0.403" stop-color="#ff6047"/><stop offset="0.479" stop-color="#ff4035"/><stop offset="0.574" stop-color="#ff2726"/><stop offset="0.692" stop-color="#ff141a"/><stop offset="1" stop-color="#ff000a"/></linearGradient><linearGradient id="i43"><stop offset="0" stop-color="#00ff89"/><stop offset="0.053" stop-color="#18ff8e"/><stop offset="0.121" stop-color="#52ff94"/><stop offset="0.183" stop-color="#9dff9b"/><stop offset="0.244" stop-color="#fffea3"/><stop offset="0.287" stop-color="#ffbf80"/><stop offset="0.34" stop-color="#ff8961"/><stop offset="0.404" stop-color="#ff5f49"/><stop offset="0.48" stop-color="#ff4036"/><stop offset="0.576" stop-color="#ff2627"/><stop offset="0.691" stop-color="#ff141b"/><stop offset="1" stop-color="#ff000b"/></linearGradient><linearGradient id="i44"><stop offset="0" stop-color="#00ff8c"/><stop offset="0.054" stop-color="#17ff91"/><stop offset="0.121" stop-color="#51ff98"/><stop offset="0.184" stop-color="#9dffa0"/><stop offset="0.246" stop-color="#fffea8"/><stop offset="0.288" stop-color="#ffbe83"/><stop offset="0.342" stop-color="#ff8964"/><stop offset="0.404" stop-color="#ff604c"/><stop offset="0.48" stop-color="#ff4038"/><stop offset="0.576" stop-color="#ff2728"/><stop offset="0.692" stop-color="#ff141c"/><stop offset="1" stop-color="#ff000c"/></linearGradient><linearGradient id="i45"><stop offset="0" stop-color="#00ff90"/><stop offset="0.054" stop-color="#17ff95"/><stop offset="0.122" stop-color="#51ff9c"/><stop offset="0.184" stop-color="#9dffa4"/><stop offset="0.246" stop-color="#fffdac"/><stop offset="0.289" stop-color="#ffbe87"/><stop offset="0.343" stop-color="#ff8867"/><stop offset="0.405" stop-color="#ff604e"/><stop offset="0.482" stop-color="#ff403a"/><stop offset="0.578" stop-color="#ff262a"/><stop offset="0.694" stop-color="#ff141d"/><stop offset="1" stop-color="#ff000c"/></linearGradient><linearGradient id="i46"><stop offset="0" stop-color="#00ff93"/><stop offset="0.054" stop-color="#19ff99"/><stop offset="0.123" stop-color="#54ffa0"/><stop offset="0.182" stop-color="#9dffa8"/><stop offset="0.245" stop-color="#fffdb1"/><stop offset="0.288" stop-color="#ffbd8a"/><stop offset="0.342" stop-color="#ff8869"/><stop offset="0.405" stop-color="#ff6050"/><stop offset="0.481" stop-color="#ff3f3c"/><stop offset="0.575" stop-color="#ff272b"/><stop offset="0.692" stop-color="#ff141e"/><stop offset="1" stop-color="#ff000d"/></linearGradient><linearGradient id="i47"><stop offset="0" stop-color="#00ff97"/><stop offset="0.054" stop-color="#18ff9c"/><stop offset="0.12" stop-color="#51ffa4"/><stop offset="0.18" stop-color="#99ffad"/><stop offset="0.246" stop-color="#fffcb5"/><stop offset="0.289" stop-color="#ffbd8e"/><stop offset="0.34" stop-color="#ff8a6e"/><stop offset="0.403" stop-color="#ff6153"/><stop offset="0.48" stop-color="#ff403e"/><stop offset="0.574" stop-color="#ff272d"/><stop offset="0.691" stop-color="#ff141f"/><stop offset="1" stop-color="#ff000d"/></linearGradient><linearGradient id="i48"><stop offset="0" stop-color="#00ff9a"/><stop offset="0.054" stop-color="#18ffa0"/><stop offset="0.12" stop-color="#50ffa8"/><stop offset="0.181" stop-color="#99ffb1"/><stop offset="0.246" stop-color="#fffcba"/><stop offset="0.289" stop-color="#ffbc91"/><stop offset="0.341" stop-color="#ff8970"/><stop offset="0.404" stop-color="#ff6055"/><stop offset="0.481" stop-color="#ff4040"/><stop offset="0.576" stop-color="#ff272e"/><stop offset="0.693" stop-color="#ff1420"/><stop offset="1" stop-color="#ff000e"/></linearGradient><linearGradient id="i49"><stop offset="0" stop-color="#00ff9e"/><stop offset="0.052" stop-color="#16ffa4"/><stop offset="0.121" stop-color="#50ffac"/><stop offset="0.181" stop-color="#99ffb6"/><stop offset="0.247" stop-color="#fffbbe"/><stop offset="0.29" stop-color="#ffbc95"/><stop offset="0.342" stop-color="#ff8973"/><stop offset="0.405" stop-color="#ff6058"/><stop offset="0.483" stop-color="#ff3f41"/><stop offset="0.578" stop-color="#ff262f"/><stop offset="0.693" stop-color="#ff1422"/><stop offset="1" stop-color="#ff000f"/></linearGradient><linearGradient id="i50"><stop offset="0" stop-color="#00ffa1"/><stop offset="0.052" stop-color="#15ffa7"/><stop offset="0.121" stop-color="#50ffb1"/><stop offset="0.182" stop-color="#99ffba"/><stop offset="0.248" stop-color="#fffbc3"/><stop offset="0.291" stop-color="#ffbb99"/><stop offset="0.343" stop-color="#ff8876"/><stop offset="0.406" stop-color="#ff5f5a"/><stop offset="0.484" stop-color="#ff3f43"/><stop offset="0.579" stop-color="#ff2631"/><stop offset="0.695" stop-color="#ff1323"/><stop offset="1" stop-color="#ff000f"/></linearGradient><linearGradient id="i51"><stop offset="0" stop-color="#00ffa5"/><stop offset="0.055" stop-color="#19ffac"/><stop offset="0.122" stop-color="#53ffb5"/><stop offset="0.186" stop-color="#a1ffc0"/><stop offset="0.244" stop-color="#ffffcb"/><stop offset="0.288" stop-color="#ffbe9f"/><stop offset="0.34" stop-color="#ff8a7b"/><stop offset="0.404" stop-color="#ff605d"/><stop offset="0.48" stop-color="#ff4046"/><stop offset="0.576" stop-color="#ff2733"/><stop offset="0.692" stop-color="#ff1424"/><stop offset="1" stop-color="#ff0010"/></linearGradient><linearGradient id="i52"><stop offset="0" stop-color="#00ffa9"/><stop offset="0.055" stop-color="#19ffb0"/><stop offset="0.122" stop-color="#52ffba"/><stop offset="0.187" stop-color="#a1ffc5"/><stop offset="0.245" stop-color="#ffffd0"/><stop offset="0.289" stop-color="#ffbda2"/><stop offset="0.341" stop-color="#ff897d"/><stop offset="0.405" stop-color="#ff605f"/><stop offset="0.481" stop-color="#ff4048"/><stop offset="0.574" stop-color="#ff2735"/><stop offset="0.691" stop-color="#ff1425"/><stop offset="1" stop-color="#ff0011"/></linearGradient><linearGradient id="i53"><stop offset="0" stop-color="#00ffad"/><stop offset="0.056" stop-color="#18ffb4"/><stop offset="0.123" stop-color="#52ffbe"/><stop offset="0.184" stop-color="#9dffc9"/><stop offset="0.246" stop-color="#fffed5"/><stop offset="0.289" stop-color="#ffbda6"/><stop offset="0.339" stop-color="#ff8b82"/><stop offset="0.404" stop-color="#ff6163"/><stop offset="0.48" stop-color="#ff404a"/><stop offset="0.573" stop-color="#ff2737"/><stop offset="0.69" stop-color="#ff1427"/><stop offset="1" stop-color="#ff0012"/></linearGradient><linearGradient id="i54"><stop offset="0" stop-color="#00ffb1"/><stop offset="0.053" stop-color="#16ffb8"/><stop offset="0.123" stop-color="#52ffc3"/><stop offset="0.185" stop-color="#9dffce"/><stop offset="0.246" stop-color="#fffeda"/><stop offset="0.29" stop-color="#ffbcaa"/><stop offset="0.34" stop-color="#ff8b85"/><stop offset="0.405" stop-color="#ff6065"/><stop offset="0.481" stop-color="#ff404c"/><stop offset="0.575" stop-color="#ff2738"/><stop offset="0.692" stop-color="#ff1428"/><stop offset="1" stop-color="#ff0012"/></linearGradient><linearGradient id="i55"><stop offset="0" stop-color="#00ffb5"/><stop offset="0.053" stop-color="#18ffbc"/><stop offset="0.121" stop-color="#52ffc7"/><stop offset="0.183" stop-color="#9dffd3"/><stop offset="0.245" stop-color="#fffddf"/><stop offset="0.289" stop-color="#ffbcae"/><stop offset="0.339" stop-color="#ff8a88"/><stop offset="0.404" stop-color="#ff6067"/><stop offset="0.481" stop-color="#ff404e"/><stop offset="0.575" stop-color="#ff2739"/><stop offset="0.693" stop-color="#ff1429"/><stop offset="1" stop-color="#ff0013"/></linearGradient><linearGradient id="i56"><stop offset="0" stop-color="#00ffb9"/><stop offset="0.053" stop-color="#17ffc0"/><stop offset="0.121" stop-color="#52ffcc"/><stop offset="0.183" stop-color="#9dffd8"/><stop offset="0.246" stop-color="#fffde4"/><stop offset="0.29" stop-color="#ffbbb2"/><stop offset="0.34" stop-color="#ff8a8b"/><stop offset="0.405" stop-color="#ff5f6a"/><stop offset="0.482" stop-color="#ff3f50"/><stop offset="0.577" stop-color="#ff263b"/><stop offset="0.692" stop-color="#ff142a"/><stop offset="1" stop-color="#ff0014"/></linearGradient><linearGradient id="i57"><stop offset="0" stop-color="#00ffbc"/><stop offset="0.053" stop-color="#17ffc5"/><stop offset="0.122" stop-color="#51ffd0"/><stop offset="0.184" stop-color="#9dffdd"/><stop offset="0.246" stop-color="#fffcea"/><stop offset="0.291" stop-color="#ffbbb6"/><stop offset="0.341" stop-color="#ff898e"/><stop offset="0.404" stop-color="#ff606e"/><stop offset="0.481" stop-color="#ff4052"/><stop offset="0.576" stop-color="#ff273d"/><stop offset="0.691" stop-color="#ff142c"/><stop offset="1" stop-color="#ff0015"/></linearGradient><linearGradient id="i58"><stop offset="0" stop-color="#00ffc0"/><stop offset="0.054" stop-color="#17ffc9"/><stop offset="0.122" stop-color="#51ffd5"/><stop offset="0.182" stop-color="#99ffe2"/><stop offset="0.248" stop-color="#fffcef"/><stop offset="0.293" stop-color="#ffbaba"/><stop offset="0.343" stop-color="#ff8992"/><stop offset="0.406" stop-color="#ff6070"/><stop offset="0.484" stop-color="#ff3f54"/><stop offset="0.579" stop-color="#ff263e"/><stop offset="0.696" stop-color="#ff142d"/><stop offset="1" stop-color="#ff0015"/></linearGradient><linearGradient id="i59"><stop offset="0" stop-color="#00ffc5"/><stop offset="0.054" stop-color="#18ffce"/><stop offset="0.12" stop-color="#51ffda"/><stop offset="0.18" stop-color="#99ffe7"/><stop offset="0.246" stop-color="#fffbf4"/><stop offset="0.291" stop-color="#ffbabe"/><stop offset="0.342" stop-color="#ff8895"/><stop offset="0.405" stop-color="#ff5f72"/><stop offset="0.48" stop-color="#ff4057"/><stop offset="0.574" stop-color="#ff2741"/><stop offset="0.691" stop-color="#ff142f"/><stop offset="1" stop-color="#ff0016"/></linearGradient><linearGradient id="i60"><stop offset="0" stop-color="#00ffc9"/><stop offset="0.054" stop-color="#18ffd2"/><stop offset="0.12" stop-color="#51ffdf"/><stop offset="0.181" stop-color="#99ffec"/><stop offset="0.247" stop-color="#fffbf9"/><stop offset="0.292" stop-color="#ffb9c2"/><stop offset="0.343" stop-color="#ff8798"/><stop offset="0.407" stop-color="#ff5f75"/><stop offset="0.482" stop-color="#ff3f59"/><stop offset="0.575" stop-color="#ff2742"/><stop offset="0.693" stop-color="#ff1430"/><stop offset="1" stop-color="#ff0017"/></linearGradient><linearGradient id="i61"><stop offset="0" stop-color="#00ffcd"/><stop offset="0.054" stop-color="#18ffd6"/><stop offset="0.121" stop-color="#50ffe3"/><stop offset="0.181" stop-color="#99fff1"/><stop offset="0.248" stop-color="#fffaff"/><stop offset="0.293" stop-color="#ffb8c6"/><stop offset="0.344" stop-color="#ff879b"/><stop offset="0.408" stop-color="#ff5e77"/><stop offset="0.483" stop-color="#ff3f5b"/><stop offset="0.577" stop-color="#ff2644"/><stop offset="0.695" stop-color="#ff1431"/><stop offset="1" stop-color="#ff0018"/></linearGradient><linearGradient id="i62"><stop offset="0" stop-color="#00ffd1"/><stop offset="0.052" stop-color="#15ffda"/><stop offset="0.118" stop-color="#4dffe8"/><stop offset="0.173" stop-color="#8dfff5"/><stop offset="0.212" stop-color="#c6ffff"/><stop offset="0.252" stop-color="#fef4ff"/><stop offset="0.297" stop-color="#ffb4c8"/><stop offset="0.348" stop-color="#ff849c"/><stop offset="0.412" stop-color="#ff5c79"/><stop offset="0.488" stop-color="#ff3e5c"/><stop offset="0.582" stop-color="#ff2545"/><stop offset="0.697" stop-color="#ff1332"/><stop offset="1" stop-color="#ff0019"/></linearGradient><linearGradient id="i63"><stop offset="0" stop-color="#00ffd6"/><stop offset="0.049" stop-color="#15ffdf"/><stop offset="0.113" stop-color="#4affec"/><stop offset="0.189" stop-color="#a6ffff"/><stop offset="0.256" stop-color="#ffeafc"/><stop offset="0.302" stop-color="#ffadc6"/><stop offset="0.354" stop-color="#ff7f9c"/><stop offset="0.418" stop-color="#ff5978"/><stop offset="0.494" stop-color="#ff3b5c"/><stop offset="0.701" stop-color="#ff1333"/><stop offset="1" stop-color="#ff0019"/></linearGradient><linearGradient id="i64"><stop offset="0" stop-color="#00ffda"/><stop offset="0.049" stop-color="#15ffe3"/><stop offset="0.11" stop-color="#46fff0"/><stop offset="0.171" stop-color="#8cfeff"/><stop offset="0.26" stop-color="#ffe4fd"/><stop offset="0.306" stop-color="#ffa9c7"/><stop offset="0.358" stop-color="#ff7c9d"/><stop offset="0.419" stop-color="#ff587b"/><stop offset="0.495" stop-color="#ff3b5e"/><stop offset="0.703" stop-color="#ff1234"/><stop offset="1" stop-color="#ff001a"/></linearGradient><linearGradient id="i65"><stop offset="0" stop-color="#00ffdf"/><stop offset="0.046" stop-color="#12ffe7"/><stop offset="0.107" stop-color="#43fff5"/><stop offset="0.15" stop-color="#71ffff"/><stop offset="0.264" stop-color="#ffdffe"/><stop offset="0.31" stop-color="#ffa5c8"/><stop offset="0.362" stop-color="#ff799e"/><stop offset="0.423" stop-color="#ff567c"/><stop offset="0.5" stop-color="#ff395f"/><stop offset="0.709" stop-color="#ff1235"/><stop offset="1" stop-color="#ff001b"/></linearGradient><linearGradient id="i66"><stop offset="0" stop-color="#00ffe3"/><stop offset="0.046" stop-color="#12ffec"/><stop offset="0.105" stop-color="#40fff9"/><stop offset="0.188" stop-color="#98f0ff"/><stop offset="0.269" stop-color="#ffdafe"/><stop offset="0.315" stop-color="#ffa2c9"/><stop offset="0.367" stop-color="#ff779f"/><stop offset="0.429" stop-color="#ff547d"/><stop offset="0.506" stop-color="#ff3860"/><stop offset="0.71" stop-color="#ff1236"/><stop offset="1" stop-color="#ff001c"/></linearGradient><linearGradient id="i67"><stop offset="0" stop-color="#00ffe8"/><stop offset="0.053" stop-color="#18fff3"/><stop offset="0.121" stop-color="#51fbff"/><stop offset="0.196" stop-color="#a0e8ff"/><stop offset="0.27" stop-color="#ffd5ff"/><stop offset="0.314" stop-color="#ffa1cd"/><stop offset="0.366" stop-color="#ff76a2"/><stop offset="0.429" stop-color="#ff547f"/><stop offset="0.506" stop-color="#ff3862"/><stop offset="0.711" stop-color="#ff1237"/><stop offset="1" stop-color="#ff001d"/></linearGradient><linearGradient id="i68"><stop offset="0" stop-color="#00ffec"/><stop offset="0.05" stop-color="#15fff7"/><stop offset="0.121" stop-color="#4ff6ff"/><stop offset="0.19" stop-color="#95e5ff"/><stop offset="0.277" stop-color="#ffccfc"/><stop offset="0.321" stop-color="#ff9bcb"/><stop offset="0.374" stop-color="#ff72a1"/><stop offset="0.436" stop-color="#ff517f"/><stop offset="0.514" stop-color="#ff3662"/><stop offset="0.717" stop-color="#ff1138"/><stop offset="1" stop-color="#ff001e"/></linearGradient><linearGradient id="i69"><stop offset="0" stop-color="#00fff1"/><stop offset="0.047" stop-color="#13fffb"/><stop offset="0.122" stop-color="#4df1ff"/><stop offset="0.194" stop-color="#96dfff"/><stop offset="0.281" stop-color="#ffc7fd"/><stop offset="0.325" stop-color="#ff97cc"/><stop offset="0.378" stop-color="#ff6fa2"/><stop offset="0.441" stop-color="#ff4f80"/><stop offset="0.519" stop-color="#ff3463"/><stop offset="0.722" stop-color="#ff1039"/><stop offset="1" stop-color="#ff001f"/></linearGradient><linearGradient id="i70"><stop offset="0" stop-color="#00fff6"/><stop offset="0.05" stop-color="#14fdff"/><stop offset="0.125" stop-color="#4eecff"/><stop offset="0.201" stop-color="#9ad9ff"/><stop offset="0.285" stop-color="#ffc2fd"/><stop offset="0.329" stop-color="#ff94cd"/><stop offset="0.382" stop-color="#ff6da3"/><stop offset="0.445" stop-color="#ff4d81"/><stop offset="0.52" stop-color="#ff3465"/><stop offset="0.721" stop-color="#ff103a"/><stop offset="1" stop-color="#ff0020"/></linearGradient><linearGradient id="i71"><stop offset="0" stop-color="#00fffa"/><stop offset="0.05" stop-color="#14f8ff"/><stop offset="0.126" stop-color="#4ce7ff"/><stop offset="0.204" stop-color="#9ad4ff"/><stop offset="0.289" stop-color="#ffbefe"/><stop offset="0.333" stop-color="#ff90ce"/><stop offset="0.387" stop-color="#ff6aa4"/><stop offset="0.45" stop-color="#ff4b82"/><stop offset="0.525" stop-color="#ff3366"/><stop offset="0.72" stop-color="#ff113c"/><stop offset="1" stop-color="#ff0021"/></linearGradient><linearGradient id="i72"><stop offset="0" stop-color="#00feff"/><stop offset="0.054" stop-color="#17f2ff"/><stop offset="0.13" stop-color="#50e1ff"/><stop offset="0.209" stop-color="#9eceff"/><stop offset="0.291" stop-color="#ffb9ff"/><stop offset="0.335" stop-color="#ff8dcf"/><stop offset="0.389" stop-color="#ff68a5"/><stop offset="0.453" stop-color="#ff4a83"/><stop offset="0.528" stop-color="#ff3167"/><stop offset="0.722" stop-color="#ff103d"/><stop offset="1" stop-color="#ff0022"/></linearGradient><linearGradient id="i73"><stop offset="0" stop-color="#00faff"/><stop offset="0.054" stop-color="#16eeff"/><stop offset="0.134" stop-color="#51dcff"/><stop offset="0.213" stop-color="#9ec9ff"/><stop offset="0.296" stop-color="#feb5ff"/><stop offset="0.344" stop-color="#ff87cd"/><stop offset="0.395" stop-color="#ff65a6"/><stop offset="0.459" stop-color="#ff4884"/><stop offset="0.532" stop-color="#ff3169"/><stop offset="0.726" stop-color="#ff103f"/><stop offset="1" stop-color="#ff0023"/></linearGradient><linearGradient id="i74"><stop offset="0" stop-color="#00f5ff"/><stop offset="0.054" stop-color="#15e9ff"/><stop offset="0.131" stop-color="#4dd8ff"/><stop offset="0.211" stop-color="#98c5ff"/><stop offset="0.304" stop-color="#ffadfc"/><stop offset="0.348" stop-color="#ff84ce"/><stop offset="0.403" stop-color="#ff61a5"/><stop offset="0.466" stop-color="#ff4584"/><stop offset="0.54" stop-color="#ff2f69"/><stop offset="0.732" stop-color="#ff0f3f"/><stop offset="1" stop-color="#ff0024"/></linearGradient><linearGradient id="i75"><stop offset="0" stop-color="#00f1ff"/><stop offset="0.054" stop-color="#14e5ff"/><stop offset="0.135" stop-color="#4ed3ff"/><stop offset="0.215" stop-color="#98c1ff"/><stop offset="0.308" stop-color="#ffa9fd"/><stop offset="0.353" stop-color="#ff81cf"/><stop offset="0.407" stop-color="#ff5fa6"/><stop offset="0.468" stop-color="#ff4586"/><stop offset="0.542" stop-color="#ff2f6b"/><stop offset="0.731" stop-color="#ff1041"/><stop offset="1" stop-color="#ff0025"/></linearGradient><linearGradient id="i76"><stop offset="0" stop-color="#00ecff"/><stop offset="0.058" stop-color="#17dfff"/><stop offset="0.139" stop-color="#51ceff"/><stop offset="0.219" stop-color="#9cbbff"/><stop offset="0.31" stop-color="#ffa5fe"/><stop offset="0.355" stop-color="#ff7ed0"/><stop offset="0.41" stop-color="#ff5da7"/><stop offset="0.471" stop-color="#ff4387"/><stop offset="0.545" stop-color="#ff2d6c"/><stop offset="0.735" stop-color="#ff0f42"/><stop offset="1" stop-color="#ff0026"/></linearGradient><linearGradient id="i77"><stop offset="0" stop-color="#00e7ff"/><stop offset="0.058" stop-color="#17dbff"/><stop offset="0.139" stop-color="#4fcaff"/><stop offset="0.223" stop-color="#9cb7ff"/><stop offset="0.314" stop-color="#ffa1fe"/><stop offset="0.359" stop-color="#ff7bd0"/><stop offset="0.414" stop-color="#ff5ba8"/><stop offset="0.476" stop-color="#ff4188"/><stop offset="0.55" stop-color="#ff2c6c"/><stop offset="0.738" stop-color="#ff0f43"/><stop offset="1" stop-color="#ff0027"/></linearGradient><linearGradient id="i78"><stop offset="0" stop-color="#00e3ff"/><stop offset="0.058" stop-color="#16d7ff"/><stop offset="0.143" stop-color="#50c5ff"/><stop offset="0.231" stop-color="#9fb2ff"/><stop offset="0.318" stop-color="#ff9eff"/><stop offset="0.364" stop-color="#ff79d1"/><stop offset="0.419" stop-color="#ff59a9"/><stop offset="0.552" stop-color="#ff2c6e"/><stop offset="0.74" stop-color="#ff0e44"/><stop offset="1" stop-color="#ff0028"/></linearGradient><linearGradient id="i79"><stop offset="0" stop-color="#00dfff"/><stop offset="0.055" stop-color="#13d4ff"/><stop offset="0.14" stop-color="#4cc2ff"/><stop offset="0.225" stop-color="#96b0ff"/><stop offset="0.326" stop-color="#ff97fc"/><stop offset="0.371" stop-color="#ff74cf"/><stop offset="0.427" stop-color="#ff55a8"/><stop offset="0.56" stop-color="#ff2a6e"/><stop offset="0.746" stop-color="#ff0e45"/><stop offset="1" stop-color="#ff0029"/></linearGradient><linearGradient id="i80"><stop offset="0" stop-color="#00dbff"/><stop offset="0.059" stop-color="#16cfff"/><stop offset="0.145" stop-color="#50bdff"/><stop offset="0.23" stop-color="#9aabff"/><stop offset="0.329" stop-color="#ff93fd"/><stop offset="0.375" stop-color="#ff71d0"/><stop offset="0.428" stop-color="#ff55ab"/><stop offset="0.562" stop-color="#ff2970"/><stop offset="0.747" stop-color="#ff0e47"/><stop offset="1" stop-color="#ff002a"/></linearGradient><linearGradient id="i81"><stop offset="0" stop-color="#00d7ff"/><stop offset="0.059" stop-color="#16cbff"/><stop offset="0.149" stop-color="#50b9ff"/><stop offset="0.234" stop-color="#9aa6ff"/><stop offset="0.333" stop-color="#ff90fd"/><stop offset="0.38" stop-color="#ff6ed1"/><stop offset="0.432" stop-color="#ff53ac"/><stop offset="0.568" stop-color="#ff2871"/><stop offset="0.749" stop-color="#ff0e48"/><stop offset="1" stop-color="#ff002b"/></linearGradient><linearGradient id="i82"><stop offset="0" stop-color="#00d3ff"/><stop offset="0.06" stop-color="#15c7ff"/><stop offset="0.149" stop-color="#4fb5ff"/><stop offset="0.238" stop-color="#9aa2ff"/><stop offset="0.338" stop-color="#ff8dfe"/><stop offset="0.384" stop-color="#ff6cd2"/><stop offset="0.437" stop-color="#ff51ad"/><stop offset="0.57" stop-color="#ff2873"/><stop offset="0.752" stop-color="#ff0d49"/><stop offset="1" stop-color="#ff002c"/></linearGradient><linearGradient id="i83"><stop offset="0" stop-color="#00cfff"/><stop offset="0.063" stop-color="#16c3ff"/><stop offset="0.153" stop-color="#50b1ff"/><stop offset="0.246" stop-color="#9e9eff"/><stop offset="0.342" stop-color="#ff89ff"/><stop offset="0.389" stop-color="#ff69d3"/><stop offset="0.442" stop-color="#ff4fae"/><stop offset="0.575" stop-color="#ff2774"/><stop offset="0.754" stop-color="#ff0d4b"/><stop offset="1" stop-color="#ff002d"/></linearGradient><linearGradient id="i84"><stop offset="0" stop-color="#00cbff"/><stop offset="0.064" stop-color="#17bfff"/><stop offset="0.154" stop-color="#51adff"/><stop offset="0.247" stop-color="#9e9aff"/><stop offset="0.344" stop-color="#ff86ff"/><stop offset="0.391" stop-color="#ff67d4"/><stop offset="0.445" stop-color="#ff4daf"/><stop offset="0.579" stop-color="#ff2675"/><stop offset="0.756" stop-color="#ff0d4c"/><stop offset="1" stop-color="#ff002f"/></linearGradient><linearGradient id="i85"><stop offset="0" stop-color="#00c8ff"/><stop offset="0.064" stop-color="#16bcff"/><stop offset="0.154" stop-color="#4faaff"/><stop offset="0.245" stop-color="#9898ff"/><stop offset="0.352" stop-color="#ff80fd"/><stop offset="0.399" stop-color="#ff62d2"/><stop offset="0.453" stop-color="#ff4aae"/><stop offset="0.584" stop-color="#ff2576"/><stop offset="0.762" stop-color="#ff0c4d"/><stop offset="1" stop-color="#ff0030"/></linearGradient><linearGradient id="i86"><stop offset="0" stop-color="#00c4ff"/><stop offset="0.064" stop-color="#16b8ff"/><stop offset="0.158" stop-color="#50a6ff"/><stop offset="0.253" stop-color="#9b93ff"/><stop offset="0.357" stop-color="#ff7dfd"/><stop offset="0.404" stop-color="#ff60d3"/><stop offset="0.458" stop-color="#ff48af"/><stop offset="0.589" stop-color="#ff2477"/><stop offset="0.764" stop-color="#ff0c4e"/><stop offset="1" stop-color="#ff0031"/></linearGradient><linearGradient id="i87"><stop offset="0" stop-color="#00c1ff"/><stop offset="0.064" stop-color="#15b5ff"/><stop offset="0.159" stop-color="#4ea3ff"/><stop offset="0.257" stop-color="#9c90ff"/><stop offset="0.361" stop-color="#ff7afe"/><stop offset="0.409" stop-color="#ff5ed4"/><stop offset="0.459" stop-color="#ff47b2"/><stop offset="0.591" stop-color="#ff2378"/><stop offset="0.767" stop-color="#ff0c4f"/><stop offset="1" stop-color="#ff0032"/></linearGradient><linearGradient id="i88"><stop offset="0" stop-color="#00bdff"/><stop offset="0.068" stop-color="#18b1ff"/><stop offset="0.164" stop-color="#529fff"/><stop offset="0.263" stop-color="#9f8cff"/><stop offset="0.365" stop-color="#ff77ff"/><stop offset="0.413" stop-color="#ff5cd4"/><stop offset="0.464" stop-color="#ff46b2"/><stop offset="0.594" stop-color="#ff237a"/><stop offset="0.768" stop-color="#ff0c51"/><stop offset="1" stop-color="#ff0034"/></linearGradient><linearGradient id="i89"><stop offset="0" stop-color="#00baff"/><stop offset="0.068" stop-color="#17aeff"/><stop offset="0.164" stop-color="#509cff"/><stop offset="0.267" stop-color="#9f88ff"/><stop offset="0.37" stop-color="#ff74ff"/><stop offset="0.418" stop-color="#ff59d5"/><stop offset="0.469" stop-color="#ff44b3"/><stop offset="0.599" stop-color="#ff227b"/><stop offset="0.771" stop-color="#ff0c52"/><stop offset="1" stop-color="#ff0035"/></linearGradient><linearGradient id="i90"><stop offset="0" stop-color="#00b7ff"/><stop offset="0.069" stop-color="#16abff"/><stop offset="0.168" stop-color="#5198ff"/><stop offset="0.271" stop-color="#9f85ff"/><stop offset="0.375" stop-color="#fe71ff"/><stop offset="0.474" stop-color="#ff42b4"/><stop offset="0.605" stop-color="#ff217c"/><stop offset="0.773" stop-color="#ff0b54"/><stop offset="1" stop-color="#ff0036"/></linearGradient><linearGradient id="i91"><stop offset="0" stop-color="#00b4ff"/><stop offset="0.069" stop-color="#16a8ff"/><stop offset="0.169" stop-color="#4f96ff"/><stop offset="0.269" stop-color="#9a83ff"/><stop offset="0.383" stop-color="#ff6dfd"/><stop offset="0.431" stop-color="#ff53d4"/><stop offset="0.483" stop-color="#ff3fb3"/><stop offset="0.61" stop-color="#ff207d"/><stop offset="0.779" stop-color="#ff0b55"/><stop offset="1" stop-color="#ff0037"/></linearGradient><linearGradient id="i92"><stop offset="0" stop-color="#00b1ff"/><stop offset="0.069" stop-color="#15a5ff"/><stop offset="0.17" stop-color="#4e93ff"/><stop offset="0.273" stop-color="#9a80ff"/><stop offset="0.388" stop-color="#ff6afe"/><stop offset="0.484" stop-color="#ff3fb6"/><stop offset="0.612" stop-color="#ff207f"/><stop offset="0.779" stop-color="#ff0b57"/><stop offset="1" stop-color="#ff0039"/></linearGradient><linearGradient id="i93"><stop offset="0" stop-color="#00adff"/><stop offset="0.073" stop-color="#18a1ff"/><stop offset="0.174" stop-color="#518fff"/><stop offset="0.279" stop-color="#9d7cff"/><stop offset="0.39" stop-color="#ff67fe"/><stop offset="0.488" stop-color="#ff3db7"/><stop offset="0.617" stop-color="#ff1f80"/><stop offset="0.784" stop-color="#ff0a57"/><stop offset="1" stop-color="#ff003a"/></linearGradient><linearGradient id="i94"><stop offset="0" stop-color="#00abff"/><stop offset="0.073" stop-color="#179eff"/><stop offset="0.178" stop-color="#528cff"/><stop offset="0.287" stop-color="#a079ff"/><stop offset="0.395" stop-color="#ff65ff"/><stop offset="0.493" stop-color="#ff3cb8"/><stop offset="0.619" stop-color="#ff1e82"/><stop offset="0.783" stop-color="#ff0a59"/><stop offset="1" stop-color="#ff003b"/></linearGradient><linearGradient id="i95"><stop offset="0" stop-color="#00a8ff"/><stop offset="0.074" stop-color="#169bff"/><stop offset="0.18" stop-color="#5089ff"/><stop offset="0.289" stop-color="#9e76ff"/><stop offset="0.401" stop-color="#ff62ff"/><stop offset="0.5" stop-color="#ff3ab8"/><stop offset="0.627" stop-color="#ff1d83"/><stop offset="0.789" stop-color="#ff0a5b"/><stop offset="1" stop-color="#ff003d"/></linearGradient><linearGradient id="i96"><stop offset="0" stop-color="#00a5ff"/><stop offset="0.074" stop-color="#1699ff"/><stop offset="0.18" stop-color="#4f87ff"/><stop offset="0.286" stop-color="#9975ff"/><stop offset="0.41" stop-color="#ff5efd"/><stop offset="0.509" stop-color="#ff37b7"/><stop offset="0.633" stop-color="#ff1c83"/><stop offset="0.792" stop-color="#ff0a5c"/><stop offset="1" stop-color="#ff003e"/></linearGradient><linearGradient id="i97"><stop offset="0" stop-color="#00a2ff"/><stop offset="0.075" stop-color="#1796ff"/><stop offset="0.181" stop-color="#5084ff"/><stop offset="0.292" stop-color="#9c71ff"/><stop offset="0.413" stop-color="#ff5cfd"/><stop offset="0.509" stop-color="#ff37ba"/><stop offset="0.633" stop-color="#ff1c85"/><stop offset="0.794" stop-color="#ff0a5d"/><stop offset="1" stop-color="#ff0040"/></linearGradient><linearGradient id="i98"><stop offset="0" stop-color="#009fff"/><stop offset="0.075" stop-color="#1693ff"/><stop offset="0.186" stop-color="#5081ff"/><stop offset="0.296" stop-color="#9c6eff"/><stop offset="0.418" stop-color="#ff59fe"/><stop offset="0.514" stop-color="#ff35bb"/><stop offset="0.639" stop-color="#ff1b86"/><stop offset="0.796" stop-color="#ff095f"/><stop offset="1" stop-color="#ff0041"/></linearGradient><linearGradient id="i99"><stop offset="0" stop-color="#009dff"/><stop offset="0.079" stop-color="#1790ff"/><stop offset="0.19" stop-color="#517eff"/><stop offset="0.305" stop-color="#9f6bff"/><stop offset="0.423" stop-color="#ff57ff"/><stop offset="0.52" stop-color="#ff34bc"/><stop offset="0.642" stop-color="#ff1b88"/><stop offset="0.799" stop-color="#ff0960"/><stop offset="1" stop-color="#ff0042"/></linearGradient><linearGradient id="i100"><stop offset="0" stop-color="#009aff"/><stop offset="0.079" stop-color="#168eff"/><stop offset="0.191" stop-color="#507cff"/><stop offset="0.309" stop-color="#9f68ff"/><stop offset="0.428" stop-color="#ff55ff"/><stop offset="0.525" stop-color="#ff33bc"/><stop offset="0.647" stop-color="#ff1a89"/><stop offset="0.802" stop-color="#ff0962"/><stop offset="1" stop-color="#ff0044"/></linearGradient><linearGradient id="i101"><stop offset="0" stop-color="#0097ff"/><stop offset="0.083" stop-color="#198aff"/><stop offset="0.196" stop-color="#5378ff"/><stop offset="0.312" stop-color="#9f66ff"/><stop offset="0.431" stop-color="#fe52ff"/><stop offset="0.529" stop-color="#ff31bd"/><stop offset="0.652" stop-color="#ff198a"/><stop offset="0.804" stop-color="#ff0963"/><stop offset="1" stop-color="#ff0045"/></linearGradient><linearGradient id="i102"><stop offset="0" stop-color="#0095ff"/><stop offset="0.08" stop-color="#1788ff"/><stop offset="0.193" stop-color="#4f77ff"/><stop offset="0.31" stop-color="#9a64ff"/><stop offset="0.442" stop-color="#ff4ffd"/><stop offset="0.536" stop-color="#ff30be"/><stop offset="0.657" stop-color="#ff198c"/><stop offset="0.807" stop-color="#ff0965"/><stop offset="1" stop-color="#ff0047"/></linearGradient><linearGradient id="i103"><stop offset="0" stop-color="#0092ff"/><stop offset="0.081" stop-color="#1686ff"/><stop offset="0.198" stop-color="#5074ff"/><stop offset="0.315" stop-color="#9b62ff"/><stop offset="0.447" stop-color="#ff4dfe"/><stop offset="0.542" stop-color="#ff2ebf"/><stop offset="0.663" stop-color="#ff188c"/><stop offset="0.813" stop-color="#ff0866"/><stop offset="1" stop-color="#ff0049"/></linearGradient><linearGradient id="i104"><stop offset="0" stop-color="#0090ff"/><stop offset="0.085" stop-color="#1783ff"/><stop offset="0.202" stop-color="#5172ff"/><stop offset="0.324" stop-color="#9d5fff"/><stop offset="0.452" stop-color="#ff4bfe"/><stop offset="0.548" stop-color="#ff2dbf"/><stop offset="0.665" stop-color="#ff178e"/><stop offset="0.812" stop-color="#ff0868"/><stop offset="1" stop-color="#ff004a"/></linearGradient><linearGradient id="i105"><stop offset="0" stop-color="#008dff"/><stop offset="0.085" stop-color="#1881ff"/><stop offset="0.204" stop-color="#516fff"/><stop offset="0.326" stop-color="#9e5dff"/><stop offset="0.456" stop-color="#ff49ff"/><stop offset="0.552" stop-color="#ff2cc0"/><stop offset="0.67" stop-color="#ff178f"/><stop offset="0.819" stop-color="#ff0869"/><stop offset="1" stop-color="#ff004c"/></linearGradient><linearGradient id="i106"><stop offset="0" stop-color="#008bff"/><stop offset="0.086" stop-color="#177fff"/><stop offset="0.208" stop-color="#526dff"/><stop offset="0.335" stop-color="#a05aff"/><stop offset="0.461" stop-color="#ff47ff"/><stop offset="0.558" stop-color="#ff2ac1"/><stop offset="0.673" stop-color="#ff1691"/><stop offset="0.818" stop-color="#ff086b"/><stop offset="1" stop-color="#ff004d"/></linearGradient><linearGradient id="i107"><stop offset="0" stop-color="#0089ff"/><stop offset="0.086" stop-color="#177dff"/><stop offset="0.209" stop-color="#516bff"/><stop offset="0.336" stop-color="#9e58ff"/><stop offset="0.466" stop-color="#fe45ff"/><stop offset="0.563" stop-color="#ff29c2"/><stop offset="0.679" stop-color="#ff1592"/><stop offset="0.821" stop-color="#ff086d"/><stop offset="1" stop-color="#ff004f"/></linearGradient><linearGradient id="i108"><stop offset="0" stop-color="#0087ff"/><stop offset="0.086" stop-color="#167bff"/><stop offset="0.21" stop-color="#4f69ff"/><stop offset="0.337" stop-color="#9c56ff"/><stop offset="0.476" stop-color="#ff42fd"/><stop offset="0.569" stop-color="#ff28c2"/><stop offset="0.685" stop-color="#ff1593"/><stop offset="0.828" stop-color="#ff076d"/><stop offset="1" stop-color="#ff0051"/></linearGradient><linearGradient id="i109"><stop offset="0" stop-color="#0084ff"/><stop offset="0.091" stop-color="#1878ff"/><stop offset="0.215" stop-color="#5266ff"/><stop offset="0.343" stop-color="#9e54ff"/><stop offset="0.479" stop-color="#ff40fe"/><stop offset="0.574" stop-color="#ff27c3"/><stop offset="0.687" stop-color="#ff1495"/><stop offset="0.826" stop-color="#ff0770"/><stop offset="1" stop-color="#ff0052"/></linearGradient><linearGradient id="i110"><stop offset="0" stop-color="#0082ff"/><stop offset="0.091" stop-color="#1876ff"/><stop offset="0.217" stop-color="#5164ff"/><stop offset="0.35" stop-color="#9f51ff"/><stop offset="0.487" stop-color="#ff3eff"/><stop offset="0.578" stop-color="#ff26c6"/><stop offset="0.692" stop-color="#ff1497"/><stop offset="0.829" stop-color="#ff0772"/><stop offset="1" stop-color="#ff0054"/></linearGradient><linearGradient id="i111"><stop offset="0" stop-color="#0080ff"/><stop offset="0.092" stop-color="#1774ff"/><stop offset="0.221" stop-color="#5162ff"/><stop offset="0.355" stop-color="#9f4fff"/><stop offset="0.492" stop-color="#ff3cff"/><stop offset="0.584" stop-color="#ff25c6"/><stop offset="0.698" stop-color="#ff1397"/><stop offset="0.836" stop-color="#ff0773"/><stop offset="1" stop-color="#ff0056"/></linearGradient><linearGradient id="i112"><stop offset="0" stop-color="#007eff"/><stop offset="0.092" stop-color="#1772ff"/><stop offset="0.222" stop-color="#5060ff"/><stop offset="0.36" stop-color="#9f4dff"/><stop offset="0.498" stop-color="#fe3aff"/><stop offset="0.59" stop-color="#ff24c7"/><stop offset="0.701" stop-color="#ff1399"/><stop offset="0.835" stop-color="#ff0775"/><stop offset="1" stop-color="#ff0058"/></linearGradient><linearGradient id="i113"><stop offset="0" stop-color="#007cff"/><stop offset="0.093" stop-color="#186fff"/><stop offset="0.224" stop-color="#515eff"/><stop offset="0.355" stop-color="#9b4cff"/><stop offset="0.506" stop-color="#ff38fd"/><stop offset="0.598" stop-color="#ff22c6"/><stop offset="0.707" stop-color="#ff129a"/><stop offset="0.838" stop-color="#ff0677"/><stop offset="1" stop-color="#ff0059"/></linearGradient><linearGradient id="i114"><stop offset="0" stop-color="#007aff"/><stop offset="0.097" stop-color="#186dff"/><stop offset="0.229" stop-color="#525cff"/><stop offset="0.364" stop-color="#9d4aff"/><stop offset="0.512" stop-color="#ff36fe"/><stop offset="0.601" stop-color="#ff21c8"/><stop offset="0.709" stop-color="#ff129c"/><stop offset="0.841" stop-color="#ff0678"/><stop offset="1" stop-color="#ff005b"/></linearGradient><linearGradient id="i115"><stop offset="0" stop-color="#0078ff"/><stop offset="0.093" stop-color="#176cff"/><stop offset="0.23" stop-color="#505aff"/><stop offset="0.37" stop-color="#9d48ff"/><stop offset="0.518" stop-color="#ff34fe"/><stop offset="0.607" stop-color="#ff20c9"/><stop offset="0.716" stop-color="#ff119d"/><stop offset="0.844" stop-color="#ff067a"/><stop offset="1" stop-color="#ff005d"/></linearGradient><linearGradient id="i116"><stop offset="0" stop-color="#0076ff"/><stop offset="0.098" stop-color="#176aff"/><stop offset="0.234" stop-color="#5158ff"/><stop offset="0.375" stop-color="#9e46ff"/><stop offset="0.523" stop-color="#ff33ff"/><stop offset="0.613" stop-color="#ff1fca"/><stop offset="0.719" stop-color="#ff119f"/><stop offset="0.848" stop-color="#ff067b"/><stop offset="1" stop-color="#ff005f"/></linearGradient><linearGradient id="i117"><stop offset="0" stop-color="#0074ff"/><stop offset="0.098" stop-color="#1768ff"/><stop offset="0.236" stop-color="#5057ff"/><stop offset="0.382" stop-color="#9e44ff"/><stop offset="0.531" stop-color="#ff31ff"/><stop offset="0.622" stop-color="#ff1eca"/><stop offset="0.724" stop-color="#ff10a1"/><stop offset="0.85" stop-color="#ff067e"/><stop offset="1" stop-color="#ff0061"/></linearGradient><linearGradient id="i118"><stop offset="0" stop-color="#0072ff"/><stop offset="0.103" stop-color="#1965ff"/><stop offset="0.242" stop-color="#5254ff"/><stop offset="0.389" stop-color="#a042ff"/><stop offset="0.536" stop-color="#fe30ff"/><stop offset="0.627" stop-color="#ff1dcb"/><stop offset="0.73" stop-color="#ff0fa2"/><stop offset="0.853" stop-color="#ff067f"/><stop offset="1" stop-color="#ff0063"/></linearGradient><linearGradient id="i119"><stop offset="0" stop-color="#0070ff"/><stop offset="0.1" stop-color="#1764ff"/><stop offset="0.243" stop-color="#5153ff"/><stop offset="0.386" stop-color="#9c41ff"/><stop offset="0.546" stop-color="#ff2dfe"/><stop offset="0.633" stop-color="#ff1ccc"/><stop offset="0.733" stop-color="#ff0fa4"/><stop offset="0.857" stop-color="#ff0581"/><stop offset="1" stop-color="#ff0065"/></linearGradient><linearGradient id="i120"><stop offset="0" stop-color="#006fff"/><stop offset="0.1" stop-color="#1763ff"/><stop offset="0.244" stop-color="#5051ff"/><stop offset="0.392" stop-color="#9c3fff"/><stop offset="0.552" stop-color="#ff2cfe"/><stop offset="0.64" stop-color="#ff1bcc"/><stop offset="0.74" stop-color="#ff0ea4"/><stop offset="0.86" stop-color="#ff0583"/><stop offset="1" stop-color="#ff0067"/></linearGradient><linearGradient id="i121"><stop offset="0" stop-color="#006dff"/><stop offset="0.104" stop-color="#1761ff"/><stop offset="0.249" stop-color="#504fff"/><stop offset="0.402" stop-color="#9f3dff"/><stop offset="0.558" stop-color="#ff2aff"/><stop offset="0.643" stop-color="#ff1bcf"/><stop offset="0.743" stop-color="#ff0ea6"/><stop offset="0.859" stop-color="#ff0585"/><stop offset="1" stop-color="#ff0069"/></linearGradient><linearGradient id="i122"><stop offset="0" stop-color="#006bff"/><stop offset="0.105" stop-color="#185fff"/><stop offset="0.255" stop-color="#534dff"/><stop offset="0.409" stop-color="#a13bff"/><stop offset="0.563" stop-color="#ff29ff"/><stop offset="0.648" stop-color="#ff1acf"/><stop offset="0.745" stop-color="#ff0ea8"/><stop offset="0.862" stop-color="#ff0587"/><stop offset="1" stop-color="#ff006b"/></linearGradient><linearGradient id="i123"><stop offset="0" stop-color="#0069ff"/><stop offset="0.106" stop-color="#185dff"/><stop offset="0.256" stop-color="#524cff"/><stop offset="0.411" stop-color="#9f3aff"/><stop offset="0.569" stop-color="#fe28ff"/><stop offset="0.654" stop-color="#ff19d0"/><stop offset="0.752" stop-color="#ff0da9"/><stop offset="0.866" stop-color="#ff0588"/><stop offset="1" stop-color="#ff006d"/></linearGradient><linearGradient id="i124"><stop offset="0" stop-color="#0068ff"/><stop offset="0.107" stop-color="#175cff"/><stop offset="0.258" stop-color="#514aff"/><stop offset="0.418" stop-color="#9f38ff"/><stop offset="0.578" stop-color="#fe26ff"/><stop offset="0.664" stop-color="#ff18d1"/><stop offset="0.758" stop-color="#ff0dab"/><stop offset="1" stop-color="#ff0070"/></linearGradient><linearGradient id="i125"><stop offset="0" stop-color="#0066ff"/><stop offset="0.107" stop-color="#175aff"/><stop offset="0.263" stop-color="#5149ff"/><stop offset="0.42" stop-color="#9d37ff"/><stop offset="0.588" stop-color="#ff24fe"/><stop offset="0.671" stop-color="#ff17d1"/><stop offset="0.765" stop-color="#ff0cac"/><stop offset="1" stop-color="#ff0072"/></linearGradient><linearGradient id="i126"><stop offset="0" stop-color="#0064ff"/><stop offset="0.112" stop-color="#1958ff"/><stop offset="0.266" stop-color="#5247ff"/><stop offset="0.423" stop-color="#9d35ff"/><stop offset="0.593" stop-color="#ff23fe"/><stop offset="0.672" stop-color="#ff16d4"/><stop offset="0.768" stop-color="#ff0cae"/><stop offset="1" stop-color="#ff0074"/></linearGradient><linearGradient id="i127"><stop offset="0" stop-color="#0063ff"/><stop offset="0.113" stop-color="#1856ff"/><stop offset="0.271" stop-color="#5245ff"/><stop offset="0.433" stop-color="#a033ff"/><stop offset="0.6" stop-color="#ff22ff"/><stop offset="0.679" stop-color="#ff15d4"/><stop offset="0.771" stop-color="#ff0cb0"/><stop offset="1" stop-color="#ff0076"/></linearGradient><linearGradient id="i128"><stop offset="0" stop-color="#0060ff"/><stop offset="0.113" stop-color="#1754ff"/><stop offset="0.272" stop-color="#5143ff"/><stop offset="0.435" stop-color="#9d32ff"/><stop offset="0.611" stop-color="#ff20fe"/><stop offset="0.69" stop-color="#ff14d4"/><stop offset="0.778" stop-color="#ff0bb2"/><stop offset="1" stop-color="#ff0079"/></linearGradient><linearGradient id="i129"><stop offset="0" stop-color="#005dff"/><stop offset="0.119" stop-color="#1951ff"/><stop offset="0.28" stop-color="#5240ff"/><stop offset="0.449" stop-color="#9f2fff"/><stop offset="0.623" stop-color="#ff1dff"/><stop offset="0.699" stop-color="#ff12d7"/><stop offset="0.788" stop-color="#ff0ab4"/><stop offset="1" stop-color="#ff007d"/></linearGradient><linearGradient id="i130"><stop offset="0" stop-color="#005aff"/><stop offset="0.12" stop-color="#184eff"/><stop offset="0.288" stop-color="#513dff"/><stop offset="0.464" stop-color="#a02cff"/><stop offset="0.639" stop-color="#fe1bff"/><stop offset="0.798" stop-color="#ff09b8"/><stop offset="1" stop-color="#ff0083"/></linearGradient><linearGradient id="i131"><stop offset="0" stop-color="#0057ff"/><stop offset="0.126" stop-color="#194bff"/><stop offset="0.296" stop-color="#533aff"/><stop offset="0.47" stop-color="#9e2aff"/><stop offset="0.657" stop-color="#ff18fe"/><stop offset="0.809" stop-color="#ff08bb"/><stop offset="1" stop-color="#ff0088"/></linearGradient><linearGradient id="i132"><stop offset="0" stop-color="#0055ff"/><stop offset="0.127" stop-color="#1849ff"/><stop offset="0.303" stop-color="#5238ff"/><stop offset="0.487" stop-color="#a027ff"/><stop offset="0.671" stop-color="#ff16ff"/><stop offset="0.82" stop-color="#ff07be"/><stop offset="1" stop-color="#ff008d"/></linearGradient><linearGradient id="i133"><stop offset="0" stop-color="#0052ff"/><stop offset="0.124" stop-color="#1647ff"/><stop offset="0.305" stop-color="#5036ff"/><stop offset="0.491" stop-color="#9d25ff"/><stop offset="0.69" stop-color="#ff14fe"/><stop offset="0.827" stop-color="#ff07c2"/><stop offset="1" stop-color="#ff0092"/></linearGradient><linearGradient id="i134"><stop offset="0" stop-color="#004fff"/><stop offset="0.135" stop-color="#1943ff"/><stop offset="0.32" stop-color="#5333ff"/><stop offset="0.509" stop-color="#9f22ff"/><stop offset="0.707" stop-color="#ff12ff"/><stop offset="0.838" stop-color="#ff06c6"/><stop offset="1" stop-color="#ff0098"/></linearGradient><linearGradient id="i135"><stop offset="0" stop-color="#004dff"/><stop offset="0.132" stop-color="#1742ff"/><stop offset="0.323" stop-color="#5131ff"/><stop offset="0.523" stop-color="#9f20ff"/><stop offset="0.723" stop-color="#fe10ff"/><stop offset="0.85" stop-color="#ff06c9"/><stop offset="1" stop-color="#ff009e"/></linearGradient><linearGradient id="i136"><stop offset="0" stop-color="#004aff"/><stop offset="0.138" stop-color="#183fff"/><stop offset="0.332" stop-color="#522eff"/><stop offset="0.535" stop-color="#a01eff"/><stop offset="0.737" stop-color="#fe0eff"/><stop offset="0.862" stop-color="#ff05cc"/><stop offset="1" stop-color="#ff00a3"/></linearGradient><linearGradient id="i137"><stop offset="0" stop-color="#0048ff"/><stop offset="0.14" stop-color="#173dff"/><stop offset="0.34" stop-color="#512cff"/><stop offset="0.544" stop-color="#9e1cff"/><stop offset="0.758" stop-color="#ff0cff"/><stop offset="0.87" stop-color="#ff04d0"/><stop offset="1" stop-color="#ff00a9"/></linearGradient><linearGradient id="i138"><stop offset="0" stop-color="#0046ff"/><stop offset="0.147" stop-color="#183aff"/><stop offset="0.351" stop-color="#522aff"/><stop offset="0.564" stop-color="#a01aff"/><stop offset="0.777" stop-color="#fe0bff"/><stop offset="0.886" stop-color="#ff04d3"/><stop offset="1" stop-color="#ff00b0"/></linearGradient><linearGradient id="i139"><stop offset="0" stop-color="#0044ff"/><stop offset="0.148" stop-color="#1738ff"/><stop offset="0.359" stop-color="#5228ff"/><stop offset="0.574" stop-color="#9f18ff"/><stop offset="0.794" stop-color="#fd09ff"/><stop offset="1" stop-color="#ff00b6"/></linearGradient><linearGradient id="i140"><stop offset="0" stop-color="#0041ff"/><stop offset="0.155" stop-color="#1936ff"/><stop offset="0.369" stop-color="#5326ff"/><stop offset="0.592" stop-color="#a116ff"/><stop offset="0.816" stop-color="#ff08ff"/><stop offset="1" stop-color="#ff00bd"/></linearGradient><linearGradient id="i141"><stop offset="0" stop-color="#0040ff"/><stop offset="0.158" stop-color="#1834ff"/><stop offset="0.379" stop-color="#5224ff"/><stop offset="0.606" stop-color="#9f14ff"/><stop offset="0.837" stop-color="#fe06ff"/><stop offset="1" stop-color="#ff00c5"/></linearGradient><linearGradient id="i142"><stop offset="0" stop-color="#003dff"/><stop offset="0.16" stop-color="#1832ff"/><stop offset="0.385" stop-color="#5222ff"/><stop offset="0.62" stop-color="#a013ff"/><stop offset="0.855" stop-color="#fd05ff"/><stop offset="1" stop-color="#ff00cc"/></linearGradient><linearGradient id="i143"><stop offset="0" stop-color="#003cff"/><stop offset="0.167" stop-color="#1830ff"/><stop offset="0.394" stop-color="#5121ff"/><stop offset="0.636" stop-color="#a011ff"/><stop offset="0.879" stop-color="#ff04ff"/><stop offset="1" stop-color="#ff00d3"/></linearGradient><linearGradient id="i144"><stop offset="0" stop-color="#0039ff"/><stop offset="0.169" stop-color="#182eff"/><stop offset="0.405" stop-color="#521fff"/><stop offset="0.651" stop-color="#a00fff"/><stop offset="0.897" stop-color="#fe03ff"/><stop offset="1" stop-color="#ff00db"/></linearGradient><linearGradient id="i145"><stop offset="0" stop-color="#0038ff"/><stop offset="0.141" stop-color="#122fff"/><stop offset="0.344" stop-color="#3f22ff"/><stop offset="0.63" stop-color="#9310ff"/><stop offset="0.922" stop-color="#fd02ff"/><stop offset="1" stop-color="#ff00e4"/></linearGradient><linearGradient id="i146"><stop offset="0" stop-color="#0036ff"/><stop offset="0.159" stop-color="#152cff"/><stop offset="0.376" stop-color="#451eff"/><stop offset="0.656" stop-color="#960eff"/><stop offset="0.947" stop-color="#ff01ff"/><stop offset="1" stop-color="#ff00ec"/></linearGradient><linearGradient id="i147"><stop offset="0" stop-color="#0034ff"/><stop offset="0.171" stop-color="#162aff"/><stop offset="0.406" stop-color="#4a1cff"/><stop offset="0.684" stop-color="#9a0cff"/><stop offset="0.968" stop-color="#fe00ff"/><stop offset="1" stop-color="#ff00f4"/></linearGradient><linearGradient id="i148"><stop offset="0" stop-color="#0032ff"/><stop offset="0.19" stop-color="#1927ff"/><stop offset="0.446" stop-color="#5218ff"/><stop offset="0.701" stop-color="#9b0bff"/><stop offset="1" stop-color="#ff00fd"/></linearGradient><linearGradient id="i149"><stop offset="0" stop-color="#0031ff"/><stop offset="0.188" stop-color="#1726ff"/><stop offset="0.453" stop-color="#5017ff"/><stop offset="0.724" stop-color="#9b0aff"/><stop offset="1" stop-color="#f600ff"/></linearGradient><linearGradient id="i150"><stop offset="0" stop-color="#002fff"/><stop offset="0.191" stop-color="#1824ff"/><stop offset="0.449" stop-color="#4d17ff"/><stop offset="0.719" stop-color="#9509ff"/><stop offset="1" stop-color="#ee00ff"/></linearGradient><linearGradient id="i151"><stop offset="0" stop-color="#002eff"/><stop offset="0.188" stop-color="#1623ff"/><stop offset="0.449" stop-color="#4a16ff"/><stop offset="0.722" stop-color="#9009ff"/><stop offset="1" stop-color="#e600ff"/></linearGradient><linearGradient id="i152"><stop offset="0" stop-color="#002cff"/><stop offset="0.186" stop-color="#1522ff"/><stop offset="0.448" stop-color="#4715ff"/><stop offset="0.721" stop-color="#8a09ff"/><stop offset="1" stop-color="#dc00ff"/></linearGradient><linearGradient id="i153"><stop offset="0" stop-color="#002bff"/><stop offset="0.188" stop-color="#1421ff"/><stop offset="0.447" stop-color="#4414ff"/><stop offset="0.718" stop-color="#8509ff"/><stop offset="1" stop-color="#d500ff"/></linearGradient><linearGradient id="i154"><stop offset="0" stop-color="#0029ff"/><stop offset="0.185" stop-color="#1320ff"/><stop offset="0.446" stop-color="#4214ff"/><stop offset="0.72" stop-color="#8108ff"/><stop offset="1" stop-color="#cd00ff"/></linearGradient><linearGradient id="i155"><stop offset="0" stop-color="#0028ff"/><stop offset="0.182" stop-color="#121fff"/><stop offset="0.442" stop-color="#3f13ff"/><stop offset="0.715" stop-color="#7b08ff"/><stop offset="1" stop-color="#c600ff"/></linearGradient><linearGradient id="i156"><stop offset="0" stop-color="#0027ff"/><stop offset="0.185" stop-color="#121eff"/><stop offset="0.444" stop-color="#3d13ff"/><stop offset="0.716" stop-color="#7608ff"/><stop offset="1" stop-color="#be00ff"/></linearGradient><linearGradient id="i157"><stop offset="0" stop-color="#0025ff"/><stop offset="0.182" stop-color="#111dff"/><stop offset="0.44" stop-color="#3a12ff"/><stop offset="0.717" stop-color="#7207ff"/><stop offset="1" stop-color="#b700ff"/></linearGradient><linearGradient id="i158"><stop offset="0" stop-color="#0024ff"/><stop offset="0.178" stop-color="#101cff"/><stop offset="0.439" stop-color="#3811ff"/><stop offset="0.713" stop-color="#6d07ff"/><stop offset="1" stop-color="#b100ff"/></linearGradient><linearGradient id="i159"><stop offset="0" stop-color="#0022ff"/><stop offset="0.182" stop-color="#101bff"/><stop offset="0.442" stop-color="#3610ff"/><stop offset="1" stop-color="#aa00ff"/></linearGradient><linearGradient id="i160"><stop offset="0" stop-color="#0020ff"/><stop offset="0.181" stop-color="#0f19ff"/><stop offset="0.443" stop-color="#330fff"/><stop offset="1" stop-color="#9f00ff"/></linearGradient><linearGradient id="i161"><stop offset="0" stop-color="#001fff"/><stop offset="0.178" stop-color="#0d18ff"/><stop offset="0.438" stop-color="#300fff"/><stop offset="1" stop-color="#9700ff"/></linearGradient><linearGradient id="i162"><stop offset="0" stop-color="#001dff"/><stop offset="0.177" stop-color="#0d17ff"/><stop offset="0.433" stop-color="#2c0eff"/><stop offset="1" stop-color="#8d00ff"/></linearGradient><linearGradient id="i163"><stop offset="0" stop-color="#001bff"/><stop offset="0.175" stop-color="#0c15ff"/><stop offset="0.438" stop-color="#2a0dff"/><stop offset="1" stop-color="#8500ff"/></linearGradient><linearGradient id="i164"><stop offset="0" stop-color="#001aff"/><stop offset="0.429" stop-color="#260dff"/><stop offset="1" stop-color="#7d00ff"/></linearGradient><linearGradient id="i165"><stop offset="0" stop-color="#0018ff"/><stop offset="0.426" stop-color="#240cff"/><stop offset="1" stop-color="#7500ff"/></linearGradient><linearGradient id="i166"><stop offset="0" stop-color="#0016ff"/><stop offset="0.427" stop-color="#210bff"/><stop offset="1" stop-color="#6c00ff"/></linearGradient><linearGradient id="i167"><stop offset="0" stop-color="#0015ff"/><stop offset="0.424" stop-color="#1e0aff"/><stop offset="1" stop-color="#6300ff"/></linearGradient><linearGradient id="i168"><stop offset="0" stop-color="#0013ff"/><stop offset="0.42" stop-color="#1b09ff"/><stop offset="1" stop-color="#5a00ff"/></linearGradient><linearGradient id="i169"><stop offset="0" stop-color="#0011ff"/><stop offset="0.421" stop-color="#1908ff"/><stop offset="1" stop-color="#5300ff"/></linearGradient><linearGradient id="i170"><stop offset="0" stop-color="#0010ff"/><stop offset="0.416" stop-color="#1608ff"/><stop offset="1" stop-color="#4b00ff"/></linearGradient><linearGradient id="i171"><stop offset="0" stop-color="#000eff"/><stop offset="0.417" stop-color="#1407ff"/><stop offset="1" stop-color="#4400ff"/></linearGradient><linearGradient id="i172"><stop offset="0" stop-color="#000dff"/><stop offset="0.422" stop-color="#1306ff"/><stop offset="1" stop-color="#3d00ff"/></linearGradient><linearGradient id="i173"><stop offset="0" stop-color="#000cff"/><stop offset="0.412" stop-color="#1006ff"/><stop offset="1" stop-color="#3700ff"/></linearGradient><linearGradient id="i174"><stop offset="0" stop-color="#000aff"/><stop offset="0.418" stop-color="#0f05ff"/><stop offset="1" stop-color="#3100ff"/></linearGradient><linearGradient id="i175"><stop offset="0" stop-color="#0009ff"/><stop offset="0.405" stop-color="#0d05ff"/><stop offset="1" stop-color="#2c00ff"/></linearGradient><linearGradient id="i176"><stop offset="0" stop-color="#0008ff"/><stop offset="1" stop-color="#2700ff"/></linearGradient><linearGradient id="i177"><stop offset="0" stop-color="#0007ff"/><stop offset="1" stop-color="#2200ff"/></linearGradient><linearGradient id="i178"><stop offset="0" stop-color="#0006ff"/><stop offset="1" stop-color="#1d00ff"/></linearGradient><linearGradient id="i179"><stop offset="0" stop-color="#0005ff"/><stop offset="1" stop-color="#1900ff"/></linearGradient><linearGradient id="i180"><stop offset="0" stop-color="#0005ff"/><stop offset="1" stop-color="#1500ff"/></linearGradient><linearGradient id="i181"><stop offset="0" stop-color="#0004ff"/><stop offset="1" stop-color="#1100ff"/></linearGradient><linearGradient id="i182"><stop offset="0" stop-color="#0003ff"/><stop offset="1" stop-color="#0e00ff"/></linearGradient><linearGradient id="i183"><stop offset="0" stop-color="#0002ff"/><stop offset="1" stop-color="#0b00ff"/></linearGradient><linearGradient id="i184"><stop offset="0" stop-color="#0002ff"/><stop offset="1" stop-color="#0800ff"/></linearGradient><linearGradient id="i185"><stop offset="0" stop-color="#0001ff"/><stop offset="1" stop-color="#0500ff"/></linearGradient><linearGradient id="i186"><stop offset="0" stop-color="#0001ff"/><stop offset="1" stop-color="#0300ff"/></linearGradient><linearGradient id="i187"><stop offset="0" stop-color="#0000ff"/><stop offset="1" stop-color="#0100ff"/></linearGradient><clipPath id="cloc"><path d="M1209.2 504.0 L1209.2 504.0 L1209.1 504.0 L1209.1 504.0 L1209.1 504.0 L1209.0 504.0 L1209.0 504.0 L1208.9 504.1 L1208.9 504.1 L1208.8 504.2 L1208.8 504.2 L1208.7 504.2 L1208.7 504.2 L1208.6 504.2 L1208.5 504.2 L1208.5 504.2 L1208.4 504.3 L1208.3 504.3 L1208.2 504.4 L1208.2 504.5 L1208.1 504.5 L1208.0 504.5 L1207.9 504.5 L1207.8 504.5 L1207.7 504.5 L1207.6 504.5 L1207.5 504.5 L1207.3 504.5 L1207.2 504.5 L1207.1 504.5 L1206.9 504.5 L1206.8 504.5 L1206.6 504.5 L1206.5 504.6 L1206.3 504.5 L1206.1 504.5 L1205.8 504.4 L1205.6 504.3 L1205.3 504.2 L1205.0 504.0 L1204.6 503.8 L1204.1 503.5 L1203.7 503.2 L1203.1 502.8 L1202.6 502.5 L1202.0 502.0 L1201.4 501.6 L1200.7 501.1 L1200.0 500.6 L1199.3 500.0 L1198.5 499.4 L1197.6 498.7 L1196.6 497.9 L1195.6 497.1 L1194.6 496.2 L1193.4 495.3 L1192.3 494.3 L1191.1 493.3 L1189.8 492.2 L1188.5 491.1 L1187.1 489.9 L1185.6 488.7 L1184.1 487.4 L1182.5 486.1 L1180.8 484.7 L1179.0 483.2 L1177.1 481.7 L1175.1 480.0 L1172.9 478.3 L1170.7 476.5 L1168.4 474.6 L1166.1 472.7 L1163.6 470.7 L1161.1 468.6 L1158.5 466.4 L1155.7 464.0 L1152.8 461.5 L1149.8 458.9 L1146.7 456.1 L1143.4 453.1 L1140.1 449.9 L1136.6 446.6 L1133.1 443.2 L1129.4 439.6 L1125.5 435.5 L1121.3 430.9 L1116.8 425.8 L1112.0 420.3 L1107.0 414.3 L1101.8 407.9 L1096.4 401.0 L1090.9 393.7 L1085.1 385.9 L1079.2 377.7 L1073.1 369.1 L1067.0 360.1 L1060.8 350.6 L1054.4 340.6 L1047.9 330.3 L1041.5 319.8 L1035.1 309.2 L1028.8 298.4 L1022.5 287.3 L1016.2 276.2 L1010.1 265.1 L1004.4 254.1 L999.1 243.3 L994.0 232.4 L989.2 221.7 L984.7 211.3 L980.5 201.3 L976.6 191.6 L973.0 182.3 L969.8 173.3 L966.8 164.7 L964.2 156.7 L961.9 149.2 L960.0 142.1 L958.3 135.5 L956.9 129.4 L955.8 123.6 L954.9 118.2 L954.2 113.3 L953.9 108.7 L953.7 104.5 L953.7 100.5 L954.0 96.8 L954.4 93.4 L955.1 90.2 L955.9 87.3 L956.9 84.7 L958.1 82.2 L959.5 80.0 L961.1 78.0 L962.8 76.2 L964.6 74.6 L966.5 73.2 L968.6 72.0 L970.8 71.1 L973.1 70.2 L975.4 69.5 L977.9 68.9 L980.4 68.4 L983.0 68.1 L985.6 67.8 L988.3 67.6 L991.1 67.4 L993.8 67.2 L996.7 67.2 L999.5 67.1 L1002.4 67.1 L1005.2 67.1 L1008.0 67.1 L1010.9 67.1 L1013.8 67.2 L1016.7 67.3 L1019.6 67.4 L1022.5 67.5 L1025.5 67.6 L1028.5 67.8 L1031.5 68.0 L1034.7 68.2 L1037.8 68.4 L1041.0 68.6 L1044.3 68.9 L1047.6 69.1 L1051.0 69.4 L1054.4 69.7 L1057.9 70.0 L1061.4 70.3 L1065.0 70.7 L1068.7 71.0 L1072.5 71.4 L1076.3 71.8 L1080.2 72.2 L1084.2 72.6 L1088.3 73.0 L1092.4 73.5 L1096.7 73.9 L1101.0 74.4 L1105.4 74.9 L1110.0 75.4 L1114.6 75.9 L1119.3 76.4 L1124.0 77.0 L1128.9 77.5 L1133.9 78.1 L1139.0 78.6 L1144.2 79.2 L1149.5 79.8 L1155.0 80.4 L1160.5 81.1 L1166.1 81.7 L1171.8 82.3 L1177.6 83.0 L1183.5 83.7 L1189.6 84.4 L1195.7 85.1 L1201.9 85.8 L1208.3 86.5 L1214.7 87.3 L1221.3 88.0 L1227.9 88.8 L1234.6 89.5 L1241.5 90.3 L1248.3 91.1 L1255.3 91.9 L1262.4 92.7 L1269.5 93.5 L1276.7 94.4 L1283.9 95.2 L1291.2 96.0 L1298.5 96.9 L1305.9 97.7 L1313.2 98.5 L1320.5 99.4 L1327.6 100.2 L1334.8 101.0 L1341.8 101.8 L1348.9 102.6 L1355.9 103.4 L1362.9 104.2 L1369.9 105.0 L1376.9 105.8 L1383.7 106.6 L1390.4 107.4 L1396.9 108.1 L1403.3 108.8 L1409.5 109.6 L1415.6 110.2 L1421.6 110.9 L1427.4 111.6 L1433.1 112.2 L1438.6 112.9 L1444.0 113.5 L1449.2 114.1 L1454.2 114.7 L1459.1 115.2 L1463.8 115.8 L1468.3 116.3 L1472.7 116.8 L1476.9 117.3 L1481.0 117.7 L1484.9 118.2 L1488.7 118.6 L1492.4 119.0 L1495.9 119.4 L1499.3 119.8 L1502.6 120.2 L1505.8 120.6 L1509.0 120.9 L1512.0 121.3 L1515.0 121.6 L1517.9 122.0 L1520.7 122.3 L1523.4 122.6 L1526.0 122.9 L1528.5 123.2 L1530.9 123.5 L1533.3 123.7 L1535.5 124.0 L1537.7 124.2 L1539.7 124.5 L1541.7 124.7 L1543.6 124.9 L1545.3 125.1 L1547.0 125.3 L1548.6 125.5 L1550.2 125.6 L1551.6 125.8 L1553.0 126.0 L1554.3 126.1 L1555.5 126.3 L1556.7 126.4 L1557.9 126.5 L1558.9 126.7 L1559.9 126.8 L1560.9 126.9 L1561.8 127.0 L1562.6 127.1 L1563.4 127.2 L1564.0 127.2 L1564.7 127.3 L1565.2 127.4 L1565.7 127.4 L1566.3 127.5 L1566.7 127.6 L1567.2 127.6 L1567.6 127.7 L1568.1 127.7 L1568.6 127.8 L1569.3 127.8 L1570.1 127.9 L1570.8 128.0 L1571.6 128.1 L1572.4 128.2 L1573.2 128.3 L1574.0 128.4 L1574.7 128.5 L1575.4 128.5 L1575.9 128.6 Z"/></clipPath><clipPath id="ctri"><path d="M1448.8 112.9 L1050.9 72.8 L1127.8 395.4 Z"/></clipPath><clipPath id="cplot"><rect x="952.3" y="56.5" width="600.2" height="461.6"/></clipPath></defs>
<path d="M910.8 28.3 H1562 V551.3 H910.8 Z M917.4 35.1 V544.8 H1555.3 V35.1 Z" fill="#c4c400" fill-rule="evenodd" stroke="#2e2e00" stroke-width=".9"/>
<text x="1196.62" y="52" font-size="12.9" textLength="79.56" lengthAdjust="spacingAndGlyphs" fill="#d6d6d6" stroke="#d6d6d6" stroke-width="0.2">CIE 1976 u'v'</text>
<rect x="952.3" y="56.6" width="600.2" height="461.5" fill="#242424"/>
<g clip-path="url(#cplot)"><g clip-path="url(#cloc)"><rect x="970" y="67" width="95" height="4.6" fill="url(#o0)"/><rect x="963" y="71" width="141" height="4.6" fill="url(#o1)"/><rect x="959" y="75" width="181" height="4.6" fill="url(#o2)"/><rect x="956" y="79" width="219" height="4.6" fill="url(#o3)"/><rect x="954" y="83" width="256" height="4.6" fill="url(#o4)"/><rect x="953" y="87" width="292" height="4.6" fill="url(#o5)"/><rect x="952" y="91" width="319" height="3.6" fill="url(#o6)"/><rect x="952" y="94" width="345" height="3.6" fill="url(#o7)"/><rect x="952" y="97" width="372" height="3.6" fill="url(#o8)"/><rect x="952" y="100" width="398" height="3.6" fill="url(#o9)"/><rect x="952" y="103" width="415" height="2.6" fill="url(#o10)"/><rect x="952" y="105" width="433" height="2.6" fill="url(#o11)"/><rect x="952" y="107" width="450" height="2.6" fill="url(#o12)"/><rect x="952" y="109" width="468" height="2.6" fill="url(#o13)"/><rect x="952" y="111" width="485" height="2.6" fill="url(#o14)"/><rect x="952" y="113" width="503" height="2.6" fill="url(#o15)"/><rect x="953" y="115" width="519" height="2.6" fill="url(#o16)"/><rect x="953" y="117" width="537" height="2.6" fill="url(#o17)"/><rect x="953" y="119" width="554" height="2.6" fill="url(#o18)"/><rect x="953" y="121" width="572" height="2.6" fill="url(#o19)"/><rect x="954" y="123" width="588" height="2.6" fill="url(#o20)"/><rect x="954" y="125" width="599" height="2.6" fill="url(#o21)"/><rect x="955" y="127" width="598" height="2.6" fill="url(#o22)"/><rect x="955" y="129" width="598" height="2.6" fill="url(#o23)"/><rect x="955" y="131" width="598" height="2.6" fill="url(#o24)"/><rect x="956" y="133" width="597" height="2.6" fill="url(#o25)"/><rect x="956" y="135" width="597" height="2.6" fill="url(#o26)"/><rect x="957" y="137" width="596" height="2.6" fill="url(#o27)"/><rect x="957" y="139" width="596" height="2.6" fill="url(#o28)"/><rect x="958" y="141" width="595" height="2.6" fill="url(#o29)"/><rect x="958" y="143" width="595" height="2.6" fill="url(#o30)"/><rect x="959" y="145" width="594" height="1.6" fill="url(#o31)"/><rect x="959" y="146" width="594" height="1.6" fill="url(#o32)"/><rect x="959" y="147" width="594" height="1.6" fill="url(#o33)"/><rect x="960" y="148" width="593" height="1.6" fill="url(#o34)"/><rect x="960" y="149" width="593" height="1.6" fill="url(#o35)"/><rect x="960" y="150" width="593" height="1.6" fill="url(#o36)"/><rect x="961" y="151" width="592" height="1.6" fill="url(#o37)"/><rect x="961" y="152" width="592" height="1.6" fill="url(#o38)"/><rect x="961" y="153" width="592" height="1.6" fill="url(#o39)"/><rect x="962" y="154" width="591" height="1.6" fill="url(#o40)"/><rect x="962" y="155" width="590" height="1.6" fill="url(#o41)"/><rect x="962" y="156" width="589" height="1.6" fill="url(#o42)"/><rect x="962" y="157" width="588" height="1.6" fill="url(#o43)"/><rect x="963" y="158" width="586" height="1.6" fill="url(#o44)"/><rect x="963" y="159" width="585" height="1.6" fill="url(#o45)"/><rect x="963" y="160" width="584" height="1.6" fill="url(#o46)"/><rect x="964" y="161" width="582" height="1.6" fill="url(#o47)"/><rect x="964" y="162" width="581" height="1.6" fill="url(#o48)"/><rect x="964" y="163" width="580" height="1.6" fill="url(#o49)"/><rect x="965" y="164" width="578" height="1.6" fill="url(#o50)"/><rect x="965" y="165" width="577" height="2.6" fill="url(#o51)"/><rect x="966" y="167" width="574" height="2.6" fill="url(#o52)"/><rect x="966" y="169" width="572" height="2.6" fill="url(#o53)"/><rect x="967" y="171" width="569" height="2.6" fill="url(#o54)"/><rect x="968" y="173" width="566" height="2.6" fill="url(#o55)"/><rect x="969" y="175" width="563" height="2.6" fill="url(#o56)"/><rect x="969" y="177" width="561" height="2.6" fill="url(#o57)"/><rect x="970" y="179" width="558" height="2.6" fill="url(#o58)"/><rect x="971" y="181" width="555" height="2.6" fill="url(#o59)"/><rect x="971" y="183" width="553" height="2.6" fill="url(#o60)"/><rect x="972" y="185" width="550" height="2.6" fill="url(#o61)"/><rect x="973" y="187" width="547" height="2.6" fill="url(#o62)"/><rect x="974" y="189" width="544" height="2.6" fill="url(#o63)"/><rect x="975" y="191" width="541" height="2.6" fill="url(#o64)"/><rect x="975" y="193" width="539" height="2.6" fill="url(#o65)"/><rect x="976" y="195" width="537" height="2.6" fill="url(#o66)"/><rect x="977" y="197" width="534" height="2.6" fill="url(#o67)"/><rect x="978" y="199" width="531" height="2.6" fill="url(#o68)"/><rect x="979" y="201" width="528" height="2.6" fill="url(#o69)"/><rect x="979" y="203" width="526" height="2.6" fill="url(#o70)"/><rect x="980" y="205" width="523" height="2.6" fill="url(#o71)"/><rect x="981" y="207" width="520" height="2.6" fill="url(#o72)"/><rect x="982" y="209" width="517" height="2.6" fill="url(#o73)"/><rect x="983" y="211" width="514" height="2.6" fill="url(#o74)"/><rect x="984" y="213" width="511" height="2.6" fill="url(#o75)"/><rect x="984" y="215" width="509" height="2.6" fill="url(#o76)"/><rect x="985" y="217" width="506" height="2.6" fill="url(#o77)"/><rect x="986" y="219" width="503" height="2.6" fill="url(#o78)"/><rect x="987" y="221" width="500" height="2.6" fill="url(#o79)"/><rect x="988" y="223" width="497" height="2.6" fill="url(#o80)"/><rect x="989" y="225" width="494" height="2.6" fill="url(#o81)"/><rect x="990" y="227" width="491" height="2.6" fill="url(#o82)"/><rect x="991" y="229" width="488" height="2.6" fill="url(#o83)"/><rect x="992" y="231" width="485" height="2.6" fill="url(#o84)"/><rect x="993" y="233" width="482" height="2.6" fill="url(#o85)"/><rect x="993" y="235" width="480" height="2.6" fill="url(#o86)"/><rect x="994" y="237" width="478" height="2.6" fill="url(#o87)"/><rect x="995" y="239" width="475" height="2.6" fill="url(#o88)"/><rect x="996" y="241" width="472" height="2.6" fill="url(#o89)"/><rect x="997" y="243" width="469" height="2.6" fill="url(#o90)"/><rect x="998" y="245" width="466" height="2.6" fill="url(#o91)"/><rect x="999" y="247" width="463" height="2.6" fill="url(#o92)"/><rect x="1000" y="249" width="460" height="2.6" fill="url(#o93)"/><rect x="1001" y="251" width="457" height="2.6" fill="url(#o94)"/><rect x="1002" y="253" width="454" height="3.6" fill="url(#o95)"/><rect x="1004" y="256" width="449" height="3.6" fill="url(#o96)"/><rect x="1005" y="259" width="445" height="3.6" fill="url(#o97)"/><rect x="1007" y="262" width="440" height="3.6" fill="url(#o98)"/><rect x="1008" y="265" width="436" height="3.6" fill="url(#o99)"/><rect x="1010" y="268" width="431" height="3.6" fill="url(#o100)"/><rect x="1012" y="271" width="426" height="3.6" fill="url(#o101)"/><rect x="1013" y="274" width="422" height="3.6" fill="url(#o102)"/><rect x="1015" y="277" width="417" height="3.6" fill="url(#o103)"/><rect x="1017" y="280" width="412" height="3.6" fill="url(#o104)"/><rect x="1018" y="283" width="409" height="3.6" fill="url(#o105)"/><rect x="1020" y="286" width="404" height="3.6" fill="url(#o106)"/><rect x="1022" y="289" width="399" height="3.6" fill="url(#o107)"/><rect x="1023" y="292" width="395" height="3.6" fill="url(#o108)"/><rect x="1025" y="295" width="390" height="3.6" fill="url(#o109)"/><rect x="1027" y="298" width="385" height="3.6" fill="url(#o110)"/><rect x="1029" y="301" width="380" height="3.6" fill="url(#o111)"/><rect x="1030" y="304" width="376" height="3.6" fill="url(#o112)"/><rect x="1032" y="307" width="371" height="3.6" fill="url(#o113)"/><rect x="1034" y="310" width="366" height="3.6" fill="url(#o114)"/><rect x="1036" y="313" width="361" height="3.6" fill="url(#o115)"/><rect x="1038" y="316" width="356" height="3.6" fill="url(#o116)"/><rect x="1039" y="319" width="352" height="3.6" fill="url(#o117)"/><rect x="1041" y="322" width="347" height="3.6" fill="url(#o118)"/><rect x="1043" y="325" width="343" height="3.6" fill="url(#o119)"/><rect x="1045" y="328" width="338" height="3.6" fill="url(#o120)"/><rect x="1047" y="331" width="333" height="3.6" fill="url(#o121)"/><rect x="1049" y="334" width="328" height="3.6" fill="url(#o122)"/><rect x="1050" y="337" width="324" height="3.6" fill="url(#o123)"/><rect x="1052" y="340" width="319" height="3.6" fill="url(#o124)"/><rect x="1054" y="343" width="314" height="4.6" fill="url(#o125)"/><rect x="1057" y="347" width="307" height="4.6" fill="url(#o126)"/><rect x="1059" y="351" width="301" height="4.6" fill="url(#o127)"/><rect x="1062" y="355" width="294" height="4.6" fill="url(#o128)"/><rect x="1065" y="359" width="287" height="4.6" fill="url(#o129)"/><rect x="1067" y="363" width="281" height="4.6" fill="url(#o130)"/><rect x="1070" y="367" width="275" height="4.6" fill="url(#o131)"/><rect x="1073" y="371" width="268" height="4.6" fill="url(#o132)"/><rect x="1076" y="375" width="261" height="4.6" fill="url(#o133)"/><rect x="1078" y="379" width="255" height="4.6" fill="url(#o134)"/><rect x="1081" y="383" width="248" height="4.6" fill="url(#o135)"/><rect x="1084" y="387" width="241" height="4.6" fill="url(#o136)"/><rect x="1087" y="391" width="234" height="4.6" fill="url(#o137)"/><rect x="1090" y="395" width="227" height="4.6" fill="url(#o138)"/><rect x="1093" y="399" width="220" height="4.6" fill="url(#o139)"/><rect x="1096" y="403" width="213" height="4.6" fill="url(#o140)"/><rect x="1099" y="407" width="206" height="4.6" fill="url(#o141)"/><rect x="1103" y="411" width="199" height="4.6" fill="url(#o142)"/><rect x="1106" y="415" width="192" height="4.6" fill="url(#o143)"/><rect x="1109" y="419" width="185" height="4.6" fill="url(#o144)"/><rect x="1113" y="423" width="177" height="4.6" fill="url(#o145)"/><rect x="1116" y="427" width="170" height="4.6" fill="url(#o146)"/><rect x="1120" y="431" width="162" height="4.6" fill="url(#o147)"/><rect x="1124" y="435" width="154" height="4.6" fill="url(#o148)"/><rect x="1127" y="439" width="147" height="4.6" fill="url(#o149)"/><rect x="1131" y="443" width="139" height="4.6" fill="url(#o150)"/><rect x="1136" y="447" width="130" height="4.6" fill="url(#o151)"/><rect x="1140" y="451" width="122" height="4.6" fill="url(#o152)"/><rect x="1144" y="455" width="115" height="4.6" fill="url(#o153)"/><rect x="1149" y="459" width="106" height="4.6" fill="url(#o154)"/><rect x="1153" y="463" width="98" height="4.6" fill="url(#o155)"/><rect x="1158" y="467" width="89" height="4.6" fill="url(#o156)"/><rect x="1163" y="471" width="80" height="4.6" fill="url(#o157)"/><rect x="1168" y="475" width="71" height="4.6" fill="url(#o158)"/><rect x="1172" y="479" width="63" height="4.6" fill="url(#o159)"/><rect x="1177" y="483" width="54" height="4.6" fill="url(#o160)"/><rect x="1182" y="487" width="45" height="4.6" fill="url(#o161)"/><rect x="1187" y="491" width="36" height="4.6" fill="url(#o162)"/><rect x="1192" y="495" width="27" height="4.6" fill="url(#o163)"/><rect x="1197" y="499" width="19" height="4.6" fill="url(#o164)"/><rect x="1202" y="503" width="10" height="2.6" fill="url(#o165)"/></g><g clip-path="url(#ctri)"><rect x="1049" y="73" width="41" height="4.6" fill="url(#i0)"/><rect x="1050" y="77" width="69" height="3.6" fill="url(#i1)"/><rect x="1051" y="80" width="98" height="3.6" fill="url(#i2)"/><rect x="1051" y="83" width="128" height="3.6" fill="url(#i3)"/><rect x="1052" y="86" width="157" height="3.6" fill="url(#i4)"/><rect x="1053" y="89" width="176" height="2.6" fill="url(#i5)"/><rect x="1053" y="91" width="195" height="2.6" fill="url(#i6)"/><rect x="1054" y="93" width="214" height="2.6" fill="url(#i7)"/><rect x="1054" y="95" width="234" height="2.6" fill="url(#i8)"/><rect x="1055" y="97" width="253" height="2.6" fill="url(#i9)"/><rect x="1055" y="99" width="273" height="2.6" fill="url(#i10)"/><rect x="1056" y="101" width="292" height="2.6" fill="url(#i11)"/><rect x="1056" y="103" width="312" height="2.6" fill="url(#i12)"/><rect x="1057" y="105" width="331" height="2.6" fill="url(#i13)"/><rect x="1057" y="107" width="350" height="2.6" fill="url(#i14)"/><rect x="1058" y="109" width="369" height="2.6" fill="url(#i15)"/><rect x="1058" y="111" width="389" height="2.6" fill="url(#i16)"/><rect x="1059" y="113" width="391" height="1.6" fill="url(#i17)"/><rect x="1059" y="114" width="390" height="1.6" fill="url(#i18)"/><rect x="1059" y="115" width="389" height="1.6" fill="url(#i19)"/><rect x="1059" y="116" width="388" height="1.6" fill="url(#i20)"/><rect x="1060" y="117" width="386" height="1.6" fill="url(#i21)"/><rect x="1060" y="118" width="384" height="1.6" fill="url(#i22)"/><rect x="1060" y="119" width="383" height="1.6" fill="url(#i23)"/><rect x="1060" y="120" width="382" height="1.6" fill="url(#i24)"/><rect x="1061" y="121" width="380" height="1.6" fill="url(#i25)"/><rect x="1061" y="122" width="379" height="1.6" fill="url(#i26)"/><rect x="1061" y="123" width="378" height="1.6" fill="url(#i27)"/><rect x="1061" y="124" width="377" height="1.6" fill="url(#i28)"/><rect x="1061" y="125" width="375" height="1.6" fill="url(#i29)"/><rect x="1062" y="126" width="373" height="1.6" fill="url(#i30)"/><rect x="1062" y="127" width="372" height="1.6" fill="url(#i31)"/><rect x="1062" y="128" width="371" height="1.6" fill="url(#i32)"/><rect x="1062" y="129" width="370" height="1.6" fill="url(#i33)"/><rect x="1063" y="130" width="368" height="1.6" fill="url(#i34)"/><rect x="1063" y="131" width="367" height="1.6" fill="url(#i35)"/><rect x="1063" y="132" width="365" height="1.6" fill="url(#i36)"/><rect x="1063" y="133" width="364" height="1.6" fill="url(#i37)"/><rect x="1064" y="134" width="362" height="1.6" fill="url(#i38)"/><rect x="1064" y="135" width="361" height="1.6" fill="url(#i39)"/><rect x="1064" y="136" width="360" height="1.6" fill="url(#i40)"/><rect x="1064" y="137" width="359" height="1.6" fill="url(#i41)"/><rect x="1065" y="138" width="357" height="1.6" fill="url(#i42)"/><rect x="1065" y="139" width="356" height="1.6" fill="url(#i43)"/><rect x="1065" y="140" width="354" height="1.6" fill="url(#i44)"/><rect x="1065" y="141" width="353" height="1.6" fill="url(#i45)"/><rect x="1066" y="142" width="351" height="1.6" fill="url(#i46)"/><rect x="1066" y="143" width="350" height="1.6" fill="url(#i47)"/><rect x="1066" y="144" width="349" height="1.6" fill="url(#i48)"/><rect x="1066" y="145" width="348" height="1.6" fill="url(#i49)"/><rect x="1066" y="146" width="347" height="1.6" fill="url(#i50)"/><rect x="1067" y="147" width="344" height="1.6" fill="url(#i51)"/><rect x="1067" y="148" width="343" height="1.6" fill="url(#i52)"/><rect x="1067" y="149" width="342" height="1.6" fill="url(#i53)"/><rect x="1067" y="150" width="341" height="1.6" fill="url(#i54)"/><rect x="1068" y="151" width="339" height="1.6" fill="url(#i55)"/><rect x="1068" y="152" width="338" height="1.6" fill="url(#i56)"/><rect x="1068" y="153" width="337" height="1.6" fill="url(#i57)"/><rect x="1068" y="154" width="335" height="1.6" fill="url(#i58)"/><rect x="1069" y="155" width="333" height="1.6" fill="url(#i59)"/><rect x="1069" y="156" width="332" height="1.6" fill="url(#i60)"/><rect x="1069" y="157" width="331" height="1.6" fill="url(#i61)"/><rect x="1069" y="158" width="330" height="1.6" fill="url(#i62)"/><rect x="1070" y="159" width="328" height="1.6" fill="url(#i63)"/><rect x="1070" y="160" width="327" height="1.6" fill="url(#i64)"/><rect x="1070" y="161" width="326" height="1.6" fill="url(#i65)"/><rect x="1070" y="162" width="324" height="1.6" fill="url(#i66)"/><rect x="1071" y="163" width="322" height="1.6" fill="url(#i67)"/><rect x="1071" y="164" width="321" height="1.6" fill="url(#i68)"/><rect x="1071" y="165" width="320" height="1.6" fill="url(#i69)"/><rect x="1071" y="166" width="319" height="1.6" fill="url(#i70)"/><rect x="1071" y="167" width="318" height="1.6" fill="url(#i71)"/><rect x="1072" y="168" width="316" height="1.6" fill="url(#i72)"/><rect x="1072" y="169" width="314" height="1.6" fill="url(#i73)"/><rect x="1072" y="170" width="313" height="1.6" fill="url(#i74)"/><rect x="1072" y="171" width="312" height="1.6" fill="url(#i75)"/><rect x="1073" y="172" width="310" height="1.6" fill="url(#i76)"/><rect x="1073" y="173" width="309" height="1.6" fill="url(#i77)"/><rect x="1073" y="174" width="308" height="1.6" fill="url(#i78)"/><rect x="1073" y="175" width="307" height="1.6" fill="url(#i79)"/><rect x="1074" y="176" width="304" height="1.6" fill="url(#i80)"/><rect x="1074" y="177" width="303" height="1.6" fill="url(#i81)"/><rect x="1074" y="178" width="302" height="1.6" fill="url(#i82)"/><rect x="1074" y="179" width="301" height="1.6" fill="url(#i83)"/><rect x="1075" y="180" width="299" height="1.6" fill="url(#i84)"/><rect x="1075" y="181" width="298" height="1.6" fill="url(#i85)"/><rect x="1075" y="182" width="297" height="1.6" fill="url(#i86)"/><rect x="1075" y="183" width="296" height="1.6" fill="url(#i87)"/><rect x="1076" y="184" width="293" height="1.6" fill="url(#i88)"/><rect x="1076" y="185" width="292" height="1.6" fill="url(#i89)"/><rect x="1076" y="186" width="291" height="1.6" fill="url(#i90)"/><rect x="1076" y="187" width="290" height="1.6" fill="url(#i91)"/><rect x="1076" y="188" width="289" height="1.6" fill="url(#i92)"/><rect x="1077" y="189" width="287" height="1.6" fill="url(#i93)"/><rect x="1077" y="190" width="286" height="1.6" fill="url(#i94)"/><rect x="1077" y="191" width="284" height="1.6" fill="url(#i95)"/><rect x="1077" y="192" width="283" height="1.6" fill="url(#i96)"/><rect x="1078" y="193" width="281" height="1.6" fill="url(#i97)"/><rect x="1078" y="194" width="280" height="1.6" fill="url(#i98)"/><rect x="1078" y="195" width="279" height="1.6" fill="url(#i99)"/><rect x="1078" y="196" width="278" height="1.6" fill="url(#i100)"/><rect x="1079" y="197" width="276" height="1.6" fill="url(#i101)"/><rect x="1079" y="198" width="274" height="1.6" fill="url(#i102)"/><rect x="1079" y="199" width="273" height="1.6" fill="url(#i103)"/><rect x="1079" y="200" width="272" height="1.6" fill="url(#i104)"/><rect x="1080" y="201" width="270" height="1.6" fill="url(#i105)"/><rect x="1080" y="202" width="269" height="1.6" fill="url(#i106)"/><rect x="1080" y="203" width="268" height="1.6" fill="url(#i107)"/><rect x="1080" y="204" width="267" height="1.6" fill="url(#i108)"/><rect x="1081" y="205" width="265" height="1.6" fill="url(#i109)"/><rect x="1081" y="206" width="263" height="1.6" fill="url(#i110)"/><rect x="1081" y="207" width="262" height="1.6" fill="url(#i111)"/><rect x="1081" y="208" width="261" height="1.6" fill="url(#i112)"/><rect x="1082" y="209" width="259" height="1.6" fill="url(#i113)"/><rect x="1082" y="210" width="258" height="1.6" fill="url(#i114)"/><rect x="1082" y="211" width="257" height="1.6" fill="url(#i115)"/><rect x="1082" y="212" width="256" height="1.6" fill="url(#i116)"/><rect x="1082" y="213" width="254" height="1.6" fill="url(#i117)"/><rect x="1083" y="214" width="252" height="1.6" fill="url(#i118)"/><rect x="1083" y="215" width="251" height="1.6" fill="url(#i119)"/><rect x="1083" y="216" width="250" height="1.6" fill="url(#i120)"/><rect x="1083" y="217" width="249" height="1.6" fill="url(#i121)"/><rect x="1084" y="218" width="247" height="1.6" fill="url(#i122)"/><rect x="1084" y="219" width="246" height="1.6" fill="url(#i123)"/><rect x="1084" y="220" width="244" height="1.6" fill="url(#i124)"/><rect x="1084" y="221" width="243" height="1.6" fill="url(#i125)"/><rect x="1085" y="222" width="241" height="1.6" fill="url(#i126)"/><rect x="1085" y="223" width="240" height="1.6" fill="url(#i127)"/><rect x="1085" y="224" width="239" height="2.6" fill="url(#i128)"/><rect x="1086" y="226" width="236" height="2.6" fill="url(#i129)"/><rect x="1086" y="228" width="233" height="2.6" fill="url(#i130)"/><rect x="1087" y="230" width="230" height="2.6" fill="url(#i131)"/><rect x="1087" y="232" width="228" height="2.6" fill="url(#i132)"/><rect x="1087" y="234" width="226" height="2.6" fill="url(#i133)"/><rect x="1088" y="236" width="222" height="2.6" fill="url(#i134)"/><rect x="1088" y="238" width="220" height="2.6" fill="url(#i135)"/><rect x="1089" y="240" width="217" height="2.6" fill="url(#i136)"/><rect x="1089" y="242" width="215" height="2.6" fill="url(#i137)"/><rect x="1090" y="244" width="211" height="2.6" fill="url(#i138)"/><rect x="1090" y="246" width="209" height="2.6" fill="url(#i139)"/><rect x="1091" y="248" width="206" height="2.6" fill="url(#i140)"/><rect x="1091" y="250" width="203" height="2.6" fill="url(#i141)"/><rect x="1092" y="252" width="200" height="2.6" fill="url(#i142)"/><rect x="1092" y="254" width="198" height="2.6" fill="url(#i143)"/><rect x="1093" y="256" width="195" height="2.6" fill="url(#i144)"/><rect x="1093" y="258" width="192" height="2.6" fill="url(#i145)"/><rect x="1094" y="260" width="189" height="2.6" fill="url(#i146)"/><rect x="1094" y="262" width="187" height="2.6" fill="url(#i147)"/><rect x="1095" y="264" width="184" height="2.6" fill="url(#i148)"/><rect x="1095" y="266" width="181" height="2.6" fill="url(#i149)"/><rect x="1096" y="268" width="178" height="2.6" fill="url(#i150)"/><rect x="1096" y="270" width="176" height="2.6" fill="url(#i151)"/><rect x="1097" y="272" width="172" height="2.6" fill="url(#i152)"/><rect x="1097" y="274" width="170" height="2.6" fill="url(#i153)"/><rect x="1097" y="276" width="168" height="2.6" fill="url(#i154)"/><rect x="1098" y="278" width="165" height="2.6" fill="url(#i155)"/><rect x="1098" y="280" width="162" height="2.6" fill="url(#i156)"/><rect x="1099" y="282" width="159" height="2.6" fill="url(#i157)"/><rect x="1099" y="284" width="157" height="2.6" fill="url(#i158)"/><rect x="1100" y="286" width="154" height="3.6" fill="url(#i159)"/><rect x="1101" y="289" width="149" height="3.6" fill="url(#i160)"/><rect x="1101" y="292" width="146" height="3.6" fill="url(#i161)"/><rect x="1102" y="295" width="141" height="3.6" fill="url(#i162)"/><rect x="1103" y="298" width="137" height="3.6" fill="url(#i163)"/><rect x="1103" y="301" width="133" height="3.6" fill="url(#i164)"/><rect x="1104" y="304" width="129" height="4.6" fill="url(#i165)"/><rect x="1105" y="308" width="124" height="4.6" fill="url(#i166)"/><rect x="1106" y="312" width="118" height="4.6" fill="url(#i167)"/><rect x="1107" y="316" width="112" height="4.6" fill="url(#i168)"/><rect x="1108" y="320" width="107" height="4.6" fill="url(#i169)"/><rect x="1109" y="324" width="101" height="4.6" fill="url(#i170)"/><rect x="1110" y="328" width="96" height="4.6" fill="url(#i171)"/><rect x="1111" y="332" width="90" height="4.6" fill="url(#i172)"/><rect x="1112" y="336" width="85" height="4.6" fill="url(#i173)"/><rect x="1113" y="340" width="79" height="4.6" fill="url(#i174)"/><rect x="1114" y="344" width="74" height="4.6" fill="url(#i175)"/><rect x="1115" y="348" width="68" height="4.6" fill="url(#i176)"/><rect x="1116" y="352" width="63" height="4.6" fill="url(#i177)"/><rect x="1117" y="356" width="57" height="4.6" fill="url(#i178)"/><rect x="1117" y="360" width="52" height="4.6" fill="url(#i179)"/><rect x="1118" y="364" width="47" height="4.6" fill="url(#i180)"/><rect x="1119" y="368" width="41" height="4.6" fill="url(#i181)"/><rect x="1120" y="372" width="36" height="4.6" fill="url(#i182)"/><rect x="1121" y="376" width="30" height="4.6" fill="url(#i183)"/><rect x="1122" y="380" width="25" height="4.6" fill="url(#i184)"/><rect x="1123" y="384" width="19" height="4.6" fill="url(#i185)"/><rect x="1124" y="388" width="14" height="4.6" fill="url(#i186)"/><rect x="1125" y="392" width="8" height="3.6" fill="url(#i187)"/></g></g>
<rect x="952.3" y="56.6" width="600.2" height="461.5" fill="none" stroke="#a8a8a8" stroke-width="1.3"/>
<line x1="946.8" y1="518.4" x2="952.3" y2="518.4" stroke="#e0e0e0" stroke-width="2"/>
<text x="939.04" y="523.8" font-size="13" textLength="7.23" lengthAdjust="spacingAndGlyphs" fill="#d6d6d6" stroke="#d6d6d6" stroke-width="0.2">0</text>
<line x1="946.8" y1="479.98" x2="952.3" y2="479.98" stroke="#e0e0e0" stroke-width="1.3"/>
<text x="921.03" y="485.38" font-size="13" textLength="25.3" lengthAdjust="spacingAndGlyphs" fill="#d6d6d6" stroke="#d6d6d6" stroke-width="0.2">0,05</text>
<line x1="946.8" y1="441.56" x2="952.3" y2="441.56" stroke="#e0e0e0" stroke-width="2"/>
<text x="928.31" y="446.96" font-size="13" textLength="18.07" lengthAdjust="spacingAndGlyphs" fill="#d6d6d6" stroke="#d6d6d6" stroke-width="0.2">0,1</text>
<line x1="946.8" y1="403.14" x2="952.3" y2="403.14" stroke="#e0e0e0" stroke-width="1.3"/>
<text x="921.03" y="408.54" font-size="13" textLength="25.3" lengthAdjust="spacingAndGlyphs" fill="#d6d6d6" stroke="#d6d6d6" stroke-width="0.2">0,15</text>
<line x1="946.8" y1="364.72" x2="952.3" y2="364.72" stroke="#e0e0e0" stroke-width="2"/>
<text x="928.38" y="370.12" font-size="13" textLength="18.07" lengthAdjust="spacingAndGlyphs" fill="#d6d6d6" stroke="#d6d6d6" stroke-width="0.2">0,2</text>
<line x1="946.8" y1="326.3" x2="952.3" y2="326.3" stroke="#e0e0e0" stroke-width="1.3"/>
<text x="921.03" y="331.7" font-size="13" textLength="25.3" lengthAdjust="spacingAndGlyphs" fill="#d6d6d6" stroke="#d6d6d6" stroke-width="0.2">0,25</text>
<line x1="946.8" y1="287.88" x2="952.3" y2="287.88" stroke="#e0e0e0" stroke-width="2"/>
<text x="928.25" y="293.28" font-size="13" textLength="18.07" lengthAdjust="spacingAndGlyphs" fill="#d6d6d6" stroke="#d6d6d6" stroke-width="0.2">0,3</text>
<line x1="946.8" y1="249.46" x2="952.3" y2="249.46" stroke="#e0e0e0" stroke-width="1.3"/>
<text x="921.03" y="254.86" font-size="13" textLength="25.3" lengthAdjust="spacingAndGlyphs" fill="#d6d6d6" stroke="#d6d6d6" stroke-width="0.2">0,35</text>
<line x1="946.8" y1="211.04" x2="952.3" y2="211.04" stroke="#e0e0e0" stroke-width="2"/>
<text x="928.05" y="216.44" font-size="13" textLength="18.07" lengthAdjust="spacingAndGlyphs" fill="#d6d6d6" stroke="#d6d6d6" stroke-width="0.2">0,4</text>
<line x1="946.8" y1="172.62" x2="952.3" y2="172.62" stroke="#e0e0e0" stroke-width="1.3"/>
<text x="921.03" y="178.02" font-size="13" textLength="25.3" lengthAdjust="spacingAndGlyphs" fill="#d6d6d6" stroke="#d6d6d6" stroke-width="0.2">0,45</text>
<line x1="946.8" y1="134.2" x2="952.3" y2="134.2" stroke="#e0e0e0" stroke-width="2"/>
<text x="928.25" y="139.6" font-size="13" textLength="18.07" lengthAdjust="spacingAndGlyphs" fill="#d6d6d6" stroke="#d6d6d6" stroke-width="0.2">0,5</text>
<line x1="946.8" y1="95.78" x2="952.3" y2="95.78" stroke="#e0e0e0" stroke-width="1.3"/>
<text x="921.03" y="101.18" font-size="13" textLength="25.3" lengthAdjust="spacingAndGlyphs" fill="#d6d6d6" stroke="#d6d6d6" stroke-width="0.2">0,55</text>
<line x1="952.3" y1="518.1" x2="952.3" y2="523.6" stroke="#e0e0e0" stroke-width="2"/>
<text x="948.66" y="539" font-size="13" textLength="7.23" lengthAdjust="spacingAndGlyphs" fill="#d6d6d6" stroke="#d6d6d6" stroke-width="0.2">0</text>
<line x1="1002.31" y1="518.1" x2="1002.31" y2="523.6" stroke="#e0e0e0" stroke-width="1.3"/>
<text x="989.67" y="539" font-size="13" textLength="25.3" lengthAdjust="spacingAndGlyphs" fill="#d6d6d6" stroke="#d6d6d6" stroke-width="0.2">0,05</text>
<line x1="1052.33" y1="518.1" x2="1052.33" y2="523.6" stroke="#e0e0e0" stroke-width="2"/>
<text x="1043.33" y="539" font-size="13" textLength="18.07" lengthAdjust="spacingAndGlyphs" fill="#d6d6d6" stroke="#d6d6d6" stroke-width="0.2">0,1</text>
<line x1="1102.35" y1="518.1" x2="1102.35" y2="523.6" stroke="#e0e0e0" stroke-width="1.3"/>
<text x="1089.7" y="539" font-size="13" textLength="25.3" lengthAdjust="spacingAndGlyphs" fill="#d6d6d6" stroke="#d6d6d6" stroke-width="0.2">0,15</text>
<line x1="1152.36" y1="518.1" x2="1152.36" y2="523.6" stroke="#e0e0e0" stroke-width="2"/>
<text x="1143.39" y="539" font-size="13" textLength="18.07" lengthAdjust="spacingAndGlyphs" fill="#d6d6d6" stroke="#d6d6d6" stroke-width="0.2">0,2</text>
<line x1="1202.38" y1="518.1" x2="1202.38" y2="523.6" stroke="#e0e0e0" stroke-width="1.3"/>
<text x="1189.73" y="539" font-size="13" textLength="25.3" lengthAdjust="spacingAndGlyphs" fill="#d6d6d6" stroke="#d6d6d6" stroke-width="0.2">0,25</text>
<line x1="1252.39" y1="518.1" x2="1252.39" y2="523.6" stroke="#e0e0e0" stroke-width="2"/>
<text x="1243.35" y="539" font-size="13" textLength="18.07" lengthAdjust="spacingAndGlyphs" fill="#d6d6d6" stroke="#d6d6d6" stroke-width="0.2">0,3</text>
<line x1="1302.4" y1="518.1" x2="1302.4" y2="523.6" stroke="#e0e0e0" stroke-width="1.3"/>
<text x="1289.76" y="539" font-size="13" textLength="25.3" lengthAdjust="spacingAndGlyphs" fill="#d6d6d6" stroke="#d6d6d6" stroke-width="0.2">0,35</text>
<line x1="1352.42" y1="518.1" x2="1352.42" y2="523.6" stroke="#e0e0e0" stroke-width="2"/>
<text x="1343.29" y="539" font-size="13" textLength="18.07" lengthAdjust="spacingAndGlyphs" fill="#d6d6d6" stroke="#d6d6d6" stroke-width="0.2">0,4</text>
<line x1="1402.43" y1="518.1" x2="1402.43" y2="523.6" stroke="#e0e0e0" stroke-width="1.3"/>
<text x="1389.79" y="539" font-size="13" textLength="25.3" lengthAdjust="spacingAndGlyphs" fill="#d6d6d6" stroke="#d6d6d6" stroke-width="0.2">0,45</text>
<line x1="1452.45" y1="518.1" x2="1452.45" y2="523.6" stroke="#e0e0e0" stroke-width="2"/>
<text x="1443.41" y="539" font-size="13" textLength="18.07" lengthAdjust="spacingAndGlyphs" fill="#d6d6d6" stroke="#d6d6d6" stroke-width="0.2">0,5</text>
<line x1="1502.46" y1="518.1" x2="1502.46" y2="523.6" stroke="#e0e0e0" stroke-width="1.3"/>
<text x="1489.82" y="539" font-size="13" textLength="25.3" lengthAdjust="spacingAndGlyphs" fill="#d6d6d6" stroke="#d6d6d6" stroke-width="0.2">0,55</text>
<rect x="1045" y="67.1" width="12.0" height="12.0" fill="#fff" fill-opacity="0" stroke="#f4f4f4" stroke-width="1.45"/>
<rect x="1058.1" y="76.8" width="12.0" height="12.0" fill="#fff" fill-opacity=".25" stroke="#f4f4f4" stroke-width="1.45"/>
<rect x="1071.9" y="90.1" width="12.0" height="12.0" fill="#fff" fill-opacity=".25" stroke="#f4f4f4" stroke-width="1.45"/>
<rect x="1090.8" y="106.9" width="12.0" height="12.0" fill="#fff" fill-opacity=".25" stroke="#f4f4f4" stroke-width="1.45"/>
<rect x="1114" y="126.1" width="12.0" height="12.0" fill="#fff" fill-opacity=".25" stroke="#f4f4f4" stroke-width="1.45"/>
<rect x="1151.1" y="76.8" width="12.0" height="12.0" fill="#fff" fill-opacity="0" stroke="#fbfbe8" stroke-width="1.45"/>
<rect x="1150" y="90.1" width="12.0" height="12.0" fill="#fff" fill-opacity=".35" stroke="#fbfbe8" stroke-width="1.45"/>
<rect x="1148.4" y="104.4" width="12.0" height="12.0" fill="#fff" fill-opacity=".35" stroke="#fbfbe8" stroke-width="1.45"/>
<rect x="1147.1" y="118.5" width="12.0" height="12.0" fill="#fff" fill-opacity=".35" stroke="#fbfbe8" stroke-width="1.45"/>
<rect x="1146" y="132.4" width="12.0" height="12.0" fill="#fff" fill-opacity=".35" stroke="#fbfbe8" stroke-width="1.45"/>
<rect x="1442" y="106.9" width="12.0" height="12.0" fill="#fff" fill-opacity="0" stroke="#f4f4f4" stroke-width="1.45"/>
<rect x="1376.1" y="116.8" width="12.0" height="12.0" fill="#fff" fill-opacity=".25" stroke="#f4f4f4" stroke-width="1.45"/>
<rect x="1314.1" y="126" width="12.0" height="12.0" fill="#fff" fill-opacity=".25" stroke="#f4f4f4" stroke-width="1.45"/>
<rect x="1251.2" y="135.9" width="12.0" height="12.0" fill="#fff" fill-opacity=".25" stroke="#f4f4f4" stroke-width="1.45"/>
<rect x="1196.2" y="143.8" width="12.0" height="12.0" fill="#fff" fill-opacity=".25" stroke="#f4f4f4" stroke-width="1.45"/>
<rect x="1270" y="258.2" width="12.0" height="12.0" fill="#fff" fill-opacity="0" stroke="#f4f4f4" stroke-width="1.45"/>
<rect x="1234.9" y="228.9" width="12.0" height="12.0" fill="#fff" fill-opacity=".25" stroke="#f4f4f4" stroke-width="1.45"/>
<rect x="1207" y="204.9" width="12.0" height="12.0" fill="#fff" fill-opacity=".25" stroke="#f4f4f4" stroke-width="1.45"/>
<rect x="1181.9" y="183.2" width="12.0" height="12.0" fill="#fff" fill-opacity=".25" stroke="#f4f4f4" stroke-width="1.45"/>
<rect x="1161" y="165.1" width="12.0" height="12.0" fill="#fff" fill-opacity=".25" stroke="#f4f4f4" stroke-width="1.45"/>
<rect x="1121.1" y="389.4" width="12.0" height="12.0" fill="#fff" fill-opacity="0" stroke="#f4f4f4" stroke-width="1.45"/>
<rect x="1127.2" y="315.8" width="12.0" height="12.0" fill="#fff" fill-opacity=".25" stroke="#f4f4f4" stroke-width="1.45"/>
<rect x="1133.3" y="258.2" width="12.0" height="12.0" fill="#fff" fill-opacity=".25" stroke="#f4f4f4" stroke-width="1.45"/>
<rect x="1137" y="214.1" width="12.0" height="12.0" fill="#fff" fill-opacity=".25" stroke="#f4f4f4" stroke-width="1.45"/>
<rect x="1140.7" y="179.7" width="12.0" height="12.0" fill="#fff" fill-opacity=".25" stroke="#f4f4f4" stroke-width="1.45"/>
<rect x="1067" y="163" width="12.0" height="12.0" fill="#fff" fill-opacity="0" stroke="#f4f4f4" stroke-width="1.45"/>
<rect x="1081.9" y="160" width="12.0" height="12.0" fill="#fff" fill-opacity=".25" stroke="#f4f4f4" stroke-width="1.45"/>
<rect x="1097" y="157.8" width="12.0" height="12.0" fill="#fff" fill-opacity=".25" stroke="#f4f4f4" stroke-width="1.45"/>
<rect x="1112.7" y="156.5" width="12.0" height="12.0" fill="#fff" fill-opacity=".25" stroke="#f4f4f4" stroke-width="1.45"/>
<rect x="1127.8" y="153.8" width="12.0" height="12.0" fill="#fff" fill-opacity=".25" stroke="#f4f4f4" stroke-width="1.45"/>
<rect x="1143" y="150.9" width="11.8" height="11.8" fill="#fff" fill-opacity=".3" stroke="#000" stroke-width="2"/>
<circle cx="1049.2" cy="74.3" r="4.0" fill="#1eaa1e" stroke="#000" stroke-width="1.1"/>
<circle cx="1063.5" cy="84.3" r="4.0" fill="#58a24c" stroke="#000" stroke-width="1.1"/>
<circle cx="1079.2" cy="97.3" r="4.0" fill="#70a462" stroke="#000" stroke-width="1.1"/>
<circle cx="1096.4" cy="113.8" r="4.0" fill="#84a878" stroke="#000" stroke-width="1.1"/>
<circle cx="1121.2" cy="133.4" r="4.0" fill="#98aa8c" stroke="#000" stroke-width="1.1"/>
<circle cx="1159.5" cy="84.3" r="4.0" fill="#bcb226" stroke="#000" stroke-width="1.1"/>
<circle cx="1156.4" cy="96.5" r="4.0" fill="#b8b052" stroke="#000" stroke-width="1.1"/>
<circle cx="1155.4" cy="110.3" r="4.0" fill="#b6b06c" stroke="#000" stroke-width="1.1"/>
<circle cx="1154.3" cy="124.4" r="4.0" fill="#b4b084" stroke="#000" stroke-width="1.1"/>
<circle cx="1153.5" cy="138.3" r="4.0" fill="#b0ae94" stroke="#000" stroke-width="1.1"/>
<circle cx="1433.6" cy="112.3" r="4.0" fill="#c41e1e" stroke="#000" stroke-width="1.1"/>
<circle cx="1373.8" cy="121.6" r="4.0" fill="#bc4646" stroke="#000" stroke-width="1.1"/>
<circle cx="1315.3" cy="130.4" r="4.0" fill="#b45c5c" stroke="#000" stroke-width="1.1"/>
<circle cx="1255.5" cy="140.5" r="4.0" fill="#ac6c6c" stroke="#000" stroke-width="1.1"/>
<circle cx="1201.7" cy="149.3" r="4.0" fill="#a67e7e" stroke="#000" stroke-width="1.1"/>
<circle cx="1274.7" cy="259.8" r="4.0" fill="#a82ea8" stroke="#000" stroke-width="1.1"/>
<circle cx="1239.3" cy="231.1" r="4.0" fill="#b45cb4" stroke="#000" stroke-width="1.1"/>
<circle cx="1210.5" cy="208.4" r="4.0" fill="#b078b0" stroke="#000" stroke-width="1.1"/>
<circle cx="1187.4" cy="187.7" r="4.0" fill="#aa8aaa" stroke="#000" stroke-width="1.1"/>
<circle cx="1167.2" cy="171.5" r="4.0" fill="#a898a8" stroke="#000" stroke-width="1.1"/>
<circle cx="1120.8" cy="402.7" r="4.0" fill="#1c1c8c" stroke="#10104a" stroke-width="1.1"/>
<circle cx="1130.6" cy="322.5" r="4.0" fill="#4e4eb4" stroke="#000" stroke-width="1.1"/>
<circle cx="1137.4" cy="263.5" r="4.0" fill="#6e6eb4" stroke="#000" stroke-width="1.1"/>
<circle cx="1142.3" cy="220" r="4.0" fill="#8484b4" stroke="#000" stroke-width="1.1"/>
<circle cx="1146.2" cy="185.3" r="4.0" fill="#9c9cc0" stroke="#000" stroke-width="1.1"/>
<circle cx="1070.5" cy="170.2" r="4.0" fill="#1eaab4" stroke="#000" stroke-width="1.1"/>
<circle cx="1086.4" cy="167" r="4.0" fill="#54aaaa" stroke="#000" stroke-width="1.1"/>
<circle cx="1103.2" cy="165.4" r="4.0" fill="#72aaaa" stroke="#000" stroke-width="1.1"/>
<circle cx="1118.5" cy="162.4" r="4.0" fill="#84aaaa" stroke="#000" stroke-width="1.1"/>
<circle cx="1133.5" cy="158.9" r="4.0" fill="#96aaaa" stroke="#000" stroke-width="1.1"/>
<circle cx="1150.2" cy="157.3" r="4.2" fill="#fff" stroke="#000" stroke-width="1.2"/>
<circle cx="1139.2" cy="188.1" r="4.4" fill="#000"/>
<linearGradient id="insb" x1="0" y1="0" x2="1" y2="1"><stop offset="0" stop-color="#a4ff00"/><stop offset=".45" stop-color="#ffff00"/><stop offset="1" stop-color="#ffb400"/></linearGradient>
<linearGradient id="inso" x1="0" y1="0" x2="1" y2="1"><stop offset="0" stop-color="#6a9600"/><stop offset=".5" stop-color="#8f9000"/><stop offset="1" stop-color="#a07400"/></linearGradient>
<rect x="1345.3" y="373.8" width="203.1" height="138.1" fill="#262626"/>
<rect x="1348.3" y="376.7" width="198.5" height="133.8" fill="#232323"/>
<path d="M1348.3 376.7 H1447.1 L1546.8 443.7 V510.5 H1348.3 Z" fill="url(#inso)"/>
<path d="M1348.3 383.6 L1546.8 501.7 V510.5 H1348.3 Z" fill="url(#insb)"/>
<rect x="1348.3" y="376.7" width="198.5" height="133.8" fill="none" stroke="#9a9a9a" stroke-width="1.3"/>
<rect x="1440.2" y="436.9" width="11.8" height="11.8" fill="#fff" fill-opacity=".2" stroke="#f4f4f4" stroke-width="1.7"/>
<circle cx="1452.4" cy="454.4" r="4.3" fill="#b4aa20" stroke="#000" stroke-width="1.3"/>
</svg></body></html>
